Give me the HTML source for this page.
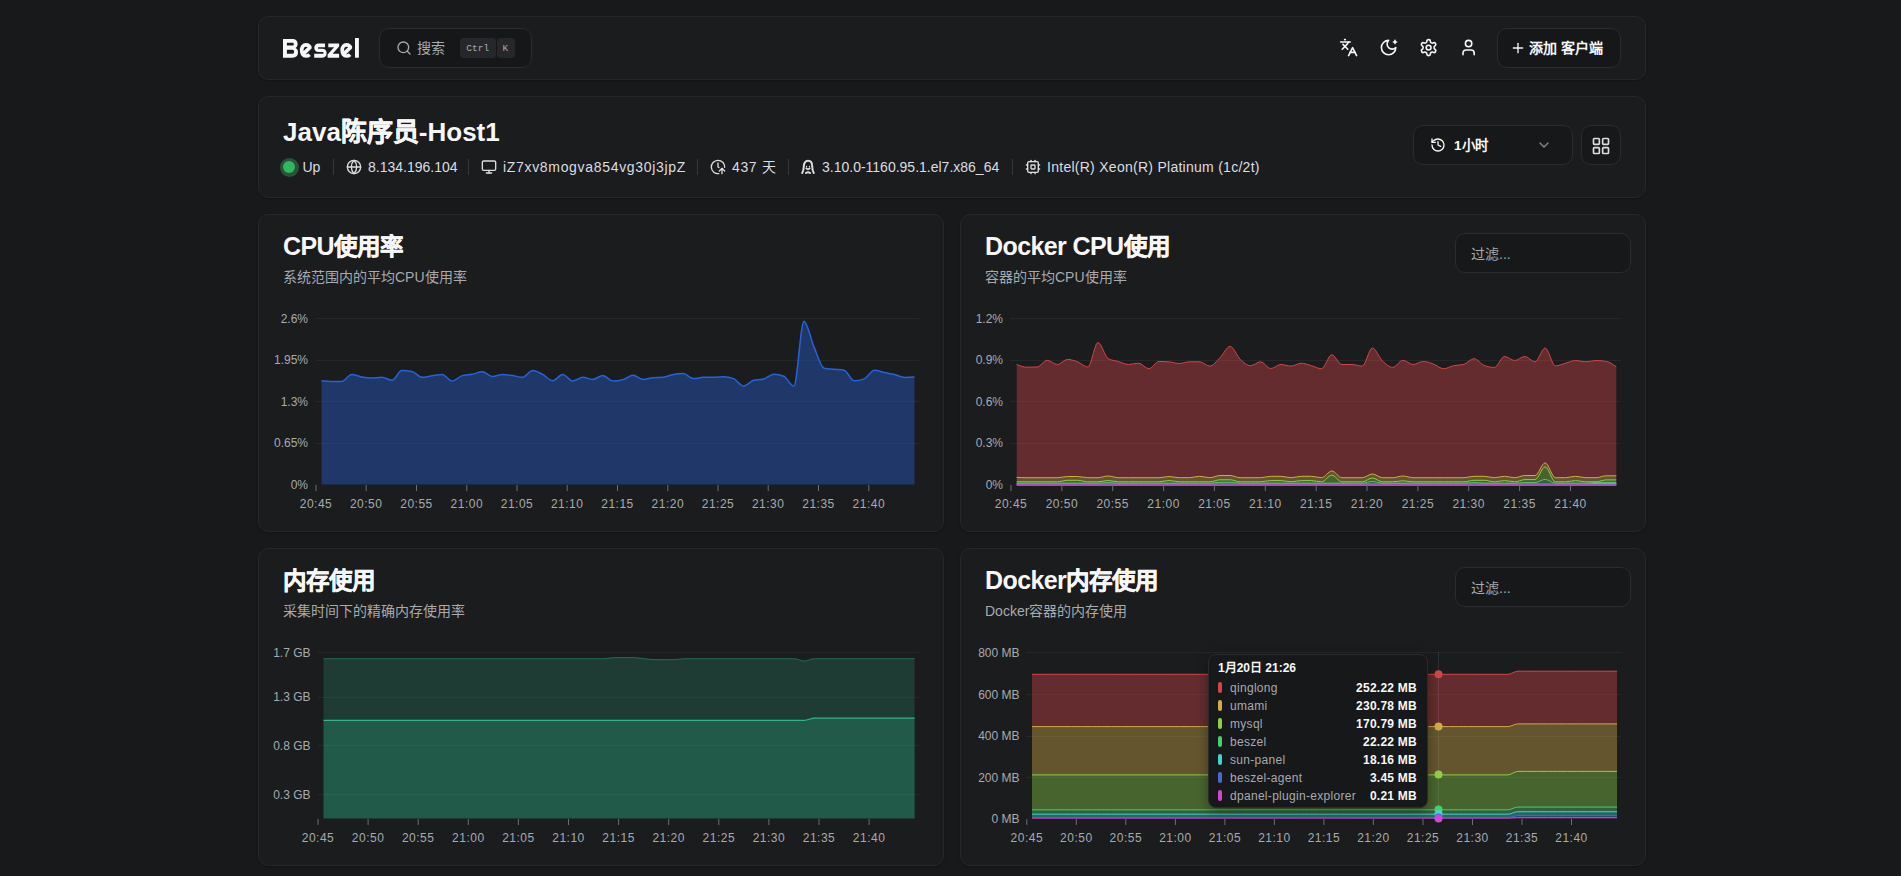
<!DOCTYPE html>
<html lang="zh-CN"><head><meta charset="utf-8">
<style>
*{box-sizing:border-box;margin:0;padding:0}
html,body{width:1901px;height:876px;overflow:hidden;background:#18191b;font-family:"Liberation Sans",sans-serif;color:#f7f7f8}
.abs{position:absolute}
.card{position:absolute;background:#1b1c1e;border:1px solid #262729;border-radius:10px;box-shadow:0 1px 2px rgba(0,0,0,.25)}
.btn{position:absolute;border:1px solid #2b2c2f;border-radius:10px;background:#171819}
.t{position:absolute;white-space:nowrap;line-height:1}
.ico{position:absolute;fill:none;stroke:currentColor;stroke-width:2;stroke-linecap:round;stroke-linejoin:round;overflow:visible}
.title{font-size:25px;font-weight:bold;letter-spacing:-0.6px}
.cj{font-size:23.5px;letter-spacing:0;-webkit-text-stroke:0.45px #f7f7f8}
.sub{font-size:14px;color:#a7aaae}
.sep{position:absolute;width:1px;height:16px;background:#36373a;top:159px}
.info{font-size:14px;color:#dcdde0;top:160px}
.xl text{font-family:"Liberation Sans",sans-serif;font-size:12px;fill:#a7aaae;text-anchor:middle;letter-spacing:0.5px}
.yl text{font-family:"Liberation Sans",sans-serif;font-size:12px;fill:#a7aaae;text-anchor:end}
.kbd{position:absolute;top:38px;height:20px;background:#26272a;border-radius:3.5px;font-family:"Liberation Mono",monospace;font-size:9.5px;color:#a7aaae;line-height:21px;text-align:center}
.tt{position:absolute;font-size:12px;line-height:1;white-space:nowrap}
.tt .n{position:absolute;left:22px;color:#a7aaae;letter-spacing:0.3px}
.tt .v{position:absolute;right:11px;font-weight:bold;color:#f7f7f8;letter-spacing:0.25px}
.tt .i{position:absolute;left:10px;width:4px;height:11px;border-radius:2px}
</style></head><body>

<!-- HEADER -->
<div class="card" style="left:258px;top:16px;width:1388px;height:64px"></div>
<svg class="abs" style="left:0;top:0" width="400" height="70" viewBox="0 0 400 70">
  <g fill="#f7f7f8" fill-rule="evenodd">
    <path d="M283,38.9 H292.6 C296,38.9 297.6,41 297.6,44 C297.6,46 296.8,47.3 295.6,47.9 C297.2,48.6 298,50.1 298,52.3 C298,55.6 296,57.7 292.6,57.7 H283 Z M286.9,42.7 V45.6 H292.3 C293.3,45.6 293.8,45 293.8,44.15 C293.8,43.3 293.3,42.7 292.3,42.7 Z M286.9,49.8 V53.8 H292.4 C293.5,53.8 294.1,53 294.1,51.8 C294.1,50.6 293.5,49.8 292.4,49.8 Z"/>
    <path d="M314.2,53.8 H322.5 C323.3,53.8 323.6,53.4 323.6,52.8 C323.6,52.2 323.3,51.9 322.5,51.9 H318.6 C315.8,51.9 314.3,50.4 314.3,47.7 C314.3,45 315.9,43.4 318.6,43.4 H325 V47.3 H318.7 C318.1,47.3 317.9,47.6 317.9,48.1 C317.9,48.6 318.1,48.8 318.7,48.8 H322.3 C325.1,48.8 326.6,50.4 326.6,53.1 C326.6,56.1 325,57.7 322.3,57.7 H314.2 Z"/>
    <path d="M328.3,43.4 H339.1 V46.6 L332.6,53.8 H339.1 V57.7 H327.6 V54.5 L334.1,47.3 H328.3 Z"/>
    <rect x="355" y="38" width="3.9" height="19.7"/>
  </g>
  <g fill="none" stroke="#f7f7f8" stroke-width="3.7" stroke-linecap="butt">
    <path d="M309.6,54.6 C308.6,55.6 307.3,56 305.9,56 C303.3,56 301.7,53.5 301.7,50.3 C301.7,47 303.4,44.9 305.9,44.9 C308.4,44.9 310.2,46.6 309.9,47.6 L303.6,53.6"/>
    <path d="M350.1,54.6 C349.1,55.6 347.8,56 346.4,56 C343.8,56 342.2,53.5 342.2,50.3 C342.2,47 343.9,44.9 346.4,44.9 C348.9,44.9 350.7,46.6 350.4,47.6 L344.1,53.6"/>
  </g>
</svg>
<div class="btn" style="left:379px;top:28px;width:153px;height:40px;background:#161719"></div>
<svg class="ico" style="left:396px;top:40px;color:#a7aaae" width="16" height="16" viewBox="0 0 24 24"><circle cx="11" cy="11" r="8"/><path d="m21 21-4.3-4.3"/></svg>
<div class="t" style="left:417px;top:41px;font-size:14px;color:#a7aaae">搜索</div>
<div class="kbd" style="left:460px;width:35.5px">Ctrl</div>
<div class="kbd" style="left:496.5px;width:18.5px;padding-right:1px">K</div>

<svg class="ico" style="left:1339px;top:38px" width="19.2" height="19.2" viewBox="0 0 24 24"><path d="m5 8 6 6"/><path d="m4 14 6-6 2-3"/><path d="M2 5h12"/><path d="M7 2h1"/><path d="m22 22-5-10-5 10"/><path d="M14 18h6"/></svg>
<svg class="ico" style="left:1379px;top:38px" width="19.2" height="19.2" viewBox="0 0 24 24"><path d="M12 3a6 6 0 0 0 9 9 9 9 0 1 1-9-9Z"/><path d="M20 3v4"/><path d="M22 5h-4"/></svg>
<svg class="ico" style="left:1419px;top:38px" width="19.2" height="19.2" viewBox="0 0 24 24"><path d="M12.22 2h-.44a2 2 0 0 0-2 2v.18a2 2 0 0 1-1 1.73l-.43.25a2 2 0 0 1-2 0l-.15-.08a2 2 0 0 0-2.73.73l-.22.38a2 2 0 0 0 .73 2.73l.15.1a2 2 0 0 1 1 1.72v.51a2 2 0 0 1-1 1.74l-.15.09a2 2 0 0 0-.73 2.73l.22.38a2 2 0 0 0 2.73.73l.15-.08a2 2 0 0 1 2 0l.43.25a2 2 0 0 1 1 1.73V20a2 2 0 0 0 2 2h.44a2 2 0 0 0 2-2v-.18a2 2 0 0 1 1-1.73l.43-.25a2 2 0 0 1 2 0l.15.08a2 2 0 0 0 2.73-.73l.22-.39a2 2 0 0 0-.73-2.73l-.15-.08a2 2 0 0 1-1-1.74v-.5a2 2 0 0 1 1-1.74l.15-.09a2 2 0 0 0 .73-2.73l-.22-.38a2 2 0 0 0-2.73-.73l-.15.08a2 2 0 0 1-2 0l-.43-.25a2 2 0 0 1-1-1.73V4a2 2 0 0 0-2-2z"/><circle cx="12" cy="12" r="3"/></svg>
<svg class="ico" style="left:1459px;top:38px" width="19.2" height="19.2" viewBox="0 0 24 24"><path d="M19 21v-2a4 4 0 0 0-4-4H9a4 4 0 0 0-4 4v2"/><circle cx="12" cy="7" r="4"/></svg>

<div class="btn" style="left:1497px;top:28px;width:124px;height:40px;background:#161719"></div>
<svg class="ico" style="left:1510px;top:40px" width="16" height="16" viewBox="0 0 24 24"><path d="M5 12h14"/><path d="M12 5v14"/></svg>
<div class="t" style="left:1529px;top:41px;font-size:14px;font-weight:600">添加 客户端</div>

<!-- INFO -->
<div class="card" style="left:258px;top:96px;width:1388px;height:102px"></div>
<div class="t title" style="left:283px;top:119px;font-size:26px;letter-spacing:0">Java<span style="-webkit-text-stroke:0.45px #f7f7f8">陈序员</span>-Host1</div>

<div class="abs" style="left:279.5px;top:157.5px;width:19px;height:19px;border-radius:50%;background:#29523a"></div>
<div class="abs" style="left:283px;top:161px;width:12px;height:12px;border-radius:50%;background:#34b560"></div>
<div class="t info" style="left:302.5px">Up</div>
<div class="sep" style="left:333px"></div>
<svg class="ico" style="left:346px;top:159px;color:#dcdde0" width="16" height="16" viewBox="0 0 24 24"><circle cx="12" cy="12" r="10"/><path d="M12 2a14.5 14.5 0 0 0 0 20 14.5 14.5 0 0 0 0-20"/><path d="M2 12h20"/></svg>
<div class="t info" style="left:368px">8.134.196.104</div>
<div class="sep" style="left:468px"></div>
<svg class="ico" style="left:480.7px;top:159px;color:#dcdde0" width="16" height="16" viewBox="0 0 24 24"><rect width="20" height="14" x="2" y="3" rx="2"/><path d="M8 21h8"/><path d="M12 17v4"/></svg>
<div class="t info" style="left:503px;letter-spacing:0.68px">iZ7xv8mogva854vg30j3jpZ</div>
<div class="sep" style="left:697px"></div>
<svg class="ico" style="left:710.3px;top:159px;color:#dcdde0" width="16" height="16" viewBox="0 0 24 24"><path d="M13.228 21.925A10 10 0 1 1 21.994 12.338"/><path d="M12 6v6l1.562.781"/><path d="m14 18 4-4 4 4"/><path d="M18 22v-8"/></svg>
<div class="t info" style="left:732px;letter-spacing:0.6px;word-spacing:0px">437 天</div>
<div class="sep" style="left:787.5px"></div>
<svg class="ico" style="left:799px;top:158.5px;color:#dcdde0" width="18" height="18" viewBox="0 0 18 18" stroke-width="1.2"><path d="M3.2,14 C4.6,11.5 4.8,9.5 4.8,7.2 C4.8,4 6.4,1.8 9,1.8 C11.6,1.8 13.2,4 13.2,7.2 C13.2,9.5 13.4,11.5 14.8,14"/><path d="M7.4,9.4 Q9,11 10.6,9.4"/><path d="M6.9,14 Q9,12.7 11.1,14"/><circle cx="7.5" cy="7.4" r=".7" fill="currentColor" stroke="none"/><circle cx="10.5" cy="7.4" r=".7" fill="currentColor" stroke="none"/></svg>
<div class="t info" style="left:822px">3.10.0-1160.95.1.el7.x86_64</div>
<div class="sep" style="left:1012px"></div>
<svg class="ico" style="left:1025px;top:159px;color:#dcdde0" width="16" height="16" viewBox="0 0 24 24"><rect width="16" height="16" x="4" y="4" rx="2"/><rect width="6" height="6" x="9" y="9" rx="1"/><path d="M15 2v2"/><path d="M15 20v2"/><path d="M2 15h2"/><path d="M2 9h2"/><path d="M20 15h2"/><path d="M20 9h2"/><path d="M9 2v2"/><path d="M9 20v2"/></svg>
<div class="t info" style="left:1047px;letter-spacing:0.27px">Intel(R) Xeon(R) Platinum (1c/2t)</div>

<div class="btn" style="left:1413px;top:125px;width:160px;height:40px"></div>
<svg class="ico" style="left:1429.8px;top:136.6px" width="16" height="16" viewBox="0 0 24 24"><path d="M3 12a9 9 0 1 0 9-9 9.75 9.75 0 0 0-6.74 2.74L3 8"/><path d="M3 3v5h5"/><path d="M12 7v5l4 2"/></svg>
<div class="t" style="left:1454px;top:138.5px;font-size:13.5px;font-weight:600">1小时</div>
<svg class="ico" style="left:1536px;top:137px;opacity:.5" width="16" height="16" viewBox="0 0 24 24"><path d="m6 9 6 6 6-6"/></svg>
<div class="btn" style="left:1581px;top:125px;width:40px;height:40px"></div>
<svg class="ico" style="left:1590.5px;top:135.6px;color:#dcdde0" width="20" height="20" viewBox="0 0 24 24"><rect width="7" height="7" x="3" y="3" rx="1"/><rect width="7" height="7" x="14" y="3" rx="1"/><rect width="7" height="7" x="14" y="14" rx="1"/><rect width="7" height="7" x="3" y="14" rx="1"/></svg>

<!-- CHART CARDS -->
<div class="card" style="left:258px;top:214px;width:686px;height:318px"></div>
<div class="card" style="left:960px;top:214px;width:686px;height:318px"></div>
<div class="card" style="left:258px;top:548px;width:686px;height:318px"></div>
<div class="card" style="left:960px;top:548px;width:686px;height:318px"></div>

<div class="t title" style="left:283px;top:234px">CPU<span class="cj">使用率</span></div>
<div class="t sub" style="left:283px;top:270px">系统范围内的平均CPU使用率</div>
<div class="t title" style="left:985px;top:234px">Docker CPU<span class="cj">使用</span></div>
<div class="t sub" style="left:985px;top:270px">容器的平均CPU使用率</div>
<div class="t title" style="left:283px;top:568px"><span class="cj">内存使用</span></div>
<div class="t sub" style="left:283px;top:604px">采集时间下的精确内存使用率</div>
<div class="t title" style="left:985px;top:568px">Docker<span class="cj">内存使用</span></div>
<div class="t sub" style="left:985px;top:604px">Docker容器的内存使用</div>

<div class="btn" style="left:1455px;top:233px;width:176px;height:40px"></div>
<div class="t sub" style="left:1471px;top:247px">过滤...</div>
<div class="btn" style="left:1455px;top:567px;width:176px;height:40px"></div>
<div class="t sub" style="left:1471px;top:581px">过滤...</div>

<svg class="abs" style="left:0;top:0" width="1901" height="876" viewBox="0 0 1901 876">
<g stroke="#262729" stroke-width="1"><line x1="316.0" y1="318.5" x2="919.0" y2="318.5"/><line x1="316.0" y1="360.5" x2="919.0" y2="360.5"/><line x1="316.0" y1="401.5" x2="919.0" y2="401.5"/><line x1="316.0" y1="443.5" x2="919.0" y2="443.5"/></g>
<path d="M321.50,380.70 C324.85,381.10 328.20,381.50 331.55,381.50 C334.90,381.50 338.25,381.50 341.60,381.50 C344.95,381.50 348.30,374.40 351.65,374.40 C355.00,374.40 358.35,376.38 361.70,377.00 C365.05,377.62 368.40,378.10 371.75,378.10 C375.10,378.10 378.45,377.30 381.81,377.30 C385.16,377.30 388.51,380.30 391.86,380.30 C395.21,380.30 398.56,370.60 401.91,370.60 C405.26,370.60 408.61,370.87 411.96,371.40 C415.31,371.93 418.66,377.30 422.01,377.30 C425.36,377.30 428.71,376.28 432.06,375.80 C435.41,375.32 438.76,374.40 442.11,374.40 C445.46,374.40 448.81,381.10 452.16,381.10 C455.51,381.10 458.86,376.53 462.21,375.60 C465.56,374.67 468.91,374.83 472.26,374.20 C475.61,373.57 478.96,371.80 482.31,371.80 C485.66,371.80 489.01,376.50 492.36,376.50 C495.71,376.50 499.06,374.50 502.42,374.50 C505.77,374.50 509.12,375.13 512.47,375.60 C515.82,376.07 519.17,377.30 522.52,377.30 C525.87,377.30 529.22,370.60 532.57,370.60 C535.92,370.60 539.27,372.72 542.62,374.40 C545.97,376.08 549.32,380.70 552.67,380.70 C556.02,380.70 559.37,374.50 562.72,374.50 C566.07,374.50 569.42,381.10 572.77,381.10 C576.12,381.10 579.47,377.30 582.82,377.30 C586.17,377.30 589.52,379.40 592.87,379.40 C596.22,379.40 599.57,375.60 602.92,375.60 C606.27,375.60 609.62,381.10 612.97,381.10 C616.32,381.10 619.68,380.58 623.03,379.60 C626.38,378.62 629.73,375.20 633.08,375.20 C636.43,375.20 639.78,379.40 643.13,379.40 C646.48,379.40 649.83,377.97 653.18,377.70 C656.53,377.43 659.88,377.57 663.23,377.30 C666.58,377.03 669.93,375.00 673.28,374.40 C676.63,373.80 679.98,373.50 683.33,373.50 C686.68,373.50 690.03,378.60 693.38,378.60 C696.73,378.60 700.08,377.30 703.43,377.30 C706.78,377.30 710.13,377.30 713.48,377.30 C716.83,377.30 720.18,376.70 723.53,376.70 C726.88,376.70 730.23,377.33 733.58,378.60 C736.94,379.87 740.29,386.10 743.64,386.10 C746.99,386.10 750.34,381.17 753.69,380.30 C757.04,379.43 760.39,379.87 763.74,379.00 C767.09,378.13 770.44,374.20 773.79,374.20 C777.14,374.20 780.49,374.90 783.84,376.30 C787.19,377.70 790.54,386.20 793.89,386.20 C797.24,386.20 800.59,321.20 803.94,321.20 C807.29,321.20 810.64,339.07 813.99,346.90 C817.34,354.73 820.69,367.53 824.04,368.20 C827.39,368.87 830.74,368.87 834.09,369.20 C837.44,369.53 840.79,369.53 844.14,370.20 C847.49,370.87 850.84,380.80 854.19,380.80 C857.55,380.80 860.90,380.17 864.25,378.90 C867.60,377.63 870.95,370.20 874.30,370.20 C877.65,370.20 881.00,371.88 884.35,372.60 C887.70,373.32 891.05,373.70 894.40,374.50 C897.75,375.30 901.10,377.40 904.45,377.40 C907.80,377.40 911.15,377.20 914.50,377.00 L914.50,484.5 L321.50,484.5 Z" fill="#2662d9" fill-opacity="0.4"/>
<path d="M321.50,380.70 C324.85,381.10 328.20,381.50 331.55,381.50 C334.90,381.50 338.25,381.50 341.60,381.50 C344.95,381.50 348.30,374.40 351.65,374.40 C355.00,374.40 358.35,376.38 361.70,377.00 C365.05,377.62 368.40,378.10 371.75,378.10 C375.10,378.10 378.45,377.30 381.81,377.30 C385.16,377.30 388.51,380.30 391.86,380.30 C395.21,380.30 398.56,370.60 401.91,370.60 C405.26,370.60 408.61,370.87 411.96,371.40 C415.31,371.93 418.66,377.30 422.01,377.30 C425.36,377.30 428.71,376.28 432.06,375.80 C435.41,375.32 438.76,374.40 442.11,374.40 C445.46,374.40 448.81,381.10 452.16,381.10 C455.51,381.10 458.86,376.53 462.21,375.60 C465.56,374.67 468.91,374.83 472.26,374.20 C475.61,373.57 478.96,371.80 482.31,371.80 C485.66,371.80 489.01,376.50 492.36,376.50 C495.71,376.50 499.06,374.50 502.42,374.50 C505.77,374.50 509.12,375.13 512.47,375.60 C515.82,376.07 519.17,377.30 522.52,377.30 C525.87,377.30 529.22,370.60 532.57,370.60 C535.92,370.60 539.27,372.72 542.62,374.40 C545.97,376.08 549.32,380.70 552.67,380.70 C556.02,380.70 559.37,374.50 562.72,374.50 C566.07,374.50 569.42,381.10 572.77,381.10 C576.12,381.10 579.47,377.30 582.82,377.30 C586.17,377.30 589.52,379.40 592.87,379.40 C596.22,379.40 599.57,375.60 602.92,375.60 C606.27,375.60 609.62,381.10 612.97,381.10 C616.32,381.10 619.68,380.58 623.03,379.60 C626.38,378.62 629.73,375.20 633.08,375.20 C636.43,375.20 639.78,379.40 643.13,379.40 C646.48,379.40 649.83,377.97 653.18,377.70 C656.53,377.43 659.88,377.57 663.23,377.30 C666.58,377.03 669.93,375.00 673.28,374.40 C676.63,373.80 679.98,373.50 683.33,373.50 C686.68,373.50 690.03,378.60 693.38,378.60 C696.73,378.60 700.08,377.30 703.43,377.30 C706.78,377.30 710.13,377.30 713.48,377.30 C716.83,377.30 720.18,376.70 723.53,376.70 C726.88,376.70 730.23,377.33 733.58,378.60 C736.94,379.87 740.29,386.10 743.64,386.10 C746.99,386.10 750.34,381.17 753.69,380.30 C757.04,379.43 760.39,379.87 763.74,379.00 C767.09,378.13 770.44,374.20 773.79,374.20 C777.14,374.20 780.49,374.90 783.84,376.30 C787.19,377.70 790.54,386.20 793.89,386.20 C797.24,386.20 800.59,321.20 803.94,321.20 C807.29,321.20 810.64,339.07 813.99,346.90 C817.34,354.73 820.69,367.53 824.04,368.20 C827.39,368.87 830.74,368.87 834.09,369.20 C837.44,369.53 840.79,369.53 844.14,370.20 C847.49,370.87 850.84,380.80 854.19,380.80 C857.55,380.80 860.90,380.17 864.25,378.90 C867.60,377.63 870.95,370.20 874.30,370.20 C877.65,370.20 881.00,371.88 884.35,372.60 C887.70,373.32 891.05,373.70 894.40,374.50 C897.75,375.30 901.10,377.40 904.45,377.40 C907.80,377.40 911.15,377.20 914.50,377.00" fill="none" stroke="#2662d9" stroke-width="1.5"/>
<g stroke="#6b6e73" stroke-width="1"><line x1="316.0" y1="485.0" x2="316.0" y2="491.0"/><line x1="366.2" y1="485.0" x2="366.2" y2="491.0"/><line x1="416.5" y1="485.0" x2="416.5" y2="491.0"/><line x1="466.8" y1="485.0" x2="466.8" y2="491.0"/><line x1="517.0" y1="485.0" x2="517.0" y2="491.0"/><line x1="567.2" y1="485.0" x2="567.2" y2="491.0"/><line x1="617.5" y1="485.0" x2="617.5" y2="491.0"/><line x1="667.8" y1="485.0" x2="667.8" y2="491.0"/><line x1="718.0" y1="485.0" x2="718.0" y2="491.0"/><line x1="768.2" y1="485.0" x2="768.2" y2="491.0"/><line x1="818.5" y1="485.0" x2="818.5" y2="491.0"/><line x1="868.8" y1="485.0" x2="868.8" y2="491.0"/></g>
<g class="xl"><text x="316.0" y="507.5">20:45</text><text x="366.2" y="507.5">20:50</text><text x="416.5" y="507.5">20:55</text><text x="466.8" y="507.5">21:00</text><text x="517.0" y="507.5">21:05</text><text x="567.2" y="507.5">21:10</text><text x="617.5" y="507.5">21:15</text><text x="667.8" y="507.5">21:20</text><text x="718.0" y="507.5">21:25</text><text x="768.2" y="507.5">21:30</text><text x="818.5" y="507.5">21:35</text><text x="868.8" y="507.5">21:40</text></g>
<g class="yl"><text x="308.0" y="322.5">2.6%</text><text x="308.0" y="364.0">1.95%</text><text x="308.0" y="405.5">1.3%</text><text x="308.0" y="447.0">0.65%</text><text x="308.0" y="488.5">0%</text></g>
<g stroke="#262729" stroke-width="1"><line x1="1010.0" y1="318.5" x2="1621.0" y2="318.5"/><line x1="1010.0" y1="360.5" x2="1621.0" y2="360.5"/><line x1="1010.0" y1="401.5" x2="1621.0" y2="401.5"/><line x1="1010.0" y1="443.5" x2="1621.0" y2="443.5"/></g>
<path d="M1016.70,364.50 C1020.09,365.85 1023.48,367.20 1026.86,367.20 C1030.25,367.20 1033.64,367.13 1037.03,367.00 C1040.41,366.87 1043.80,360.30 1047.19,360.30 C1050.58,360.30 1053.96,364.50 1057.35,364.50 C1060.74,364.50 1064.13,359.40 1067.51,359.40 C1070.90,359.40 1074.29,360.63 1077.68,361.90 C1081.06,363.17 1084.45,367.00 1087.84,367.00 C1091.23,367.00 1094.61,342.60 1098.00,342.60 C1101.39,342.60 1104.78,356.67 1108.16,358.60 C1111.55,360.53 1114.94,360.52 1118.33,361.50 C1121.71,362.48 1125.10,364.50 1128.49,364.50 C1131.88,364.50 1135.26,363.20 1138.65,363.20 C1142.04,363.20 1145.43,368.70 1148.82,368.70 C1152.20,368.70 1155.59,361.50 1158.98,361.50 C1162.37,361.50 1165.75,361.63 1169.14,361.90 C1172.53,362.17 1175.92,363.50 1179.30,363.50 C1182.69,363.50 1186.08,361.80 1189.47,361.80 C1192.85,361.80 1196.24,361.80 1199.63,361.80 C1203.02,361.80 1206.40,366.10 1209.79,366.10 C1213.18,366.10 1216.57,360.98 1219.95,357.70 C1223.34,354.42 1226.73,346.40 1230.12,346.40 C1233.50,346.40 1236.89,356.18 1240.28,359.40 C1243.67,362.62 1247.05,365.70 1250.44,365.70 C1253.83,365.70 1257.22,361.80 1260.61,361.80 C1263.99,361.80 1267.38,368.50 1270.77,368.50 C1274.16,368.50 1277.54,364.50 1280.93,364.50 C1284.32,364.50 1287.71,366.10 1291.09,366.10 C1294.48,366.10 1297.87,363.20 1301.26,363.20 C1304.64,363.20 1308.03,364.78 1311.42,365.70 C1314.81,366.62 1318.19,368.70 1321.58,368.70 C1324.97,368.70 1328.36,354.80 1331.74,354.80 C1335.13,354.80 1338.52,364.50 1341.91,364.50 C1345.29,364.50 1348.68,364.50 1352.07,364.50 C1355.46,364.50 1358.84,366.10 1362.23,366.10 C1365.62,366.10 1369.01,348.00 1372.39,348.00 C1375.78,348.00 1379.17,357.87 1382.56,361.10 C1385.95,364.33 1389.33,367.40 1392.72,367.40 C1396.11,367.40 1399.50,360.30 1402.88,360.30 C1406.27,360.30 1409.66,364.50 1413.05,364.50 C1416.43,364.50 1419.82,361.50 1423.21,361.50 C1426.60,361.50 1429.98,362.80 1433.37,364.00 C1436.76,365.20 1440.15,368.70 1443.53,368.70 C1446.92,368.70 1450.31,366.43 1453.70,365.70 C1457.08,364.97 1460.47,365.23 1463.86,364.30 C1467.25,363.37 1470.63,358.70 1474.02,358.70 C1477.41,358.70 1480.80,364.07 1484.18,365.40 C1487.57,366.73 1490.96,367.40 1494.35,367.40 C1497.74,367.40 1501.12,356.50 1504.51,356.50 C1507.90,356.50 1511.29,360.50 1514.67,360.50 C1518.06,360.50 1521.45,356.50 1524.84,356.50 C1528.22,356.50 1531.61,361.80 1535.00,361.80 C1538.39,361.80 1541.77,348.00 1545.16,348.00 C1548.55,348.00 1551.94,365.90 1555.32,365.90 C1558.71,365.90 1562.10,364.10 1565.49,363.20 C1568.87,362.30 1572.26,360.50 1575.65,360.50 C1579.04,360.50 1582.42,361.80 1585.81,361.80 C1589.20,361.80 1592.59,360.50 1595.97,360.50 C1599.36,360.50 1602.75,360.80 1606.14,361.40 C1609.52,362.00 1612.91,364.40 1616.30,366.80 L1616.30,475.80 C1612.91,475.80 1609.52,475.80 1606.14,475.80 C1602.75,475.80 1599.36,477.70 1595.97,477.70 C1592.59,477.70 1589.20,477.70 1585.81,477.70 C1582.42,477.70 1579.04,476.30 1575.65,476.30 C1572.26,476.30 1568.87,477.70 1565.49,477.70 C1562.10,477.70 1558.71,477.70 1555.32,477.70 C1551.94,477.70 1548.55,462.90 1545.16,462.90 C1541.77,462.90 1538.39,475.50 1535.00,475.50 C1531.61,475.50 1528.22,475.50 1524.84,475.50 C1521.45,475.50 1518.06,477.70 1514.67,477.70 C1511.29,477.70 1507.90,476.30 1504.51,476.30 C1501.12,476.30 1497.74,477.70 1494.35,477.70 C1490.96,477.70 1487.57,476.30 1484.18,476.30 C1480.80,476.30 1477.41,476.30 1474.02,476.30 C1470.63,476.30 1467.25,477.70 1463.86,477.70 C1460.47,477.70 1457.08,477.70 1453.70,477.70 C1450.31,477.70 1446.92,477.70 1443.53,477.70 C1440.15,477.70 1436.76,477.70 1433.37,477.70 C1429.98,477.70 1426.60,477.70 1423.21,477.70 C1419.82,477.70 1416.43,477.70 1413.05,477.70 C1409.66,477.70 1406.27,476.00 1402.88,476.00 C1399.50,476.00 1396.11,477.70 1392.72,477.70 C1389.33,477.70 1385.95,477.70 1382.56,477.70 C1379.17,477.70 1375.78,474.00 1372.39,474.00 C1369.01,474.00 1365.62,477.70 1362.23,477.70 C1358.84,477.70 1355.46,477.70 1352.07,477.70 C1348.68,477.70 1345.29,477.70 1341.91,477.70 C1338.52,477.70 1335.13,471.00 1331.74,471.00 C1328.36,471.00 1324.97,477.70 1321.58,477.70 C1318.19,477.70 1314.81,476.30 1311.42,476.30 C1308.03,476.30 1304.64,476.30 1301.26,476.30 C1297.87,476.30 1294.48,477.70 1291.09,477.70 C1287.71,477.70 1284.32,476.30 1280.93,476.30 C1277.54,476.30 1274.16,476.30 1270.77,476.30 C1267.38,476.30 1263.99,477.70 1260.61,477.70 C1257.22,477.70 1253.83,477.70 1250.44,477.70 C1247.05,477.70 1243.67,477.70 1240.28,477.70 C1236.89,477.70 1233.50,475.50 1230.12,475.50 C1226.73,475.50 1223.34,475.50 1219.95,475.50 C1216.57,475.50 1213.18,477.70 1209.79,477.70 C1206.40,477.70 1203.02,476.30 1199.63,476.30 C1196.24,476.30 1192.85,477.70 1189.47,477.70 C1186.08,477.70 1182.69,477.70 1179.30,477.70 C1175.92,477.70 1172.53,476.50 1169.14,476.50 C1165.75,476.50 1162.37,477.70 1158.98,477.70 C1155.59,477.70 1152.20,477.70 1148.82,477.70 C1145.43,477.70 1142.04,477.70 1138.65,477.70 C1135.26,477.70 1131.88,477.70 1128.49,477.70 C1125.10,477.70 1121.71,477.70 1118.33,477.70 C1114.94,477.70 1111.55,476.00 1108.16,476.00 C1104.78,476.00 1101.39,477.70 1098.00,477.70 C1094.61,477.70 1091.23,477.70 1087.84,477.70 C1084.45,477.70 1081.06,476.50 1077.68,476.50 C1074.29,476.50 1070.90,476.50 1067.51,476.50 C1064.13,476.50 1060.74,477.70 1057.35,477.70 C1053.96,477.70 1050.58,477.70 1047.19,477.70 C1043.80,477.70 1040.41,477.70 1037.03,477.70 C1033.64,477.70 1030.25,477.70 1026.86,477.70 C1023.48,477.70 1020.09,477.50 1016.70,477.30 Z" fill="#d14747" fill-opacity="0.4"/>
<path d="M1016.70,477.30 C1020.09,477.50 1023.48,477.70 1026.86,477.70 C1030.25,477.70 1033.64,477.70 1037.03,477.70 C1040.41,477.70 1043.80,477.70 1047.19,477.70 C1050.58,477.70 1053.96,477.70 1057.35,477.70 C1060.74,477.70 1064.13,476.50 1067.51,476.50 C1070.90,476.50 1074.29,476.50 1077.68,476.50 C1081.06,476.50 1084.45,477.70 1087.84,477.70 C1091.23,477.70 1094.61,477.70 1098.00,477.70 C1101.39,477.70 1104.78,476.00 1108.16,476.00 C1111.55,476.00 1114.94,477.70 1118.33,477.70 C1121.71,477.70 1125.10,477.70 1128.49,477.70 C1131.88,477.70 1135.26,477.70 1138.65,477.70 C1142.04,477.70 1145.43,477.70 1148.82,477.70 C1152.20,477.70 1155.59,477.70 1158.98,477.70 C1162.37,477.70 1165.75,476.50 1169.14,476.50 C1172.53,476.50 1175.92,477.70 1179.30,477.70 C1182.69,477.70 1186.08,477.70 1189.47,477.70 C1192.85,477.70 1196.24,476.30 1199.63,476.30 C1203.02,476.30 1206.40,477.70 1209.79,477.70 C1213.18,477.70 1216.57,475.50 1219.95,475.50 C1223.34,475.50 1226.73,475.50 1230.12,475.50 C1233.50,475.50 1236.89,477.70 1240.28,477.70 C1243.67,477.70 1247.05,477.70 1250.44,477.70 C1253.83,477.70 1257.22,477.70 1260.61,477.70 C1263.99,477.70 1267.38,476.30 1270.77,476.30 C1274.16,476.30 1277.54,476.30 1280.93,476.30 C1284.32,476.30 1287.71,477.70 1291.09,477.70 C1294.48,477.70 1297.87,476.30 1301.26,476.30 C1304.64,476.30 1308.03,476.30 1311.42,476.30 C1314.81,476.30 1318.19,477.70 1321.58,477.70 C1324.97,477.70 1328.36,471.00 1331.74,471.00 C1335.13,471.00 1338.52,477.70 1341.91,477.70 C1345.29,477.70 1348.68,477.70 1352.07,477.70 C1355.46,477.70 1358.84,477.70 1362.23,477.70 C1365.62,477.70 1369.01,474.00 1372.39,474.00 C1375.78,474.00 1379.17,477.70 1382.56,477.70 C1385.95,477.70 1389.33,477.70 1392.72,477.70 C1396.11,477.70 1399.50,476.00 1402.88,476.00 C1406.27,476.00 1409.66,477.70 1413.05,477.70 C1416.43,477.70 1419.82,477.70 1423.21,477.70 C1426.60,477.70 1429.98,477.70 1433.37,477.70 C1436.76,477.70 1440.15,477.70 1443.53,477.70 C1446.92,477.70 1450.31,477.70 1453.70,477.70 C1457.08,477.70 1460.47,477.70 1463.86,477.70 C1467.25,477.70 1470.63,476.30 1474.02,476.30 C1477.41,476.30 1480.80,476.30 1484.18,476.30 C1487.57,476.30 1490.96,477.70 1494.35,477.70 C1497.74,477.70 1501.12,476.30 1504.51,476.30 C1507.90,476.30 1511.29,477.70 1514.67,477.70 C1518.06,477.70 1521.45,475.50 1524.84,475.50 C1528.22,475.50 1531.61,475.50 1535.00,475.50 C1538.39,475.50 1541.77,462.90 1545.16,462.90 C1548.55,462.90 1551.94,477.70 1555.32,477.70 C1558.71,477.70 1562.10,477.70 1565.49,477.70 C1568.87,477.70 1572.26,476.30 1575.65,476.30 C1579.04,476.30 1582.42,477.70 1585.81,477.70 C1589.20,477.70 1592.59,477.70 1595.97,477.70 C1599.36,477.70 1602.75,475.80 1606.14,475.80 C1609.52,475.80 1612.91,475.80 1616.30,475.80 L1616.30,479.90 C1612.91,479.90 1609.52,479.90 1606.14,479.90 C1602.75,479.90 1599.36,481.80 1595.97,481.80 C1592.59,481.80 1589.20,481.80 1585.81,481.80 C1582.42,481.80 1579.04,480.60 1575.65,480.60 C1572.26,480.60 1568.87,481.80 1565.49,481.80 C1562.10,481.80 1558.71,481.80 1555.32,481.80 C1551.94,481.80 1548.55,466.90 1545.16,466.90 C1541.77,466.90 1538.39,479.60 1535.00,479.60 C1531.61,479.60 1528.22,479.60 1524.84,479.60 C1521.45,479.60 1518.06,481.80 1514.67,481.80 C1511.29,481.80 1507.90,480.60 1504.51,480.60 C1501.12,480.60 1497.74,481.80 1494.35,481.80 C1490.96,481.80 1487.57,480.30 1484.18,480.30 C1480.80,480.30 1477.41,480.30 1474.02,480.30 C1470.63,480.30 1467.25,481.80 1463.86,481.80 C1460.47,481.80 1457.08,481.80 1453.70,481.80 C1450.31,481.80 1446.92,481.80 1443.53,481.80 C1440.15,481.80 1436.76,481.80 1433.37,481.80 C1429.98,481.80 1426.60,481.80 1423.21,481.80 C1419.82,481.80 1416.43,481.80 1413.05,481.80 C1409.66,481.80 1406.27,480.80 1402.88,480.80 C1399.50,480.80 1396.11,481.80 1392.72,481.80 C1389.33,481.80 1385.95,481.80 1382.56,481.80 C1379.17,481.80 1375.78,478.00 1372.39,478.00 C1369.01,478.00 1365.62,481.80 1362.23,481.80 C1358.84,481.80 1355.46,481.80 1352.07,481.80 C1348.68,481.80 1345.29,481.80 1341.91,481.80 C1338.52,481.80 1335.13,475.20 1331.74,475.20 C1328.36,475.20 1324.97,481.80 1321.58,481.80 C1318.19,481.80 1314.81,480.60 1311.42,480.60 C1308.03,480.60 1304.64,480.60 1301.26,480.60 C1297.87,480.60 1294.48,481.80 1291.09,481.80 C1287.71,481.80 1284.32,480.60 1280.93,480.60 C1277.54,480.60 1274.16,480.60 1270.77,480.60 C1267.38,480.60 1263.99,481.80 1260.61,481.80 C1257.22,481.80 1253.83,481.80 1250.44,481.80 C1247.05,481.80 1243.67,481.80 1240.28,481.80 C1236.89,481.80 1233.50,479.80 1230.12,479.80 C1226.73,479.80 1223.34,479.80 1219.95,479.80 C1216.57,479.80 1213.18,481.80 1209.79,481.80 C1206.40,481.80 1203.02,481.80 1199.63,481.80 C1196.24,481.80 1192.85,481.80 1189.47,481.80 C1186.08,481.80 1182.69,481.80 1179.30,481.80 C1175.92,481.80 1172.53,480.50 1169.14,480.50 C1165.75,480.50 1162.37,481.80 1158.98,481.80 C1155.59,481.80 1152.20,481.80 1148.82,481.80 C1145.43,481.80 1142.04,481.80 1138.65,481.80 C1135.26,481.80 1131.88,481.80 1128.49,481.80 C1125.10,481.80 1121.71,481.80 1118.33,481.80 C1114.94,481.80 1111.55,480.50 1108.16,480.50 C1104.78,480.50 1101.39,481.80 1098.00,481.80 C1094.61,481.80 1091.23,481.80 1087.84,481.80 C1084.45,481.80 1081.06,480.30 1077.68,480.30 C1074.29,480.30 1070.90,480.30 1067.51,480.30 C1064.13,480.30 1060.74,481.80 1057.35,481.80 C1053.96,481.80 1050.58,481.80 1047.19,481.80 C1043.80,481.80 1040.41,481.80 1037.03,481.80 C1033.64,481.80 1030.25,481.80 1026.86,481.80 C1023.48,481.80 1020.09,481.80 1016.70,481.80 Z" fill="#d1ac47" fill-opacity="0.4"/>
<path d="M1016.70,481.80 C1020.09,481.80 1023.48,481.80 1026.86,481.80 C1030.25,481.80 1033.64,481.80 1037.03,481.80 C1040.41,481.80 1043.80,481.80 1047.19,481.80 C1050.58,481.80 1053.96,481.80 1057.35,481.80 C1060.74,481.80 1064.13,480.30 1067.51,480.30 C1070.90,480.30 1074.29,480.30 1077.68,480.30 C1081.06,480.30 1084.45,481.80 1087.84,481.80 C1091.23,481.80 1094.61,481.80 1098.00,481.80 C1101.39,481.80 1104.78,480.50 1108.16,480.50 C1111.55,480.50 1114.94,481.80 1118.33,481.80 C1121.71,481.80 1125.10,481.80 1128.49,481.80 C1131.88,481.80 1135.26,481.80 1138.65,481.80 C1142.04,481.80 1145.43,481.80 1148.82,481.80 C1152.20,481.80 1155.59,481.80 1158.98,481.80 C1162.37,481.80 1165.75,480.50 1169.14,480.50 C1172.53,480.50 1175.92,481.80 1179.30,481.80 C1182.69,481.80 1186.08,481.80 1189.47,481.80 C1192.85,481.80 1196.24,481.80 1199.63,481.80 C1203.02,481.80 1206.40,481.80 1209.79,481.80 C1213.18,481.80 1216.57,479.80 1219.95,479.80 C1223.34,479.80 1226.73,479.80 1230.12,479.80 C1233.50,479.80 1236.89,481.80 1240.28,481.80 C1243.67,481.80 1247.05,481.80 1250.44,481.80 C1253.83,481.80 1257.22,481.80 1260.61,481.80 C1263.99,481.80 1267.38,480.60 1270.77,480.60 C1274.16,480.60 1277.54,480.60 1280.93,480.60 C1284.32,480.60 1287.71,481.80 1291.09,481.80 C1294.48,481.80 1297.87,480.60 1301.26,480.60 C1304.64,480.60 1308.03,480.60 1311.42,480.60 C1314.81,480.60 1318.19,481.80 1321.58,481.80 C1324.97,481.80 1328.36,475.20 1331.74,475.20 C1335.13,475.20 1338.52,481.80 1341.91,481.80 C1345.29,481.80 1348.68,481.80 1352.07,481.80 C1355.46,481.80 1358.84,481.80 1362.23,481.80 C1365.62,481.80 1369.01,478.00 1372.39,478.00 C1375.78,478.00 1379.17,481.80 1382.56,481.80 C1385.95,481.80 1389.33,481.80 1392.72,481.80 C1396.11,481.80 1399.50,480.80 1402.88,480.80 C1406.27,480.80 1409.66,481.80 1413.05,481.80 C1416.43,481.80 1419.82,481.80 1423.21,481.80 C1426.60,481.80 1429.98,481.80 1433.37,481.80 C1436.76,481.80 1440.15,481.80 1443.53,481.80 C1446.92,481.80 1450.31,481.80 1453.70,481.80 C1457.08,481.80 1460.47,481.80 1463.86,481.80 C1467.25,481.80 1470.63,480.30 1474.02,480.30 C1477.41,480.30 1480.80,480.30 1484.18,480.30 C1487.57,480.30 1490.96,481.80 1494.35,481.80 C1497.74,481.80 1501.12,480.60 1504.51,480.60 C1507.90,480.60 1511.29,481.80 1514.67,481.80 C1518.06,481.80 1521.45,479.60 1524.84,479.60 C1528.22,479.60 1531.61,479.60 1535.00,479.60 C1538.39,479.60 1541.77,466.90 1545.16,466.90 C1548.55,466.90 1551.94,481.80 1555.32,481.80 C1558.71,481.80 1562.10,481.80 1565.49,481.80 C1568.87,481.80 1572.26,480.60 1575.65,480.60 C1579.04,480.60 1582.42,481.80 1585.81,481.80 C1589.20,481.80 1592.59,481.80 1595.97,481.80 C1599.36,481.80 1602.75,479.90 1606.14,479.90 C1609.52,479.90 1612.91,479.90 1616.30,479.90 L1616.30,482.40 C1612.91,482.40 1609.52,482.40 1606.14,482.40 C1602.75,482.40 1599.36,482.40 1595.97,482.40 C1592.59,482.40 1589.20,483.20 1585.81,483.20 C1582.42,483.20 1579.04,483.20 1575.65,483.20 C1572.26,483.20 1568.87,483.20 1565.49,483.20 C1562.10,483.20 1558.71,483.20 1555.32,483.20 C1551.94,483.20 1548.55,479.40 1545.16,479.40 C1541.77,479.40 1538.39,482.60 1535.00,482.60 C1531.61,482.60 1528.22,482.60 1524.84,482.60 C1521.45,482.60 1518.06,483.20 1514.67,483.20 C1511.29,483.20 1507.90,483.20 1504.51,483.20 C1501.12,483.20 1497.74,483.20 1494.35,483.20 C1490.96,483.20 1487.57,483.20 1484.18,483.20 C1480.80,483.20 1477.41,482.60 1474.02,482.60 C1470.63,482.60 1467.25,483.20 1463.86,483.20 C1460.47,483.20 1457.08,483.20 1453.70,483.20 C1450.31,483.20 1446.92,483.20 1443.53,483.20 C1440.15,483.20 1436.76,483.20 1433.37,483.20 C1429.98,483.20 1426.60,483.20 1423.21,483.20 C1419.82,483.20 1416.43,483.20 1413.05,483.20 C1409.66,483.20 1406.27,483.20 1402.88,483.20 C1399.50,483.20 1396.11,483.20 1392.72,483.20 C1389.33,483.20 1385.95,483.20 1382.56,483.20 C1379.17,483.20 1375.78,481.50 1372.39,481.50 C1369.01,481.50 1365.62,483.20 1362.23,483.20 C1358.84,483.20 1355.46,483.20 1352.07,483.20 C1348.68,483.20 1345.29,483.20 1341.91,483.20 C1338.52,483.20 1335.13,483.20 1331.74,483.20 C1328.36,483.20 1324.97,483.20 1321.58,483.20 C1318.19,483.20 1314.81,483.20 1311.42,483.20 C1308.03,483.20 1304.64,483.20 1301.26,483.20 C1297.87,483.20 1294.48,483.20 1291.09,483.20 C1287.71,483.20 1284.32,483.20 1280.93,483.20 C1277.54,483.20 1274.16,483.20 1270.77,483.20 C1267.38,483.20 1263.99,483.20 1260.61,483.20 C1257.22,483.20 1253.83,483.20 1250.44,483.20 C1247.05,483.20 1243.67,483.20 1240.28,483.20 C1236.89,483.20 1233.50,482.30 1230.12,482.30 C1226.73,482.30 1223.34,482.30 1219.95,482.30 C1216.57,482.30 1213.18,483.20 1209.79,483.20 C1206.40,483.20 1203.02,483.20 1199.63,483.20 C1196.24,483.20 1192.85,483.20 1189.47,483.20 C1186.08,483.20 1182.69,483.20 1179.30,483.20 C1175.92,483.20 1172.53,483.20 1169.14,483.20 C1165.75,483.20 1162.37,483.20 1158.98,483.20 C1155.59,483.20 1152.20,483.20 1148.82,483.20 C1145.43,483.20 1142.04,483.20 1138.65,483.20 C1135.26,483.20 1131.88,483.20 1128.49,483.20 C1125.10,483.20 1121.71,483.20 1118.33,483.20 C1114.94,483.20 1111.55,482.60 1108.16,482.60 C1104.78,482.60 1101.39,483.20 1098.00,483.20 C1094.61,483.20 1091.23,483.20 1087.84,483.20 C1084.45,483.20 1081.06,483.20 1077.68,483.20 C1074.29,483.20 1070.90,483.20 1067.51,483.20 C1064.13,483.20 1060.74,483.20 1057.35,483.20 C1053.96,483.20 1050.58,483.20 1047.19,483.20 C1043.80,483.20 1040.41,483.20 1037.03,483.20 C1033.64,483.20 1030.25,483.20 1026.86,483.20 C1023.48,483.20 1020.09,483.20 1016.70,483.20 Z" fill="#8cd147" fill-opacity="0.4"/>
<path d="M1016.70,483.20 C1020.09,483.20 1023.48,483.20 1026.86,483.20 C1030.25,483.20 1033.64,483.20 1037.03,483.20 C1040.41,483.20 1043.80,483.20 1047.19,483.20 C1050.58,483.20 1053.96,483.20 1057.35,483.20 C1060.74,483.20 1064.13,483.20 1067.51,483.20 C1070.90,483.20 1074.29,483.20 1077.68,483.20 C1081.06,483.20 1084.45,483.20 1087.84,483.20 C1091.23,483.20 1094.61,483.20 1098.00,483.20 C1101.39,483.20 1104.78,482.60 1108.16,482.60 C1111.55,482.60 1114.94,483.20 1118.33,483.20 C1121.71,483.20 1125.10,483.20 1128.49,483.20 C1131.88,483.20 1135.26,483.20 1138.65,483.20 C1142.04,483.20 1145.43,483.20 1148.82,483.20 C1152.20,483.20 1155.59,483.20 1158.98,483.20 C1162.37,483.20 1165.75,483.20 1169.14,483.20 C1172.53,483.20 1175.92,483.20 1179.30,483.20 C1182.69,483.20 1186.08,483.20 1189.47,483.20 C1192.85,483.20 1196.24,483.20 1199.63,483.20 C1203.02,483.20 1206.40,483.20 1209.79,483.20 C1213.18,483.20 1216.57,482.30 1219.95,482.30 C1223.34,482.30 1226.73,482.30 1230.12,482.30 C1233.50,482.30 1236.89,483.20 1240.28,483.20 C1243.67,483.20 1247.05,483.20 1250.44,483.20 C1253.83,483.20 1257.22,483.20 1260.61,483.20 C1263.99,483.20 1267.38,483.20 1270.77,483.20 C1274.16,483.20 1277.54,483.20 1280.93,483.20 C1284.32,483.20 1287.71,483.20 1291.09,483.20 C1294.48,483.20 1297.87,483.20 1301.26,483.20 C1304.64,483.20 1308.03,483.20 1311.42,483.20 C1314.81,483.20 1318.19,483.20 1321.58,483.20 C1324.97,483.20 1328.36,483.20 1331.74,483.20 C1335.13,483.20 1338.52,483.20 1341.91,483.20 C1345.29,483.20 1348.68,483.20 1352.07,483.20 C1355.46,483.20 1358.84,483.20 1362.23,483.20 C1365.62,483.20 1369.01,481.50 1372.39,481.50 C1375.78,481.50 1379.17,483.20 1382.56,483.20 C1385.95,483.20 1389.33,483.20 1392.72,483.20 C1396.11,483.20 1399.50,483.20 1402.88,483.20 C1406.27,483.20 1409.66,483.20 1413.05,483.20 C1416.43,483.20 1419.82,483.20 1423.21,483.20 C1426.60,483.20 1429.98,483.20 1433.37,483.20 C1436.76,483.20 1440.15,483.20 1443.53,483.20 C1446.92,483.20 1450.31,483.20 1453.70,483.20 C1457.08,483.20 1460.47,483.20 1463.86,483.20 C1467.25,483.20 1470.63,482.60 1474.02,482.60 C1477.41,482.60 1480.80,483.20 1484.18,483.20 C1487.57,483.20 1490.96,483.20 1494.35,483.20 C1497.74,483.20 1501.12,483.20 1504.51,483.20 C1507.90,483.20 1511.29,483.20 1514.67,483.20 C1518.06,483.20 1521.45,482.60 1524.84,482.60 C1528.22,482.60 1531.61,482.60 1535.00,482.60 C1538.39,482.60 1541.77,479.40 1545.16,479.40 C1548.55,479.40 1551.94,483.20 1555.32,483.20 C1558.71,483.20 1562.10,483.20 1565.49,483.20 C1568.87,483.20 1572.26,483.20 1575.65,483.20 C1579.04,483.20 1582.42,483.20 1585.81,483.20 C1589.20,483.20 1592.59,482.40 1595.97,482.40 C1599.36,482.40 1602.75,482.40 1606.14,482.40 C1609.52,482.40 1612.91,482.40 1616.30,482.40 L1616.30,483.40 C1612.91,483.40 1609.52,483.40 1606.14,483.40 C1602.75,483.40 1599.36,483.40 1595.97,483.40 C1592.59,483.40 1589.20,484.10 1585.81,484.10 C1582.42,484.10 1579.04,484.10 1575.65,484.10 C1572.26,484.10 1568.87,484.10 1565.49,484.10 C1562.10,484.10 1558.71,484.10 1555.32,484.10 C1551.94,484.10 1548.55,484.10 1545.16,484.10 C1541.77,484.10 1538.39,484.10 1535.00,484.10 C1531.61,484.10 1528.22,484.10 1524.84,484.10 C1521.45,484.10 1518.06,484.10 1514.67,484.10 C1511.29,484.10 1507.90,484.10 1504.51,484.10 C1501.12,484.10 1497.74,484.10 1494.35,484.10 C1490.96,484.10 1487.57,484.10 1484.18,484.10 C1480.80,484.10 1477.41,484.10 1474.02,484.10 C1470.63,484.10 1467.25,484.10 1463.86,484.10 C1460.47,484.10 1457.08,484.10 1453.70,484.10 C1450.31,484.10 1446.92,484.10 1443.53,484.10 C1440.15,484.10 1436.76,484.10 1433.37,484.10 C1429.98,484.10 1426.60,484.10 1423.21,484.10 C1419.82,484.10 1416.43,484.10 1413.05,484.10 C1409.66,484.10 1406.27,484.10 1402.88,484.10 C1399.50,484.10 1396.11,484.10 1392.72,484.10 C1389.33,484.10 1385.95,484.10 1382.56,484.10 C1379.17,484.10 1375.78,484.10 1372.39,484.10 C1369.01,484.10 1365.62,484.10 1362.23,484.10 C1358.84,484.10 1355.46,484.10 1352.07,484.10 C1348.68,484.10 1345.29,484.10 1341.91,484.10 C1338.52,484.10 1335.13,484.10 1331.74,484.10 C1328.36,484.10 1324.97,484.10 1321.58,484.10 C1318.19,484.10 1314.81,484.10 1311.42,484.10 C1308.03,484.10 1304.64,484.10 1301.26,484.10 C1297.87,484.10 1294.48,484.10 1291.09,484.10 C1287.71,484.10 1284.32,484.10 1280.93,484.10 C1277.54,484.10 1274.16,484.10 1270.77,484.10 C1267.38,484.10 1263.99,484.10 1260.61,484.10 C1257.22,484.10 1253.83,484.10 1250.44,484.10 C1247.05,484.10 1243.67,484.10 1240.28,484.10 C1236.89,484.10 1233.50,484.10 1230.12,484.10 C1226.73,484.10 1223.34,484.10 1219.95,484.10 C1216.57,484.10 1213.18,484.10 1209.79,484.10 C1206.40,484.10 1203.02,484.10 1199.63,484.10 C1196.24,484.10 1192.85,484.10 1189.47,484.10 C1186.08,484.10 1182.69,484.10 1179.30,484.10 C1175.92,484.10 1172.53,484.10 1169.14,484.10 C1165.75,484.10 1162.37,484.10 1158.98,484.10 C1155.59,484.10 1152.20,484.10 1148.82,484.10 C1145.43,484.10 1142.04,484.10 1138.65,484.10 C1135.26,484.10 1131.88,484.10 1128.49,484.10 C1125.10,484.10 1121.71,484.10 1118.33,484.10 C1114.94,484.10 1111.55,484.10 1108.16,484.10 C1104.78,484.10 1101.39,484.10 1098.00,484.10 C1094.61,484.10 1091.23,484.10 1087.84,484.10 C1084.45,484.10 1081.06,484.10 1077.68,484.10 C1074.29,484.10 1070.90,484.10 1067.51,484.10 C1064.13,484.10 1060.74,484.10 1057.35,484.10 C1053.96,484.10 1050.58,484.10 1047.19,484.10 C1043.80,484.10 1040.41,484.10 1037.03,484.10 C1033.64,484.10 1030.25,484.10 1026.86,484.10 C1023.48,484.10 1020.09,484.10 1016.70,484.10 Z" fill="#47d16a" fill-opacity="0.4"/>
<path d="M1016.70,484.10 C1020.09,484.10 1023.48,484.10 1026.86,484.10 C1030.25,484.10 1033.64,484.10 1037.03,484.10 C1040.41,484.10 1043.80,484.10 1047.19,484.10 C1050.58,484.10 1053.96,484.10 1057.35,484.10 C1060.74,484.10 1064.13,484.10 1067.51,484.10 C1070.90,484.10 1074.29,484.10 1077.68,484.10 C1081.06,484.10 1084.45,484.10 1087.84,484.10 C1091.23,484.10 1094.61,484.10 1098.00,484.10 C1101.39,484.10 1104.78,484.10 1108.16,484.10 C1111.55,484.10 1114.94,484.10 1118.33,484.10 C1121.71,484.10 1125.10,484.10 1128.49,484.10 C1131.88,484.10 1135.26,484.10 1138.65,484.10 C1142.04,484.10 1145.43,484.10 1148.82,484.10 C1152.20,484.10 1155.59,484.10 1158.98,484.10 C1162.37,484.10 1165.75,484.10 1169.14,484.10 C1172.53,484.10 1175.92,484.10 1179.30,484.10 C1182.69,484.10 1186.08,484.10 1189.47,484.10 C1192.85,484.10 1196.24,484.10 1199.63,484.10 C1203.02,484.10 1206.40,484.10 1209.79,484.10 C1213.18,484.10 1216.57,484.10 1219.95,484.10 C1223.34,484.10 1226.73,484.10 1230.12,484.10 C1233.50,484.10 1236.89,484.10 1240.28,484.10 C1243.67,484.10 1247.05,484.10 1250.44,484.10 C1253.83,484.10 1257.22,484.10 1260.61,484.10 C1263.99,484.10 1267.38,484.10 1270.77,484.10 C1274.16,484.10 1277.54,484.10 1280.93,484.10 C1284.32,484.10 1287.71,484.10 1291.09,484.10 C1294.48,484.10 1297.87,484.10 1301.26,484.10 C1304.64,484.10 1308.03,484.10 1311.42,484.10 C1314.81,484.10 1318.19,484.10 1321.58,484.10 C1324.97,484.10 1328.36,484.10 1331.74,484.10 C1335.13,484.10 1338.52,484.10 1341.91,484.10 C1345.29,484.10 1348.68,484.10 1352.07,484.10 C1355.46,484.10 1358.84,484.10 1362.23,484.10 C1365.62,484.10 1369.01,484.10 1372.39,484.10 C1375.78,484.10 1379.17,484.10 1382.56,484.10 C1385.95,484.10 1389.33,484.10 1392.72,484.10 C1396.11,484.10 1399.50,484.10 1402.88,484.10 C1406.27,484.10 1409.66,484.10 1413.05,484.10 C1416.43,484.10 1419.82,484.10 1423.21,484.10 C1426.60,484.10 1429.98,484.10 1433.37,484.10 C1436.76,484.10 1440.15,484.10 1443.53,484.10 C1446.92,484.10 1450.31,484.10 1453.70,484.10 C1457.08,484.10 1460.47,484.10 1463.86,484.10 C1467.25,484.10 1470.63,484.10 1474.02,484.10 C1477.41,484.10 1480.80,484.10 1484.18,484.10 C1487.57,484.10 1490.96,484.10 1494.35,484.10 C1497.74,484.10 1501.12,484.10 1504.51,484.10 C1507.90,484.10 1511.29,484.10 1514.67,484.10 C1518.06,484.10 1521.45,484.10 1524.84,484.10 C1528.22,484.10 1531.61,484.10 1535.00,484.10 C1538.39,484.10 1541.77,484.10 1545.16,484.10 C1548.55,484.10 1551.94,484.10 1555.32,484.10 C1558.71,484.10 1562.10,484.10 1565.49,484.10 C1568.87,484.10 1572.26,484.10 1575.65,484.10 C1579.04,484.10 1582.42,484.10 1585.81,484.10 C1589.20,484.10 1592.59,483.40 1595.97,483.40 C1599.36,483.40 1602.75,483.40 1606.14,483.40 C1609.52,483.40 1612.91,483.40 1616.30,483.40 L1616.30,484.40 C1612.91,484.40 1609.52,484.40 1606.14,484.40 C1602.75,484.40 1599.36,484.40 1595.97,484.40 C1592.59,484.40 1589.20,484.40 1585.81,484.40 C1582.42,484.40 1579.04,484.40 1575.65,484.40 C1572.26,484.40 1568.87,484.40 1565.49,484.40 C1562.10,484.40 1558.71,484.40 1555.32,484.40 C1551.94,484.40 1548.55,484.40 1545.16,484.40 C1541.77,484.40 1538.39,484.40 1535.00,484.40 C1531.61,484.40 1528.22,484.40 1524.84,484.40 C1521.45,484.40 1518.06,484.40 1514.67,484.40 C1511.29,484.40 1507.90,484.40 1504.51,484.40 C1501.12,484.40 1497.74,484.40 1494.35,484.40 C1490.96,484.40 1487.57,484.40 1484.18,484.40 C1480.80,484.40 1477.41,484.40 1474.02,484.40 C1470.63,484.40 1467.25,484.40 1463.86,484.40 C1460.47,484.40 1457.08,484.40 1453.70,484.40 C1450.31,484.40 1446.92,484.40 1443.53,484.40 C1440.15,484.40 1436.76,484.40 1433.37,484.40 C1429.98,484.40 1426.60,484.40 1423.21,484.40 C1419.82,484.40 1416.43,484.40 1413.05,484.40 C1409.66,484.40 1406.27,484.40 1402.88,484.40 C1399.50,484.40 1396.11,484.40 1392.72,484.40 C1389.33,484.40 1385.95,484.40 1382.56,484.40 C1379.17,484.40 1375.78,484.40 1372.39,484.40 C1369.01,484.40 1365.62,484.40 1362.23,484.40 C1358.84,484.40 1355.46,484.40 1352.07,484.40 C1348.68,484.40 1345.29,484.40 1341.91,484.40 C1338.52,484.40 1335.13,484.40 1331.74,484.40 C1328.36,484.40 1324.97,484.40 1321.58,484.40 C1318.19,484.40 1314.81,484.40 1311.42,484.40 C1308.03,484.40 1304.64,484.40 1301.26,484.40 C1297.87,484.40 1294.48,484.40 1291.09,484.40 C1287.71,484.40 1284.32,484.40 1280.93,484.40 C1277.54,484.40 1274.16,484.40 1270.77,484.40 C1267.38,484.40 1263.99,484.40 1260.61,484.40 C1257.22,484.40 1253.83,484.40 1250.44,484.40 C1247.05,484.40 1243.67,484.40 1240.28,484.40 C1236.89,484.40 1233.50,484.40 1230.12,484.40 C1226.73,484.40 1223.34,484.40 1219.95,484.40 C1216.57,484.40 1213.18,484.40 1209.79,484.40 C1206.40,484.40 1203.02,484.40 1199.63,484.40 C1196.24,484.40 1192.85,484.40 1189.47,484.40 C1186.08,484.40 1182.69,484.40 1179.30,484.40 C1175.92,484.40 1172.53,484.40 1169.14,484.40 C1165.75,484.40 1162.37,484.40 1158.98,484.40 C1155.59,484.40 1152.20,484.40 1148.82,484.40 C1145.43,484.40 1142.04,484.40 1138.65,484.40 C1135.26,484.40 1131.88,484.40 1128.49,484.40 C1125.10,484.40 1121.71,484.40 1118.33,484.40 C1114.94,484.40 1111.55,484.40 1108.16,484.40 C1104.78,484.40 1101.39,484.40 1098.00,484.40 C1094.61,484.40 1091.23,484.40 1087.84,484.40 C1084.45,484.40 1081.06,484.40 1077.68,484.40 C1074.29,484.40 1070.90,484.40 1067.51,484.40 C1064.13,484.40 1060.74,484.40 1057.35,484.40 C1053.96,484.40 1050.58,484.40 1047.19,484.40 C1043.80,484.40 1040.41,484.40 1037.03,484.40 C1033.64,484.40 1030.25,484.40 1026.86,484.40 C1023.48,484.40 1020.09,484.40 1016.70,484.40 Z" fill="#47d1d1" fill-opacity="0.4"/>
<path d="M1016.70,484.40 C1020.09,484.40 1023.48,484.40 1026.86,484.40 C1030.25,484.40 1033.64,484.40 1037.03,484.40 C1040.41,484.40 1043.80,484.40 1047.19,484.40 C1050.58,484.40 1053.96,484.40 1057.35,484.40 C1060.74,484.40 1064.13,484.40 1067.51,484.40 C1070.90,484.40 1074.29,484.40 1077.68,484.40 C1081.06,484.40 1084.45,484.40 1087.84,484.40 C1091.23,484.40 1094.61,484.40 1098.00,484.40 C1101.39,484.40 1104.78,484.40 1108.16,484.40 C1111.55,484.40 1114.94,484.40 1118.33,484.40 C1121.71,484.40 1125.10,484.40 1128.49,484.40 C1131.88,484.40 1135.26,484.40 1138.65,484.40 C1142.04,484.40 1145.43,484.40 1148.82,484.40 C1152.20,484.40 1155.59,484.40 1158.98,484.40 C1162.37,484.40 1165.75,484.40 1169.14,484.40 C1172.53,484.40 1175.92,484.40 1179.30,484.40 C1182.69,484.40 1186.08,484.40 1189.47,484.40 C1192.85,484.40 1196.24,484.40 1199.63,484.40 C1203.02,484.40 1206.40,484.40 1209.79,484.40 C1213.18,484.40 1216.57,484.40 1219.95,484.40 C1223.34,484.40 1226.73,484.40 1230.12,484.40 C1233.50,484.40 1236.89,484.40 1240.28,484.40 C1243.67,484.40 1247.05,484.40 1250.44,484.40 C1253.83,484.40 1257.22,484.40 1260.61,484.40 C1263.99,484.40 1267.38,484.40 1270.77,484.40 C1274.16,484.40 1277.54,484.40 1280.93,484.40 C1284.32,484.40 1287.71,484.40 1291.09,484.40 C1294.48,484.40 1297.87,484.40 1301.26,484.40 C1304.64,484.40 1308.03,484.40 1311.42,484.40 C1314.81,484.40 1318.19,484.40 1321.58,484.40 C1324.97,484.40 1328.36,484.40 1331.74,484.40 C1335.13,484.40 1338.52,484.40 1341.91,484.40 C1345.29,484.40 1348.68,484.40 1352.07,484.40 C1355.46,484.40 1358.84,484.40 1362.23,484.40 C1365.62,484.40 1369.01,484.40 1372.39,484.40 C1375.78,484.40 1379.17,484.40 1382.56,484.40 C1385.95,484.40 1389.33,484.40 1392.72,484.40 C1396.11,484.40 1399.50,484.40 1402.88,484.40 C1406.27,484.40 1409.66,484.40 1413.05,484.40 C1416.43,484.40 1419.82,484.40 1423.21,484.40 C1426.60,484.40 1429.98,484.40 1433.37,484.40 C1436.76,484.40 1440.15,484.40 1443.53,484.40 C1446.92,484.40 1450.31,484.40 1453.70,484.40 C1457.08,484.40 1460.47,484.40 1463.86,484.40 C1467.25,484.40 1470.63,484.40 1474.02,484.40 C1477.41,484.40 1480.80,484.40 1484.18,484.40 C1487.57,484.40 1490.96,484.40 1494.35,484.40 C1497.74,484.40 1501.12,484.40 1504.51,484.40 C1507.90,484.40 1511.29,484.40 1514.67,484.40 C1518.06,484.40 1521.45,484.40 1524.84,484.40 C1528.22,484.40 1531.61,484.40 1535.00,484.40 C1538.39,484.40 1541.77,484.40 1545.16,484.40 C1548.55,484.40 1551.94,484.40 1555.32,484.40 C1558.71,484.40 1562.10,484.40 1565.49,484.40 C1568.87,484.40 1572.26,484.40 1575.65,484.40 C1579.04,484.40 1582.42,484.40 1585.81,484.40 C1589.20,484.40 1592.59,484.40 1595.97,484.40 C1599.36,484.40 1602.75,484.40 1606.14,484.40 C1609.52,484.40 1612.91,484.40 1616.30,484.40 L1616.30,484.60 C1612.91,484.60 1609.52,484.60 1606.14,484.60 C1602.75,484.60 1599.36,484.60 1595.97,484.60 C1592.59,484.60 1589.20,484.60 1585.81,484.60 C1582.42,484.60 1579.04,484.60 1575.65,484.60 C1572.26,484.60 1568.87,484.60 1565.49,484.60 C1562.10,484.60 1558.71,484.60 1555.32,484.60 C1551.94,484.60 1548.55,484.60 1545.16,484.60 C1541.77,484.60 1538.39,484.60 1535.00,484.60 C1531.61,484.60 1528.22,484.60 1524.84,484.60 C1521.45,484.60 1518.06,484.60 1514.67,484.60 C1511.29,484.60 1507.90,484.60 1504.51,484.60 C1501.12,484.60 1497.74,484.60 1494.35,484.60 C1490.96,484.60 1487.57,484.60 1484.18,484.60 C1480.80,484.60 1477.41,484.60 1474.02,484.60 C1470.63,484.60 1467.25,484.60 1463.86,484.60 C1460.47,484.60 1457.08,484.60 1453.70,484.60 C1450.31,484.60 1446.92,484.60 1443.53,484.60 C1440.15,484.60 1436.76,484.60 1433.37,484.60 C1429.98,484.60 1426.60,484.60 1423.21,484.60 C1419.82,484.60 1416.43,484.60 1413.05,484.60 C1409.66,484.60 1406.27,484.60 1402.88,484.60 C1399.50,484.60 1396.11,484.60 1392.72,484.60 C1389.33,484.60 1385.95,484.60 1382.56,484.60 C1379.17,484.60 1375.78,484.60 1372.39,484.60 C1369.01,484.60 1365.62,484.60 1362.23,484.60 C1358.84,484.60 1355.46,484.60 1352.07,484.60 C1348.68,484.60 1345.29,484.60 1341.91,484.60 C1338.52,484.60 1335.13,484.60 1331.74,484.60 C1328.36,484.60 1324.97,484.60 1321.58,484.60 C1318.19,484.60 1314.81,484.60 1311.42,484.60 C1308.03,484.60 1304.64,484.60 1301.26,484.60 C1297.87,484.60 1294.48,484.60 1291.09,484.60 C1287.71,484.60 1284.32,484.60 1280.93,484.60 C1277.54,484.60 1274.16,484.60 1270.77,484.60 C1267.38,484.60 1263.99,484.60 1260.61,484.60 C1257.22,484.60 1253.83,484.60 1250.44,484.60 C1247.05,484.60 1243.67,484.60 1240.28,484.60 C1236.89,484.60 1233.50,484.60 1230.12,484.60 C1226.73,484.60 1223.34,484.60 1219.95,484.60 C1216.57,484.60 1213.18,484.60 1209.79,484.60 C1206.40,484.60 1203.02,484.60 1199.63,484.60 C1196.24,484.60 1192.85,484.60 1189.47,484.60 C1186.08,484.60 1182.69,484.60 1179.30,484.60 C1175.92,484.60 1172.53,484.60 1169.14,484.60 C1165.75,484.60 1162.37,484.60 1158.98,484.60 C1155.59,484.60 1152.20,484.60 1148.82,484.60 C1145.43,484.60 1142.04,484.60 1138.65,484.60 C1135.26,484.60 1131.88,484.60 1128.49,484.60 C1125.10,484.60 1121.71,484.60 1118.33,484.60 C1114.94,484.60 1111.55,484.60 1108.16,484.60 C1104.78,484.60 1101.39,484.60 1098.00,484.60 C1094.61,484.60 1091.23,484.60 1087.84,484.60 C1084.45,484.60 1081.06,484.60 1077.68,484.60 C1074.29,484.60 1070.90,484.60 1067.51,484.60 C1064.13,484.60 1060.74,484.60 1057.35,484.60 C1053.96,484.60 1050.58,484.60 1047.19,484.60 C1043.80,484.60 1040.41,484.60 1037.03,484.60 C1033.64,484.60 1030.25,484.60 1026.86,484.60 C1023.48,484.60 1020.09,484.60 1016.70,484.60 Z" fill="#476ad1" fill-opacity="0.4"/>
<path d="M1016.70,484.60 C1020.09,484.60 1023.48,484.60 1026.86,484.60 C1030.25,484.60 1033.64,484.60 1037.03,484.60 C1040.41,484.60 1043.80,484.60 1047.19,484.60 C1050.58,484.60 1053.96,484.60 1057.35,484.60 C1060.74,484.60 1064.13,484.60 1067.51,484.60 C1070.90,484.60 1074.29,484.60 1077.68,484.60 C1081.06,484.60 1084.45,484.60 1087.84,484.60 C1091.23,484.60 1094.61,484.60 1098.00,484.60 C1101.39,484.60 1104.78,484.60 1108.16,484.60 C1111.55,484.60 1114.94,484.60 1118.33,484.60 C1121.71,484.60 1125.10,484.60 1128.49,484.60 C1131.88,484.60 1135.26,484.60 1138.65,484.60 C1142.04,484.60 1145.43,484.60 1148.82,484.60 C1152.20,484.60 1155.59,484.60 1158.98,484.60 C1162.37,484.60 1165.75,484.60 1169.14,484.60 C1172.53,484.60 1175.92,484.60 1179.30,484.60 C1182.69,484.60 1186.08,484.60 1189.47,484.60 C1192.85,484.60 1196.24,484.60 1199.63,484.60 C1203.02,484.60 1206.40,484.60 1209.79,484.60 C1213.18,484.60 1216.57,484.60 1219.95,484.60 C1223.34,484.60 1226.73,484.60 1230.12,484.60 C1233.50,484.60 1236.89,484.60 1240.28,484.60 C1243.67,484.60 1247.05,484.60 1250.44,484.60 C1253.83,484.60 1257.22,484.60 1260.61,484.60 C1263.99,484.60 1267.38,484.60 1270.77,484.60 C1274.16,484.60 1277.54,484.60 1280.93,484.60 C1284.32,484.60 1287.71,484.60 1291.09,484.60 C1294.48,484.60 1297.87,484.60 1301.26,484.60 C1304.64,484.60 1308.03,484.60 1311.42,484.60 C1314.81,484.60 1318.19,484.60 1321.58,484.60 C1324.97,484.60 1328.36,484.60 1331.74,484.60 C1335.13,484.60 1338.52,484.60 1341.91,484.60 C1345.29,484.60 1348.68,484.60 1352.07,484.60 C1355.46,484.60 1358.84,484.60 1362.23,484.60 C1365.62,484.60 1369.01,484.60 1372.39,484.60 C1375.78,484.60 1379.17,484.60 1382.56,484.60 C1385.95,484.60 1389.33,484.60 1392.72,484.60 C1396.11,484.60 1399.50,484.60 1402.88,484.60 C1406.27,484.60 1409.66,484.60 1413.05,484.60 C1416.43,484.60 1419.82,484.60 1423.21,484.60 C1426.60,484.60 1429.98,484.60 1433.37,484.60 C1436.76,484.60 1440.15,484.60 1443.53,484.60 C1446.92,484.60 1450.31,484.60 1453.70,484.60 C1457.08,484.60 1460.47,484.60 1463.86,484.60 C1467.25,484.60 1470.63,484.60 1474.02,484.60 C1477.41,484.60 1480.80,484.60 1484.18,484.60 C1487.57,484.60 1490.96,484.60 1494.35,484.60 C1497.74,484.60 1501.12,484.60 1504.51,484.60 C1507.90,484.60 1511.29,484.60 1514.67,484.60 C1518.06,484.60 1521.45,484.60 1524.84,484.60 C1528.22,484.60 1531.61,484.60 1535.00,484.60 C1538.39,484.60 1541.77,484.60 1545.16,484.60 C1548.55,484.60 1551.94,484.60 1555.32,484.60 C1558.71,484.60 1562.10,484.60 1565.49,484.60 C1568.87,484.60 1572.26,484.60 1575.65,484.60 C1579.04,484.60 1582.42,484.60 1585.81,484.60 C1589.20,484.60 1592.59,484.60 1595.97,484.60 C1599.36,484.60 1602.75,484.60 1606.14,484.60 C1609.52,484.60 1612.91,484.60 1616.30,484.60 L1616.30,485.00 C1612.91,485.00 1609.52,485.00 1606.14,485.00 C1602.75,485.00 1599.36,485.00 1595.97,485.00 C1592.59,485.00 1589.20,485.00 1585.81,485.00 C1582.42,485.00 1579.04,485.00 1575.65,485.00 C1572.26,485.00 1568.87,485.00 1565.49,485.00 C1562.10,485.00 1558.71,485.00 1555.32,485.00 C1551.94,485.00 1548.55,485.00 1545.16,485.00 C1541.77,485.00 1538.39,485.00 1535.00,485.00 C1531.61,485.00 1528.22,485.00 1524.84,485.00 C1521.45,485.00 1518.06,485.00 1514.67,485.00 C1511.29,485.00 1507.90,485.00 1504.51,485.00 C1501.12,485.00 1497.74,485.00 1494.35,485.00 C1490.96,485.00 1487.57,485.00 1484.18,485.00 C1480.80,485.00 1477.41,485.00 1474.02,485.00 C1470.63,485.00 1467.25,485.00 1463.86,485.00 C1460.47,485.00 1457.08,485.00 1453.70,485.00 C1450.31,485.00 1446.92,485.00 1443.53,485.00 C1440.15,485.00 1436.76,485.00 1433.37,485.00 C1429.98,485.00 1426.60,485.00 1423.21,485.00 C1419.82,485.00 1416.43,485.00 1413.05,485.00 C1409.66,485.00 1406.27,485.00 1402.88,485.00 C1399.50,485.00 1396.11,485.00 1392.72,485.00 C1389.33,485.00 1385.95,485.00 1382.56,485.00 C1379.17,485.00 1375.78,485.00 1372.39,485.00 C1369.01,485.00 1365.62,485.00 1362.23,485.00 C1358.84,485.00 1355.46,485.00 1352.07,485.00 C1348.68,485.00 1345.29,485.00 1341.91,485.00 C1338.52,485.00 1335.13,485.00 1331.74,485.00 C1328.36,485.00 1324.97,485.00 1321.58,485.00 C1318.19,485.00 1314.81,485.00 1311.42,485.00 C1308.03,485.00 1304.64,485.00 1301.26,485.00 C1297.87,485.00 1294.48,485.00 1291.09,485.00 C1287.71,485.00 1284.32,485.00 1280.93,485.00 C1277.54,485.00 1274.16,485.00 1270.77,485.00 C1267.38,485.00 1263.99,485.00 1260.61,485.00 C1257.22,485.00 1253.83,485.00 1250.44,485.00 C1247.05,485.00 1243.67,485.00 1240.28,485.00 C1236.89,485.00 1233.50,485.00 1230.12,485.00 C1226.73,485.00 1223.34,485.00 1219.95,485.00 C1216.57,485.00 1213.18,485.00 1209.79,485.00 C1206.40,485.00 1203.02,485.00 1199.63,485.00 C1196.24,485.00 1192.85,485.00 1189.47,485.00 C1186.08,485.00 1182.69,485.00 1179.30,485.00 C1175.92,485.00 1172.53,485.00 1169.14,485.00 C1165.75,485.00 1162.37,485.00 1158.98,485.00 C1155.59,485.00 1152.20,485.00 1148.82,485.00 C1145.43,485.00 1142.04,485.00 1138.65,485.00 C1135.26,485.00 1131.88,485.00 1128.49,485.00 C1125.10,485.00 1121.71,485.00 1118.33,485.00 C1114.94,485.00 1111.55,485.00 1108.16,485.00 C1104.78,485.00 1101.39,485.00 1098.00,485.00 C1094.61,485.00 1091.23,485.00 1087.84,485.00 C1084.45,485.00 1081.06,485.00 1077.68,485.00 C1074.29,485.00 1070.90,485.00 1067.51,485.00 C1064.13,485.00 1060.74,485.00 1057.35,485.00 C1053.96,485.00 1050.58,485.00 1047.19,485.00 C1043.80,485.00 1040.41,485.00 1037.03,485.00 C1033.64,485.00 1030.25,485.00 1026.86,485.00 C1023.48,485.00 1020.09,485.00 1016.70,485.00 Z" fill="#d147d1" fill-opacity="0.4"/>
<path d="M1016.70,364.50 C1020.09,365.85 1023.48,367.20 1026.86,367.20 C1030.25,367.20 1033.64,367.13 1037.03,367.00 C1040.41,366.87 1043.80,360.30 1047.19,360.30 C1050.58,360.30 1053.96,364.50 1057.35,364.50 C1060.74,364.50 1064.13,359.40 1067.51,359.40 C1070.90,359.40 1074.29,360.63 1077.68,361.90 C1081.06,363.17 1084.45,367.00 1087.84,367.00 C1091.23,367.00 1094.61,342.60 1098.00,342.60 C1101.39,342.60 1104.78,356.67 1108.16,358.60 C1111.55,360.53 1114.94,360.52 1118.33,361.50 C1121.71,362.48 1125.10,364.50 1128.49,364.50 C1131.88,364.50 1135.26,363.20 1138.65,363.20 C1142.04,363.20 1145.43,368.70 1148.82,368.70 C1152.20,368.70 1155.59,361.50 1158.98,361.50 C1162.37,361.50 1165.75,361.63 1169.14,361.90 C1172.53,362.17 1175.92,363.50 1179.30,363.50 C1182.69,363.50 1186.08,361.80 1189.47,361.80 C1192.85,361.80 1196.24,361.80 1199.63,361.80 C1203.02,361.80 1206.40,366.10 1209.79,366.10 C1213.18,366.10 1216.57,360.98 1219.95,357.70 C1223.34,354.42 1226.73,346.40 1230.12,346.40 C1233.50,346.40 1236.89,356.18 1240.28,359.40 C1243.67,362.62 1247.05,365.70 1250.44,365.70 C1253.83,365.70 1257.22,361.80 1260.61,361.80 C1263.99,361.80 1267.38,368.50 1270.77,368.50 C1274.16,368.50 1277.54,364.50 1280.93,364.50 C1284.32,364.50 1287.71,366.10 1291.09,366.10 C1294.48,366.10 1297.87,363.20 1301.26,363.20 C1304.64,363.20 1308.03,364.78 1311.42,365.70 C1314.81,366.62 1318.19,368.70 1321.58,368.70 C1324.97,368.70 1328.36,354.80 1331.74,354.80 C1335.13,354.80 1338.52,364.50 1341.91,364.50 C1345.29,364.50 1348.68,364.50 1352.07,364.50 C1355.46,364.50 1358.84,366.10 1362.23,366.10 C1365.62,366.10 1369.01,348.00 1372.39,348.00 C1375.78,348.00 1379.17,357.87 1382.56,361.10 C1385.95,364.33 1389.33,367.40 1392.72,367.40 C1396.11,367.40 1399.50,360.30 1402.88,360.30 C1406.27,360.30 1409.66,364.50 1413.05,364.50 C1416.43,364.50 1419.82,361.50 1423.21,361.50 C1426.60,361.50 1429.98,362.80 1433.37,364.00 C1436.76,365.20 1440.15,368.70 1443.53,368.70 C1446.92,368.70 1450.31,366.43 1453.70,365.70 C1457.08,364.97 1460.47,365.23 1463.86,364.30 C1467.25,363.37 1470.63,358.70 1474.02,358.70 C1477.41,358.70 1480.80,364.07 1484.18,365.40 C1487.57,366.73 1490.96,367.40 1494.35,367.40 C1497.74,367.40 1501.12,356.50 1504.51,356.50 C1507.90,356.50 1511.29,360.50 1514.67,360.50 C1518.06,360.50 1521.45,356.50 1524.84,356.50 C1528.22,356.50 1531.61,361.80 1535.00,361.80 C1538.39,361.80 1541.77,348.00 1545.16,348.00 C1548.55,348.00 1551.94,365.90 1555.32,365.90 C1558.71,365.90 1562.10,364.10 1565.49,363.20 C1568.87,362.30 1572.26,360.50 1575.65,360.50 C1579.04,360.50 1582.42,361.80 1585.81,361.80 C1589.20,361.80 1592.59,360.50 1595.97,360.50 C1599.36,360.50 1602.75,360.80 1606.14,361.40 C1609.52,362.00 1612.91,364.40 1616.30,366.80" fill="none" stroke="#d14747" stroke-width="1"/>
<path d="M1016.70,477.30 C1020.09,477.50 1023.48,477.70 1026.86,477.70 C1030.25,477.70 1033.64,477.70 1037.03,477.70 C1040.41,477.70 1043.80,477.70 1047.19,477.70 C1050.58,477.70 1053.96,477.70 1057.35,477.70 C1060.74,477.70 1064.13,476.50 1067.51,476.50 C1070.90,476.50 1074.29,476.50 1077.68,476.50 C1081.06,476.50 1084.45,477.70 1087.84,477.70 C1091.23,477.70 1094.61,477.70 1098.00,477.70 C1101.39,477.70 1104.78,476.00 1108.16,476.00 C1111.55,476.00 1114.94,477.70 1118.33,477.70 C1121.71,477.70 1125.10,477.70 1128.49,477.70 C1131.88,477.70 1135.26,477.70 1138.65,477.70 C1142.04,477.70 1145.43,477.70 1148.82,477.70 C1152.20,477.70 1155.59,477.70 1158.98,477.70 C1162.37,477.70 1165.75,476.50 1169.14,476.50 C1172.53,476.50 1175.92,477.70 1179.30,477.70 C1182.69,477.70 1186.08,477.70 1189.47,477.70 C1192.85,477.70 1196.24,476.30 1199.63,476.30 C1203.02,476.30 1206.40,477.70 1209.79,477.70 C1213.18,477.70 1216.57,475.50 1219.95,475.50 C1223.34,475.50 1226.73,475.50 1230.12,475.50 C1233.50,475.50 1236.89,477.70 1240.28,477.70 C1243.67,477.70 1247.05,477.70 1250.44,477.70 C1253.83,477.70 1257.22,477.70 1260.61,477.70 C1263.99,477.70 1267.38,476.30 1270.77,476.30 C1274.16,476.30 1277.54,476.30 1280.93,476.30 C1284.32,476.30 1287.71,477.70 1291.09,477.70 C1294.48,477.70 1297.87,476.30 1301.26,476.30 C1304.64,476.30 1308.03,476.30 1311.42,476.30 C1314.81,476.30 1318.19,477.70 1321.58,477.70 C1324.97,477.70 1328.36,471.00 1331.74,471.00 C1335.13,471.00 1338.52,477.70 1341.91,477.70 C1345.29,477.70 1348.68,477.70 1352.07,477.70 C1355.46,477.70 1358.84,477.70 1362.23,477.70 C1365.62,477.70 1369.01,474.00 1372.39,474.00 C1375.78,474.00 1379.17,477.70 1382.56,477.70 C1385.95,477.70 1389.33,477.70 1392.72,477.70 C1396.11,477.70 1399.50,476.00 1402.88,476.00 C1406.27,476.00 1409.66,477.70 1413.05,477.70 C1416.43,477.70 1419.82,477.70 1423.21,477.70 C1426.60,477.70 1429.98,477.70 1433.37,477.70 C1436.76,477.70 1440.15,477.70 1443.53,477.70 C1446.92,477.70 1450.31,477.70 1453.70,477.70 C1457.08,477.70 1460.47,477.70 1463.86,477.70 C1467.25,477.70 1470.63,476.30 1474.02,476.30 C1477.41,476.30 1480.80,476.30 1484.18,476.30 C1487.57,476.30 1490.96,477.70 1494.35,477.70 C1497.74,477.70 1501.12,476.30 1504.51,476.30 C1507.90,476.30 1511.29,477.70 1514.67,477.70 C1518.06,477.70 1521.45,475.50 1524.84,475.50 C1528.22,475.50 1531.61,475.50 1535.00,475.50 C1538.39,475.50 1541.77,462.90 1545.16,462.90 C1548.55,462.90 1551.94,477.70 1555.32,477.70 C1558.71,477.70 1562.10,477.70 1565.49,477.70 C1568.87,477.70 1572.26,476.30 1575.65,476.30 C1579.04,476.30 1582.42,477.70 1585.81,477.70 C1589.20,477.70 1592.59,477.70 1595.97,477.70 C1599.36,477.70 1602.75,475.80 1606.14,475.80 C1609.52,475.80 1612.91,475.80 1616.30,475.80" fill="none" stroke="#d1ac47" stroke-width="1"/>
<path d="M1016.70,481.80 C1020.09,481.80 1023.48,481.80 1026.86,481.80 C1030.25,481.80 1033.64,481.80 1037.03,481.80 C1040.41,481.80 1043.80,481.80 1047.19,481.80 C1050.58,481.80 1053.96,481.80 1057.35,481.80 C1060.74,481.80 1064.13,480.30 1067.51,480.30 C1070.90,480.30 1074.29,480.30 1077.68,480.30 C1081.06,480.30 1084.45,481.80 1087.84,481.80 C1091.23,481.80 1094.61,481.80 1098.00,481.80 C1101.39,481.80 1104.78,480.50 1108.16,480.50 C1111.55,480.50 1114.94,481.80 1118.33,481.80 C1121.71,481.80 1125.10,481.80 1128.49,481.80 C1131.88,481.80 1135.26,481.80 1138.65,481.80 C1142.04,481.80 1145.43,481.80 1148.82,481.80 C1152.20,481.80 1155.59,481.80 1158.98,481.80 C1162.37,481.80 1165.75,480.50 1169.14,480.50 C1172.53,480.50 1175.92,481.80 1179.30,481.80 C1182.69,481.80 1186.08,481.80 1189.47,481.80 C1192.85,481.80 1196.24,481.80 1199.63,481.80 C1203.02,481.80 1206.40,481.80 1209.79,481.80 C1213.18,481.80 1216.57,479.80 1219.95,479.80 C1223.34,479.80 1226.73,479.80 1230.12,479.80 C1233.50,479.80 1236.89,481.80 1240.28,481.80 C1243.67,481.80 1247.05,481.80 1250.44,481.80 C1253.83,481.80 1257.22,481.80 1260.61,481.80 C1263.99,481.80 1267.38,480.60 1270.77,480.60 C1274.16,480.60 1277.54,480.60 1280.93,480.60 C1284.32,480.60 1287.71,481.80 1291.09,481.80 C1294.48,481.80 1297.87,480.60 1301.26,480.60 C1304.64,480.60 1308.03,480.60 1311.42,480.60 C1314.81,480.60 1318.19,481.80 1321.58,481.80 C1324.97,481.80 1328.36,475.20 1331.74,475.20 C1335.13,475.20 1338.52,481.80 1341.91,481.80 C1345.29,481.80 1348.68,481.80 1352.07,481.80 C1355.46,481.80 1358.84,481.80 1362.23,481.80 C1365.62,481.80 1369.01,478.00 1372.39,478.00 C1375.78,478.00 1379.17,481.80 1382.56,481.80 C1385.95,481.80 1389.33,481.80 1392.72,481.80 C1396.11,481.80 1399.50,480.80 1402.88,480.80 C1406.27,480.80 1409.66,481.80 1413.05,481.80 C1416.43,481.80 1419.82,481.80 1423.21,481.80 C1426.60,481.80 1429.98,481.80 1433.37,481.80 C1436.76,481.80 1440.15,481.80 1443.53,481.80 C1446.92,481.80 1450.31,481.80 1453.70,481.80 C1457.08,481.80 1460.47,481.80 1463.86,481.80 C1467.25,481.80 1470.63,480.30 1474.02,480.30 C1477.41,480.30 1480.80,480.30 1484.18,480.30 C1487.57,480.30 1490.96,481.80 1494.35,481.80 C1497.74,481.80 1501.12,480.60 1504.51,480.60 C1507.90,480.60 1511.29,481.80 1514.67,481.80 C1518.06,481.80 1521.45,479.60 1524.84,479.60 C1528.22,479.60 1531.61,479.60 1535.00,479.60 C1538.39,479.60 1541.77,466.90 1545.16,466.90 C1548.55,466.90 1551.94,481.80 1555.32,481.80 C1558.71,481.80 1562.10,481.80 1565.49,481.80 C1568.87,481.80 1572.26,480.60 1575.65,480.60 C1579.04,480.60 1582.42,481.80 1585.81,481.80 C1589.20,481.80 1592.59,481.80 1595.97,481.80 C1599.36,481.80 1602.75,479.90 1606.14,479.90 C1609.52,479.90 1612.91,479.90 1616.30,479.90" fill="none" stroke="#8cd147" stroke-width="1"/>
<path d="M1016.70,483.20 C1020.09,483.20 1023.48,483.20 1026.86,483.20 C1030.25,483.20 1033.64,483.20 1037.03,483.20 C1040.41,483.20 1043.80,483.20 1047.19,483.20 C1050.58,483.20 1053.96,483.20 1057.35,483.20 C1060.74,483.20 1064.13,483.20 1067.51,483.20 C1070.90,483.20 1074.29,483.20 1077.68,483.20 C1081.06,483.20 1084.45,483.20 1087.84,483.20 C1091.23,483.20 1094.61,483.20 1098.00,483.20 C1101.39,483.20 1104.78,482.60 1108.16,482.60 C1111.55,482.60 1114.94,483.20 1118.33,483.20 C1121.71,483.20 1125.10,483.20 1128.49,483.20 C1131.88,483.20 1135.26,483.20 1138.65,483.20 C1142.04,483.20 1145.43,483.20 1148.82,483.20 C1152.20,483.20 1155.59,483.20 1158.98,483.20 C1162.37,483.20 1165.75,483.20 1169.14,483.20 C1172.53,483.20 1175.92,483.20 1179.30,483.20 C1182.69,483.20 1186.08,483.20 1189.47,483.20 C1192.85,483.20 1196.24,483.20 1199.63,483.20 C1203.02,483.20 1206.40,483.20 1209.79,483.20 C1213.18,483.20 1216.57,482.30 1219.95,482.30 C1223.34,482.30 1226.73,482.30 1230.12,482.30 C1233.50,482.30 1236.89,483.20 1240.28,483.20 C1243.67,483.20 1247.05,483.20 1250.44,483.20 C1253.83,483.20 1257.22,483.20 1260.61,483.20 C1263.99,483.20 1267.38,483.20 1270.77,483.20 C1274.16,483.20 1277.54,483.20 1280.93,483.20 C1284.32,483.20 1287.71,483.20 1291.09,483.20 C1294.48,483.20 1297.87,483.20 1301.26,483.20 C1304.64,483.20 1308.03,483.20 1311.42,483.20 C1314.81,483.20 1318.19,483.20 1321.58,483.20 C1324.97,483.20 1328.36,483.20 1331.74,483.20 C1335.13,483.20 1338.52,483.20 1341.91,483.20 C1345.29,483.20 1348.68,483.20 1352.07,483.20 C1355.46,483.20 1358.84,483.20 1362.23,483.20 C1365.62,483.20 1369.01,481.50 1372.39,481.50 C1375.78,481.50 1379.17,483.20 1382.56,483.20 C1385.95,483.20 1389.33,483.20 1392.72,483.20 C1396.11,483.20 1399.50,483.20 1402.88,483.20 C1406.27,483.20 1409.66,483.20 1413.05,483.20 C1416.43,483.20 1419.82,483.20 1423.21,483.20 C1426.60,483.20 1429.98,483.20 1433.37,483.20 C1436.76,483.20 1440.15,483.20 1443.53,483.20 C1446.92,483.20 1450.31,483.20 1453.70,483.20 C1457.08,483.20 1460.47,483.20 1463.86,483.20 C1467.25,483.20 1470.63,482.60 1474.02,482.60 C1477.41,482.60 1480.80,483.20 1484.18,483.20 C1487.57,483.20 1490.96,483.20 1494.35,483.20 C1497.74,483.20 1501.12,483.20 1504.51,483.20 C1507.90,483.20 1511.29,483.20 1514.67,483.20 C1518.06,483.20 1521.45,482.60 1524.84,482.60 C1528.22,482.60 1531.61,482.60 1535.00,482.60 C1538.39,482.60 1541.77,479.40 1545.16,479.40 C1548.55,479.40 1551.94,483.20 1555.32,483.20 C1558.71,483.20 1562.10,483.20 1565.49,483.20 C1568.87,483.20 1572.26,483.20 1575.65,483.20 C1579.04,483.20 1582.42,483.20 1585.81,483.20 C1589.20,483.20 1592.59,482.40 1595.97,482.40 C1599.36,482.40 1602.75,482.40 1606.14,482.40 C1609.52,482.40 1612.91,482.40 1616.30,482.40" fill="none" stroke="#47d16a" stroke-width="1"/>
<path d="M1016.70,484.10 C1020.09,484.10 1023.48,484.10 1026.86,484.10 C1030.25,484.10 1033.64,484.10 1037.03,484.10 C1040.41,484.10 1043.80,484.10 1047.19,484.10 C1050.58,484.10 1053.96,484.10 1057.35,484.10 C1060.74,484.10 1064.13,484.10 1067.51,484.10 C1070.90,484.10 1074.29,484.10 1077.68,484.10 C1081.06,484.10 1084.45,484.10 1087.84,484.10 C1091.23,484.10 1094.61,484.10 1098.00,484.10 C1101.39,484.10 1104.78,484.10 1108.16,484.10 C1111.55,484.10 1114.94,484.10 1118.33,484.10 C1121.71,484.10 1125.10,484.10 1128.49,484.10 C1131.88,484.10 1135.26,484.10 1138.65,484.10 C1142.04,484.10 1145.43,484.10 1148.82,484.10 C1152.20,484.10 1155.59,484.10 1158.98,484.10 C1162.37,484.10 1165.75,484.10 1169.14,484.10 C1172.53,484.10 1175.92,484.10 1179.30,484.10 C1182.69,484.10 1186.08,484.10 1189.47,484.10 C1192.85,484.10 1196.24,484.10 1199.63,484.10 C1203.02,484.10 1206.40,484.10 1209.79,484.10 C1213.18,484.10 1216.57,484.10 1219.95,484.10 C1223.34,484.10 1226.73,484.10 1230.12,484.10 C1233.50,484.10 1236.89,484.10 1240.28,484.10 C1243.67,484.10 1247.05,484.10 1250.44,484.10 C1253.83,484.10 1257.22,484.10 1260.61,484.10 C1263.99,484.10 1267.38,484.10 1270.77,484.10 C1274.16,484.10 1277.54,484.10 1280.93,484.10 C1284.32,484.10 1287.71,484.10 1291.09,484.10 C1294.48,484.10 1297.87,484.10 1301.26,484.10 C1304.64,484.10 1308.03,484.10 1311.42,484.10 C1314.81,484.10 1318.19,484.10 1321.58,484.10 C1324.97,484.10 1328.36,484.10 1331.74,484.10 C1335.13,484.10 1338.52,484.10 1341.91,484.10 C1345.29,484.10 1348.68,484.10 1352.07,484.10 C1355.46,484.10 1358.84,484.10 1362.23,484.10 C1365.62,484.10 1369.01,484.10 1372.39,484.10 C1375.78,484.10 1379.17,484.10 1382.56,484.10 C1385.95,484.10 1389.33,484.10 1392.72,484.10 C1396.11,484.10 1399.50,484.10 1402.88,484.10 C1406.27,484.10 1409.66,484.10 1413.05,484.10 C1416.43,484.10 1419.82,484.10 1423.21,484.10 C1426.60,484.10 1429.98,484.10 1433.37,484.10 C1436.76,484.10 1440.15,484.10 1443.53,484.10 C1446.92,484.10 1450.31,484.10 1453.70,484.10 C1457.08,484.10 1460.47,484.10 1463.86,484.10 C1467.25,484.10 1470.63,484.10 1474.02,484.10 C1477.41,484.10 1480.80,484.10 1484.18,484.10 C1487.57,484.10 1490.96,484.10 1494.35,484.10 C1497.74,484.10 1501.12,484.10 1504.51,484.10 C1507.90,484.10 1511.29,484.10 1514.67,484.10 C1518.06,484.10 1521.45,484.10 1524.84,484.10 C1528.22,484.10 1531.61,484.10 1535.00,484.10 C1538.39,484.10 1541.77,484.10 1545.16,484.10 C1548.55,484.10 1551.94,484.10 1555.32,484.10 C1558.71,484.10 1562.10,484.10 1565.49,484.10 C1568.87,484.10 1572.26,484.10 1575.65,484.10 C1579.04,484.10 1582.42,484.10 1585.81,484.10 C1589.20,484.10 1592.59,483.40 1595.97,483.40 C1599.36,483.40 1602.75,483.40 1606.14,483.40 C1609.52,483.40 1612.91,483.40 1616.30,483.40" fill="none" stroke="#47d1d1" stroke-width="1"/>
<path d="M1016.70,484.40 C1020.09,484.40 1023.48,484.40 1026.86,484.40 C1030.25,484.40 1033.64,484.40 1037.03,484.40 C1040.41,484.40 1043.80,484.40 1047.19,484.40 C1050.58,484.40 1053.96,484.40 1057.35,484.40 C1060.74,484.40 1064.13,484.40 1067.51,484.40 C1070.90,484.40 1074.29,484.40 1077.68,484.40 C1081.06,484.40 1084.45,484.40 1087.84,484.40 C1091.23,484.40 1094.61,484.40 1098.00,484.40 C1101.39,484.40 1104.78,484.40 1108.16,484.40 C1111.55,484.40 1114.94,484.40 1118.33,484.40 C1121.71,484.40 1125.10,484.40 1128.49,484.40 C1131.88,484.40 1135.26,484.40 1138.65,484.40 C1142.04,484.40 1145.43,484.40 1148.82,484.40 C1152.20,484.40 1155.59,484.40 1158.98,484.40 C1162.37,484.40 1165.75,484.40 1169.14,484.40 C1172.53,484.40 1175.92,484.40 1179.30,484.40 C1182.69,484.40 1186.08,484.40 1189.47,484.40 C1192.85,484.40 1196.24,484.40 1199.63,484.40 C1203.02,484.40 1206.40,484.40 1209.79,484.40 C1213.18,484.40 1216.57,484.40 1219.95,484.40 C1223.34,484.40 1226.73,484.40 1230.12,484.40 C1233.50,484.40 1236.89,484.40 1240.28,484.40 C1243.67,484.40 1247.05,484.40 1250.44,484.40 C1253.83,484.40 1257.22,484.40 1260.61,484.40 C1263.99,484.40 1267.38,484.40 1270.77,484.40 C1274.16,484.40 1277.54,484.40 1280.93,484.40 C1284.32,484.40 1287.71,484.40 1291.09,484.40 C1294.48,484.40 1297.87,484.40 1301.26,484.40 C1304.64,484.40 1308.03,484.40 1311.42,484.40 C1314.81,484.40 1318.19,484.40 1321.58,484.40 C1324.97,484.40 1328.36,484.40 1331.74,484.40 C1335.13,484.40 1338.52,484.40 1341.91,484.40 C1345.29,484.40 1348.68,484.40 1352.07,484.40 C1355.46,484.40 1358.84,484.40 1362.23,484.40 C1365.62,484.40 1369.01,484.40 1372.39,484.40 C1375.78,484.40 1379.17,484.40 1382.56,484.40 C1385.95,484.40 1389.33,484.40 1392.72,484.40 C1396.11,484.40 1399.50,484.40 1402.88,484.40 C1406.27,484.40 1409.66,484.40 1413.05,484.40 C1416.43,484.40 1419.82,484.40 1423.21,484.40 C1426.60,484.40 1429.98,484.40 1433.37,484.40 C1436.76,484.40 1440.15,484.40 1443.53,484.40 C1446.92,484.40 1450.31,484.40 1453.70,484.40 C1457.08,484.40 1460.47,484.40 1463.86,484.40 C1467.25,484.40 1470.63,484.40 1474.02,484.40 C1477.41,484.40 1480.80,484.40 1484.18,484.40 C1487.57,484.40 1490.96,484.40 1494.35,484.40 C1497.74,484.40 1501.12,484.40 1504.51,484.40 C1507.90,484.40 1511.29,484.40 1514.67,484.40 C1518.06,484.40 1521.45,484.40 1524.84,484.40 C1528.22,484.40 1531.61,484.40 1535.00,484.40 C1538.39,484.40 1541.77,484.40 1545.16,484.40 C1548.55,484.40 1551.94,484.40 1555.32,484.40 C1558.71,484.40 1562.10,484.40 1565.49,484.40 C1568.87,484.40 1572.26,484.40 1575.65,484.40 C1579.04,484.40 1582.42,484.40 1585.81,484.40 C1589.20,484.40 1592.59,484.40 1595.97,484.40 C1599.36,484.40 1602.75,484.40 1606.14,484.40 C1609.52,484.40 1612.91,484.40 1616.30,484.40" fill="none" stroke="#476ad1" stroke-width="1"/>
<path d="M1016.70,484.60 C1020.09,484.60 1023.48,484.60 1026.86,484.60 C1030.25,484.60 1033.64,484.60 1037.03,484.60 C1040.41,484.60 1043.80,484.60 1047.19,484.60 C1050.58,484.60 1053.96,484.60 1057.35,484.60 C1060.74,484.60 1064.13,484.60 1067.51,484.60 C1070.90,484.60 1074.29,484.60 1077.68,484.60 C1081.06,484.60 1084.45,484.60 1087.84,484.60 C1091.23,484.60 1094.61,484.60 1098.00,484.60 C1101.39,484.60 1104.78,484.60 1108.16,484.60 C1111.55,484.60 1114.94,484.60 1118.33,484.60 C1121.71,484.60 1125.10,484.60 1128.49,484.60 C1131.88,484.60 1135.26,484.60 1138.65,484.60 C1142.04,484.60 1145.43,484.60 1148.82,484.60 C1152.20,484.60 1155.59,484.60 1158.98,484.60 C1162.37,484.60 1165.75,484.60 1169.14,484.60 C1172.53,484.60 1175.92,484.60 1179.30,484.60 C1182.69,484.60 1186.08,484.60 1189.47,484.60 C1192.85,484.60 1196.24,484.60 1199.63,484.60 C1203.02,484.60 1206.40,484.60 1209.79,484.60 C1213.18,484.60 1216.57,484.60 1219.95,484.60 C1223.34,484.60 1226.73,484.60 1230.12,484.60 C1233.50,484.60 1236.89,484.60 1240.28,484.60 C1243.67,484.60 1247.05,484.60 1250.44,484.60 C1253.83,484.60 1257.22,484.60 1260.61,484.60 C1263.99,484.60 1267.38,484.60 1270.77,484.60 C1274.16,484.60 1277.54,484.60 1280.93,484.60 C1284.32,484.60 1287.71,484.60 1291.09,484.60 C1294.48,484.60 1297.87,484.60 1301.26,484.60 C1304.64,484.60 1308.03,484.60 1311.42,484.60 C1314.81,484.60 1318.19,484.60 1321.58,484.60 C1324.97,484.60 1328.36,484.60 1331.74,484.60 C1335.13,484.60 1338.52,484.60 1341.91,484.60 C1345.29,484.60 1348.68,484.60 1352.07,484.60 C1355.46,484.60 1358.84,484.60 1362.23,484.60 C1365.62,484.60 1369.01,484.60 1372.39,484.60 C1375.78,484.60 1379.17,484.60 1382.56,484.60 C1385.95,484.60 1389.33,484.60 1392.72,484.60 C1396.11,484.60 1399.50,484.60 1402.88,484.60 C1406.27,484.60 1409.66,484.60 1413.05,484.60 C1416.43,484.60 1419.82,484.60 1423.21,484.60 C1426.60,484.60 1429.98,484.60 1433.37,484.60 C1436.76,484.60 1440.15,484.60 1443.53,484.60 C1446.92,484.60 1450.31,484.60 1453.70,484.60 C1457.08,484.60 1460.47,484.60 1463.86,484.60 C1467.25,484.60 1470.63,484.60 1474.02,484.60 C1477.41,484.60 1480.80,484.60 1484.18,484.60 C1487.57,484.60 1490.96,484.60 1494.35,484.60 C1497.74,484.60 1501.12,484.60 1504.51,484.60 C1507.90,484.60 1511.29,484.60 1514.67,484.60 C1518.06,484.60 1521.45,484.60 1524.84,484.60 C1528.22,484.60 1531.61,484.60 1535.00,484.60 C1538.39,484.60 1541.77,484.60 1545.16,484.60 C1548.55,484.60 1551.94,484.60 1555.32,484.60 C1558.71,484.60 1562.10,484.60 1565.49,484.60 C1568.87,484.60 1572.26,484.60 1575.65,484.60 C1579.04,484.60 1582.42,484.60 1585.81,484.60 C1589.20,484.60 1592.59,484.60 1595.97,484.60 C1599.36,484.60 1602.75,484.60 1606.14,484.60 C1609.52,484.60 1612.91,484.60 1616.30,484.60" fill="none" stroke="#d147d1" stroke-width="1"/>
<path d="M1016.7,485 H1616.3" stroke="#a64bc2" stroke-width="2"/>
<g stroke="#6b6e73" stroke-width="1"><line x1="1011.0" y1="485.0" x2="1011.0" y2="491.0"/><line x1="1061.9" y1="485.0" x2="1061.9" y2="491.0"/><line x1="1112.7" y1="485.0" x2="1112.7" y2="491.0"/><line x1="1163.6" y1="485.0" x2="1163.6" y2="491.0"/><line x1="1214.4" y1="485.0" x2="1214.4" y2="491.0"/><line x1="1265.3" y1="485.0" x2="1265.3" y2="491.0"/><line x1="1316.2" y1="485.0" x2="1316.2" y2="491.0"/><line x1="1367.0" y1="485.0" x2="1367.0" y2="491.0"/><line x1="1417.9" y1="485.0" x2="1417.9" y2="491.0"/><line x1="1468.7" y1="485.0" x2="1468.7" y2="491.0"/><line x1="1519.6" y1="485.0" x2="1519.6" y2="491.0"/><line x1="1570.5" y1="485.0" x2="1570.5" y2="491.0"/></g>
<g class="xl"><text x="1011.0" y="507.5">20:45</text><text x="1061.9" y="507.5">20:50</text><text x="1112.7" y="507.5">20:55</text><text x="1163.6" y="507.5">21:00</text><text x="1214.4" y="507.5">21:05</text><text x="1265.3" y="507.5">21:10</text><text x="1316.2" y="507.5">21:15</text><text x="1367.0" y="507.5">21:20</text><text x="1417.9" y="507.5">21:25</text><text x="1468.7" y="507.5">21:30</text><text x="1519.6" y="507.5">21:35</text><text x="1570.5" y="507.5">21:40</text></g>
<g class="yl"><text x="1003.0" y="322.5">1.2%</text><text x="1003.0" y="364.0">0.9%</text><text x="1003.0" y="405.5">0.6%</text><text x="1003.0" y="447.0">0.3%</text><text x="1003.0" y="488.5">0%</text></g>
<g stroke="#262729" stroke-width="1"><line x1="318.0" y1="652.5" x2="919.0" y2="652.5"/><line x1="318.0" y1="697.5" x2="919.0" y2="697.5"/><line x1="318.0" y1="745.5" x2="919.0" y2="745.5"/><line x1="318.0" y1="794.5" x2="919.0" y2="794.5"/></g>
<path d="M323.50,658.70 C326.84,658.70 330.18,658.70 333.52,658.70 C336.86,658.70 340.20,658.70 343.54,658.70 C346.88,658.70 350.22,658.70 353.56,658.70 C356.90,658.70 360.24,658.70 363.57,658.70 C366.91,658.70 370.25,658.70 373.59,658.70 C376.93,658.70 380.27,658.70 383.61,658.70 C386.95,658.70 390.29,658.70 393.63,658.70 C396.97,658.70 400.31,658.70 403.65,658.70 C406.99,658.70 410.33,658.70 413.67,658.70 C417.01,658.70 420.35,658.70 423.69,658.70 C427.03,658.70 430.37,658.70 433.71,658.70 C437.04,658.70 440.38,658.70 443.72,658.70 C447.06,658.70 450.40,658.70 453.74,658.70 C457.08,658.70 460.42,658.70 463.76,658.70 C467.10,658.70 470.44,658.70 473.78,658.70 C477.12,658.70 480.46,658.70 483.80,658.70 C487.14,658.70 490.48,658.70 493.82,658.70 C497.16,658.70 500.50,658.70 503.84,658.70 C507.18,658.70 510.51,658.70 513.85,658.70 C517.19,658.70 520.53,658.70 523.87,658.70 C527.21,658.70 530.55,658.70 533.89,658.70 C537.23,658.70 540.57,658.70 543.91,658.70 C547.25,658.70 550.59,658.70 553.93,658.70 C557.27,658.70 560.61,658.70 563.95,658.70 C567.29,658.70 570.63,658.70 573.97,658.70 C577.31,658.70 580.65,658.70 583.98,658.70 C587.32,658.70 590.66,658.70 594.00,658.70 C597.34,658.70 600.68,658.70 604.02,658.70 C607.36,658.70 610.70,657.60 614.04,657.60 C617.38,657.60 620.72,657.60 624.06,657.60 C627.40,657.60 630.74,657.60 634.08,657.60 C637.42,657.60 640.76,658.37 644.10,658.70 C647.44,659.03 650.78,659.60 654.12,659.60 C657.45,659.60 660.79,659.60 664.13,659.60 C667.47,659.60 670.81,659.60 674.15,659.60 C677.49,659.60 680.83,658.70 684.17,658.70 C687.51,658.70 690.85,658.70 694.19,658.70 C697.53,658.70 700.87,658.70 704.21,658.70 C707.55,658.70 710.89,658.70 714.23,658.70 C717.57,658.70 720.91,658.70 724.25,658.70 C727.59,658.70 730.92,658.70 734.26,658.70 C737.60,658.70 740.94,658.70 744.28,658.70 C747.62,658.70 750.96,658.70 754.30,658.70 C757.64,658.70 760.98,658.70 764.32,658.70 C767.66,658.70 771.00,658.70 774.34,658.70 C777.68,658.70 781.02,658.70 784.36,658.70 C787.70,658.70 791.04,658.70 794.38,658.70 C797.72,658.70 801.06,661.00 804.39,661.00 C807.73,661.00 811.07,658.70 814.41,658.70 C817.75,658.70 821.09,658.70 824.43,658.70 C827.77,658.70 831.11,658.70 834.45,658.70 C837.79,658.70 841.13,658.70 844.47,658.70 C847.81,658.70 851.15,658.70 854.49,658.70 C857.83,658.70 861.17,658.70 864.51,658.70 C867.85,658.70 871.19,658.70 874.53,658.70 C877.86,658.70 881.20,658.70 884.54,658.70 C887.88,658.70 891.22,658.70 894.56,658.70 C897.90,658.70 901.24,658.70 904.58,658.70 C907.92,658.70 911.26,658.70 914.60,658.70 L914.60,718.20 C911.26,718.20 907.92,718.20 904.58,718.20 C901.24,718.20 897.90,718.20 894.56,718.20 C891.22,718.20 887.88,718.20 884.54,718.20 C881.20,718.20 877.86,718.20 874.53,718.20 C871.19,718.20 867.85,718.20 864.51,718.20 C861.17,718.20 857.83,718.20 854.49,718.20 C851.15,718.20 847.81,718.20 844.47,718.20 C841.13,718.20 837.79,718.20 834.45,718.20 C831.11,718.20 827.77,718.20 824.43,718.20 C821.09,718.20 817.75,718.20 814.41,718.20 C811.07,718.20 807.73,720.30 804.39,720.30 C801.06,720.30 797.72,720.30 794.38,720.30 C791.04,720.30 787.70,720.30 784.36,720.30 C781.02,720.30 777.68,720.30 774.34,720.30 C771.00,720.30 767.66,720.30 764.32,720.30 C760.98,720.30 757.64,720.30 754.30,720.30 C750.96,720.30 747.62,720.30 744.28,720.30 C740.94,720.30 737.60,720.30 734.26,720.30 C730.92,720.30 727.59,720.30 724.25,720.30 C720.91,720.30 717.57,720.30 714.23,720.30 C710.89,720.30 707.55,720.30 704.21,720.30 C700.87,720.30 697.53,720.30 694.19,720.30 C690.85,720.30 687.51,720.30 684.17,720.30 C680.83,720.30 677.49,720.30 674.15,720.30 C670.81,720.30 667.47,720.30 664.13,720.30 C660.79,720.30 657.45,720.30 654.12,720.30 C650.78,720.30 647.44,720.30 644.10,720.30 C640.76,720.30 637.42,720.30 634.08,720.30 C630.74,720.30 627.40,720.30 624.06,720.30 C620.72,720.30 617.38,720.30 614.04,720.30 C610.70,720.30 607.36,720.30 604.02,720.30 C600.68,720.30 597.34,720.30 594.00,720.30 C590.66,720.30 587.32,720.30 583.98,720.30 C580.65,720.30 577.31,720.30 573.97,720.30 C570.63,720.30 567.29,720.30 563.95,720.30 C560.61,720.30 557.27,720.30 553.93,720.30 C550.59,720.30 547.25,720.30 543.91,720.30 C540.57,720.30 537.23,720.30 533.89,720.30 C530.55,720.30 527.21,720.30 523.87,720.30 C520.53,720.30 517.19,720.30 513.85,720.30 C510.51,720.30 507.18,720.30 503.84,720.30 C500.50,720.30 497.16,720.30 493.82,720.30 C490.48,720.30 487.14,720.30 483.80,720.30 C480.46,720.30 477.12,720.30 473.78,720.30 C470.44,720.30 467.10,720.30 463.76,720.30 C460.42,720.30 457.08,720.30 453.74,720.30 C450.40,720.30 447.06,720.30 443.72,720.30 C440.38,720.30 437.04,720.30 433.71,720.30 C430.37,720.30 427.03,720.30 423.69,720.30 C420.35,720.30 417.01,720.30 413.67,720.30 C410.33,720.30 406.99,720.30 403.65,720.30 C400.31,720.30 396.97,720.30 393.63,720.30 C390.29,720.30 386.95,720.30 383.61,720.30 C380.27,720.30 376.93,720.30 373.59,720.30 C370.25,720.30 366.91,720.30 363.57,720.30 C360.24,720.30 356.90,720.30 353.56,720.30 C350.22,720.30 346.88,720.30 343.54,720.30 C340.20,720.30 336.86,720.30 333.52,720.30 C330.18,720.30 326.84,720.30 323.50,720.30 Z" fill="#2eb88a" fill-opacity="0.2"/>
<path d="M323.50,720.30 C326.84,720.30 330.18,720.30 333.52,720.30 C336.86,720.30 340.20,720.30 343.54,720.30 C346.88,720.30 350.22,720.30 353.56,720.30 C356.90,720.30 360.24,720.30 363.57,720.30 C366.91,720.30 370.25,720.30 373.59,720.30 C376.93,720.30 380.27,720.30 383.61,720.30 C386.95,720.30 390.29,720.30 393.63,720.30 C396.97,720.30 400.31,720.30 403.65,720.30 C406.99,720.30 410.33,720.30 413.67,720.30 C417.01,720.30 420.35,720.30 423.69,720.30 C427.03,720.30 430.37,720.30 433.71,720.30 C437.04,720.30 440.38,720.30 443.72,720.30 C447.06,720.30 450.40,720.30 453.74,720.30 C457.08,720.30 460.42,720.30 463.76,720.30 C467.10,720.30 470.44,720.30 473.78,720.30 C477.12,720.30 480.46,720.30 483.80,720.30 C487.14,720.30 490.48,720.30 493.82,720.30 C497.16,720.30 500.50,720.30 503.84,720.30 C507.18,720.30 510.51,720.30 513.85,720.30 C517.19,720.30 520.53,720.30 523.87,720.30 C527.21,720.30 530.55,720.30 533.89,720.30 C537.23,720.30 540.57,720.30 543.91,720.30 C547.25,720.30 550.59,720.30 553.93,720.30 C557.27,720.30 560.61,720.30 563.95,720.30 C567.29,720.30 570.63,720.30 573.97,720.30 C577.31,720.30 580.65,720.30 583.98,720.30 C587.32,720.30 590.66,720.30 594.00,720.30 C597.34,720.30 600.68,720.30 604.02,720.30 C607.36,720.30 610.70,720.30 614.04,720.30 C617.38,720.30 620.72,720.30 624.06,720.30 C627.40,720.30 630.74,720.30 634.08,720.30 C637.42,720.30 640.76,720.30 644.10,720.30 C647.44,720.30 650.78,720.30 654.12,720.30 C657.45,720.30 660.79,720.30 664.13,720.30 C667.47,720.30 670.81,720.30 674.15,720.30 C677.49,720.30 680.83,720.30 684.17,720.30 C687.51,720.30 690.85,720.30 694.19,720.30 C697.53,720.30 700.87,720.30 704.21,720.30 C707.55,720.30 710.89,720.30 714.23,720.30 C717.57,720.30 720.91,720.30 724.25,720.30 C727.59,720.30 730.92,720.30 734.26,720.30 C737.60,720.30 740.94,720.30 744.28,720.30 C747.62,720.30 750.96,720.30 754.30,720.30 C757.64,720.30 760.98,720.30 764.32,720.30 C767.66,720.30 771.00,720.30 774.34,720.30 C777.68,720.30 781.02,720.30 784.36,720.30 C787.70,720.30 791.04,720.30 794.38,720.30 C797.72,720.30 801.06,720.30 804.39,720.30 C807.73,720.30 811.07,718.20 814.41,718.20 C817.75,718.20 821.09,718.20 824.43,718.20 C827.77,718.20 831.11,718.20 834.45,718.20 C837.79,718.20 841.13,718.20 844.47,718.20 C847.81,718.20 851.15,718.20 854.49,718.20 C857.83,718.20 861.17,718.20 864.51,718.20 C867.85,718.20 871.19,718.20 874.53,718.20 C877.86,718.20 881.20,718.20 884.54,718.20 C887.88,718.20 891.22,718.20 894.56,718.20 C897.90,718.20 901.24,718.20 904.58,718.20 C907.92,718.20 911.26,718.20 914.60,718.20 L914.6,818.6 L323.5,818.6 Z" fill="#2eb88a" fill-opacity="0.4"/>
<path d="M323.50,658.70 C326.84,658.70 330.18,658.70 333.52,658.70 C336.86,658.70 340.20,658.70 343.54,658.70 C346.88,658.70 350.22,658.70 353.56,658.70 C356.90,658.70 360.24,658.70 363.57,658.70 C366.91,658.70 370.25,658.70 373.59,658.70 C376.93,658.70 380.27,658.70 383.61,658.70 C386.95,658.70 390.29,658.70 393.63,658.70 C396.97,658.70 400.31,658.70 403.65,658.70 C406.99,658.70 410.33,658.70 413.67,658.70 C417.01,658.70 420.35,658.70 423.69,658.70 C427.03,658.70 430.37,658.70 433.71,658.70 C437.04,658.70 440.38,658.70 443.72,658.70 C447.06,658.70 450.40,658.70 453.74,658.70 C457.08,658.70 460.42,658.70 463.76,658.70 C467.10,658.70 470.44,658.70 473.78,658.70 C477.12,658.70 480.46,658.70 483.80,658.70 C487.14,658.70 490.48,658.70 493.82,658.70 C497.16,658.70 500.50,658.70 503.84,658.70 C507.18,658.70 510.51,658.70 513.85,658.70 C517.19,658.70 520.53,658.70 523.87,658.70 C527.21,658.70 530.55,658.70 533.89,658.70 C537.23,658.70 540.57,658.70 543.91,658.70 C547.25,658.70 550.59,658.70 553.93,658.70 C557.27,658.70 560.61,658.70 563.95,658.70 C567.29,658.70 570.63,658.70 573.97,658.70 C577.31,658.70 580.65,658.70 583.98,658.70 C587.32,658.70 590.66,658.70 594.00,658.70 C597.34,658.70 600.68,658.70 604.02,658.70 C607.36,658.70 610.70,657.60 614.04,657.60 C617.38,657.60 620.72,657.60 624.06,657.60 C627.40,657.60 630.74,657.60 634.08,657.60 C637.42,657.60 640.76,658.37 644.10,658.70 C647.44,659.03 650.78,659.60 654.12,659.60 C657.45,659.60 660.79,659.60 664.13,659.60 C667.47,659.60 670.81,659.60 674.15,659.60 C677.49,659.60 680.83,658.70 684.17,658.70 C687.51,658.70 690.85,658.70 694.19,658.70 C697.53,658.70 700.87,658.70 704.21,658.70 C707.55,658.70 710.89,658.70 714.23,658.70 C717.57,658.70 720.91,658.70 724.25,658.70 C727.59,658.70 730.92,658.70 734.26,658.70 C737.60,658.70 740.94,658.70 744.28,658.70 C747.62,658.70 750.96,658.70 754.30,658.70 C757.64,658.70 760.98,658.70 764.32,658.70 C767.66,658.70 771.00,658.70 774.34,658.70 C777.68,658.70 781.02,658.70 784.36,658.70 C787.70,658.70 791.04,658.70 794.38,658.70 C797.72,658.70 801.06,661.00 804.39,661.00 C807.73,661.00 811.07,658.70 814.41,658.70 C817.75,658.70 821.09,658.70 824.43,658.70 C827.77,658.70 831.11,658.70 834.45,658.70 C837.79,658.70 841.13,658.70 844.47,658.70 C847.81,658.70 851.15,658.70 854.49,658.70 C857.83,658.70 861.17,658.70 864.51,658.70 C867.85,658.70 871.19,658.70 874.53,658.70 C877.86,658.70 881.20,658.70 884.54,658.70 C887.88,658.70 891.22,658.70 894.56,658.70 C897.90,658.70 901.24,658.70 904.58,658.70 C907.92,658.70 911.26,658.70 914.60,658.70" fill="none" stroke="#2eb88a" stroke-opacity="0.45" stroke-width="1"/>
<path d="M323.50,720.30 C326.84,720.30 330.18,720.30 333.52,720.30 C336.86,720.30 340.20,720.30 343.54,720.30 C346.88,720.30 350.22,720.30 353.56,720.30 C356.90,720.30 360.24,720.30 363.57,720.30 C366.91,720.30 370.25,720.30 373.59,720.30 C376.93,720.30 380.27,720.30 383.61,720.30 C386.95,720.30 390.29,720.30 393.63,720.30 C396.97,720.30 400.31,720.30 403.65,720.30 C406.99,720.30 410.33,720.30 413.67,720.30 C417.01,720.30 420.35,720.30 423.69,720.30 C427.03,720.30 430.37,720.30 433.71,720.30 C437.04,720.30 440.38,720.30 443.72,720.30 C447.06,720.30 450.40,720.30 453.74,720.30 C457.08,720.30 460.42,720.30 463.76,720.30 C467.10,720.30 470.44,720.30 473.78,720.30 C477.12,720.30 480.46,720.30 483.80,720.30 C487.14,720.30 490.48,720.30 493.82,720.30 C497.16,720.30 500.50,720.30 503.84,720.30 C507.18,720.30 510.51,720.30 513.85,720.30 C517.19,720.30 520.53,720.30 523.87,720.30 C527.21,720.30 530.55,720.30 533.89,720.30 C537.23,720.30 540.57,720.30 543.91,720.30 C547.25,720.30 550.59,720.30 553.93,720.30 C557.27,720.30 560.61,720.30 563.95,720.30 C567.29,720.30 570.63,720.30 573.97,720.30 C577.31,720.30 580.65,720.30 583.98,720.30 C587.32,720.30 590.66,720.30 594.00,720.30 C597.34,720.30 600.68,720.30 604.02,720.30 C607.36,720.30 610.70,720.30 614.04,720.30 C617.38,720.30 620.72,720.30 624.06,720.30 C627.40,720.30 630.74,720.30 634.08,720.30 C637.42,720.30 640.76,720.30 644.10,720.30 C647.44,720.30 650.78,720.30 654.12,720.30 C657.45,720.30 660.79,720.30 664.13,720.30 C667.47,720.30 670.81,720.30 674.15,720.30 C677.49,720.30 680.83,720.30 684.17,720.30 C687.51,720.30 690.85,720.30 694.19,720.30 C697.53,720.30 700.87,720.30 704.21,720.30 C707.55,720.30 710.89,720.30 714.23,720.30 C717.57,720.30 720.91,720.30 724.25,720.30 C727.59,720.30 730.92,720.30 734.26,720.30 C737.60,720.30 740.94,720.30 744.28,720.30 C747.62,720.30 750.96,720.30 754.30,720.30 C757.64,720.30 760.98,720.30 764.32,720.30 C767.66,720.30 771.00,720.30 774.34,720.30 C777.68,720.30 781.02,720.30 784.36,720.30 C787.70,720.30 791.04,720.30 794.38,720.30 C797.72,720.30 801.06,720.30 804.39,720.30 C807.73,720.30 811.07,718.20 814.41,718.20 C817.75,718.20 821.09,718.20 824.43,718.20 C827.77,718.20 831.11,718.20 834.45,718.20 C837.79,718.20 841.13,718.20 844.47,718.20 C847.81,718.20 851.15,718.20 854.49,718.20 C857.83,718.20 861.17,718.20 864.51,718.20 C867.85,718.20 871.19,718.20 874.53,718.20 C877.86,718.20 881.20,718.20 884.54,718.20 C887.88,718.20 891.22,718.20 894.56,718.20 C897.90,718.20 901.24,718.20 904.58,718.20 C907.92,718.20 911.26,718.20 914.60,718.20" fill="none" stroke="#2eb88a" stroke-width="1.2"/>
<g stroke="#6b6e73" stroke-width="1"><line x1="318.0" y1="819.0" x2="318.0" y2="825.0"/><line x1="368.1" y1="819.0" x2="368.1" y2="825.0"/><line x1="418.2" y1="819.0" x2="418.2" y2="825.0"/><line x1="468.3" y1="819.0" x2="468.3" y2="825.0"/><line x1="518.4" y1="819.0" x2="518.4" y2="825.0"/><line x1="568.5" y1="819.0" x2="568.5" y2="825.0"/><line x1="618.6" y1="819.0" x2="618.6" y2="825.0"/><line x1="668.7" y1="819.0" x2="668.7" y2="825.0"/><line x1="718.8" y1="819.0" x2="718.8" y2="825.0"/><line x1="768.9" y1="819.0" x2="768.9" y2="825.0"/><line x1="819.0" y1="819.0" x2="819.0" y2="825.0"/><line x1="869.1" y1="819.0" x2="869.1" y2="825.0"/></g>
<g class="xl"><text x="318.0" y="841.5">20:45</text><text x="368.1" y="841.5">20:50</text><text x="418.2" y="841.5">20:55</text><text x="468.3" y="841.5">21:00</text><text x="518.4" y="841.5">21:05</text><text x="568.5" y="841.5">21:10</text><text x="618.6" y="841.5">21:15</text><text x="668.7" y="841.5">21:20</text><text x="718.8" y="841.5">21:25</text><text x="768.9" y="841.5">21:30</text><text x="819.0" y="841.5">21:35</text><text x="869.1" y="841.5">21:40</text></g>
<g class="yl"><text x="310.5" y="656.5">1.7 GB</text><text x="310.5" y="701.0">1.3 GB</text><text x="310.5" y="749.5">0.8 GB</text><text x="310.5" y="798.5">0.3 GB</text></g>
<g stroke="#262729" stroke-width="1"><line x1="1026.0" y1="652.5" x2="1621.0" y2="652.5"/><line x1="1026.0" y1="694.5" x2="1621.0" y2="694.5"/><line x1="1026.0" y1="736.5" x2="1621.0" y2="736.5"/><line x1="1026.0" y1="777.5" x2="1621.0" y2="777.5"/></g>
<path d="M1032.00,818.10 C1035.31,818.10 1038.61,818.10 1041.92,818.10 C1045.22,818.10 1048.53,818.10 1051.83,818.10 C1055.14,818.10 1058.44,818.10 1061.75,818.10 C1065.05,818.10 1068.36,818.10 1071.66,818.10 C1074.97,818.10 1078.27,818.10 1081.58,818.10 C1084.88,818.10 1088.19,818.10 1091.49,818.10 C1094.80,818.10 1098.10,818.10 1101.41,818.10 C1104.71,818.10 1108.02,818.10 1111.32,818.10 C1114.63,818.10 1117.93,818.10 1121.24,818.10 C1124.54,818.10 1127.85,818.10 1131.15,818.10 C1134.46,818.10 1137.76,818.10 1141.07,818.10 C1144.37,818.10 1147.68,818.10 1150.98,818.10 C1154.29,818.10 1157.59,818.10 1160.90,818.10 C1164.20,818.10 1167.51,818.10 1170.81,818.10 C1174.12,818.10 1177.42,818.10 1180.73,818.10 C1184.03,818.10 1187.34,818.10 1190.64,818.10 C1193.95,818.10 1197.25,818.10 1200.56,818.10 C1203.86,818.10 1207.17,818.10 1210.47,818.10 C1213.78,818.10 1217.08,818.10 1220.39,818.10 C1223.69,818.10 1227.00,818.10 1230.31,818.10 C1233.61,818.10 1236.92,818.10 1240.22,818.10 C1243.53,818.10 1246.83,818.10 1250.14,818.10 C1253.44,818.10 1256.75,818.10 1260.05,818.10 C1263.36,818.10 1266.66,818.10 1269.97,818.10 C1273.27,818.10 1276.58,818.10 1279.88,818.10 C1283.19,818.10 1286.49,818.10 1289.80,818.10 C1293.10,818.10 1296.41,818.10 1299.71,818.10 C1303.02,818.10 1306.32,818.10 1309.63,818.10 C1312.93,818.10 1316.24,818.10 1319.54,818.10 C1322.85,818.10 1326.15,818.10 1329.46,818.10 C1332.76,818.10 1336.07,818.10 1339.37,818.10 C1342.68,818.10 1345.98,818.10 1349.29,818.10 C1352.59,818.10 1355.90,818.10 1359.20,818.10 C1362.51,818.10 1365.81,818.10 1369.12,818.10 C1372.42,818.10 1375.73,818.10 1379.03,818.10 C1382.34,818.10 1385.64,818.10 1388.95,818.10 C1392.25,818.10 1395.56,818.10 1398.86,818.10 C1402.17,818.10 1405.47,818.10 1408.78,818.10 C1412.08,818.10 1415.39,818.10 1418.69,818.10 C1422.00,818.10 1425.31,818.10 1428.61,818.10 C1431.92,818.10 1435.22,818.10 1438.53,818.10 C1441.83,818.10 1445.14,818.10 1448.44,818.10 C1451.75,818.10 1455.05,818.10 1458.36,818.10 C1461.66,818.10 1464.97,818.10 1468.27,818.10 C1471.58,818.10 1474.88,818.10 1478.19,818.10 C1481.49,818.10 1484.80,818.10 1488.10,818.10 C1491.41,818.10 1494.71,818.10 1498.02,818.10 C1501.32,818.10 1504.63,818.10 1507.93,818.10 C1511.24,818.10 1514.54,817.60 1517.85,817.60 C1521.15,817.60 1524.46,817.60 1527.76,817.60 C1531.07,817.60 1534.37,817.60 1537.68,817.60 C1540.98,817.60 1544.29,817.60 1547.59,817.60 C1550.90,817.60 1554.20,817.60 1557.51,817.60 C1560.81,817.60 1564.12,817.60 1567.42,817.60 C1570.73,817.60 1574.03,817.60 1577.34,817.60 C1580.64,817.60 1583.95,817.60 1587.25,817.60 C1590.56,817.60 1593.86,817.60 1597.17,817.60 C1600.47,817.60 1603.78,817.60 1607.08,817.60 C1610.39,817.60 1613.69,817.60 1617.00,817.60 L1617.00,818.60 C1613.69,818.60 1610.39,818.60 1607.08,818.60 C1603.78,818.60 1600.47,818.60 1597.17,818.60 C1593.86,818.60 1590.56,818.60 1587.25,818.60 C1583.95,818.60 1580.64,818.60 1577.34,818.60 C1574.03,818.60 1570.73,818.60 1567.42,818.60 C1564.12,818.60 1560.81,818.60 1557.51,818.60 C1554.20,818.60 1550.90,818.60 1547.59,818.60 C1544.29,818.60 1540.98,818.60 1537.68,818.60 C1534.37,818.60 1531.07,818.60 1527.76,818.60 C1524.46,818.60 1521.15,818.60 1517.85,818.60 C1514.54,818.60 1511.24,818.60 1507.93,818.60 C1504.63,818.60 1501.32,818.60 1498.02,818.60 C1494.71,818.60 1491.41,818.60 1488.10,818.60 C1484.80,818.60 1481.49,818.60 1478.19,818.60 C1474.88,818.60 1471.58,818.60 1468.27,818.60 C1464.97,818.60 1461.66,818.60 1458.36,818.60 C1455.05,818.60 1451.75,818.60 1448.44,818.60 C1445.14,818.60 1441.83,818.60 1438.53,818.60 C1435.22,818.60 1431.92,818.60 1428.61,818.60 C1425.31,818.60 1422.00,818.60 1418.69,818.60 C1415.39,818.60 1412.08,818.60 1408.78,818.60 C1405.47,818.60 1402.17,818.60 1398.86,818.60 C1395.56,818.60 1392.25,818.60 1388.95,818.60 C1385.64,818.60 1382.34,818.60 1379.03,818.60 C1375.73,818.60 1372.42,818.60 1369.12,818.60 C1365.81,818.60 1362.51,818.60 1359.20,818.60 C1355.90,818.60 1352.59,818.60 1349.29,818.60 C1345.98,818.60 1342.68,818.60 1339.37,818.60 C1336.07,818.60 1332.76,818.60 1329.46,818.60 C1326.15,818.60 1322.85,818.60 1319.54,818.60 C1316.24,818.60 1312.93,818.60 1309.63,818.60 C1306.32,818.60 1303.02,818.60 1299.71,818.60 C1296.41,818.60 1293.10,818.60 1289.80,818.60 C1286.49,818.60 1283.19,818.60 1279.88,818.60 C1276.58,818.60 1273.27,818.60 1269.97,818.60 C1266.66,818.60 1263.36,818.60 1260.05,818.60 C1256.75,818.60 1253.44,818.60 1250.14,818.60 C1246.83,818.60 1243.53,818.60 1240.22,818.60 C1236.92,818.60 1233.61,818.60 1230.31,818.60 C1227.00,818.60 1223.69,818.60 1220.39,818.60 C1217.08,818.60 1213.78,818.60 1210.47,818.60 C1207.17,818.60 1203.86,818.60 1200.56,818.60 C1197.25,818.60 1193.95,818.60 1190.64,818.60 C1187.34,818.60 1184.03,818.60 1180.73,818.60 C1177.42,818.60 1174.12,818.60 1170.81,818.60 C1167.51,818.60 1164.20,818.60 1160.90,818.60 C1157.59,818.60 1154.29,818.60 1150.98,818.60 C1147.68,818.60 1144.37,818.60 1141.07,818.60 C1137.76,818.60 1134.46,818.60 1131.15,818.60 C1127.85,818.60 1124.54,818.60 1121.24,818.60 C1117.93,818.60 1114.63,818.60 1111.32,818.60 C1108.02,818.60 1104.71,818.60 1101.41,818.60 C1098.10,818.60 1094.80,818.60 1091.49,818.60 C1088.19,818.60 1084.88,818.60 1081.58,818.60 C1078.27,818.60 1074.97,818.60 1071.66,818.60 C1068.36,818.60 1065.05,818.60 1061.75,818.60 C1058.44,818.60 1055.14,818.60 1051.83,818.60 C1048.53,818.60 1045.22,818.60 1041.92,818.60 C1038.61,818.60 1035.31,818.60 1032.00,818.60 Z" fill="#d147d1" fill-opacity="0.4"/>
<path d="M1032.00,817.60 C1035.31,817.60 1038.61,817.60 1041.92,817.60 C1045.22,817.60 1048.53,817.60 1051.83,817.60 C1055.14,817.60 1058.44,817.60 1061.75,817.60 C1065.05,817.60 1068.36,817.60 1071.66,817.60 C1074.97,817.60 1078.27,817.60 1081.58,817.60 C1084.88,817.60 1088.19,817.60 1091.49,817.60 C1094.80,817.60 1098.10,817.60 1101.41,817.60 C1104.71,817.60 1108.02,817.60 1111.32,817.60 C1114.63,817.60 1117.93,817.60 1121.24,817.60 C1124.54,817.60 1127.85,817.60 1131.15,817.60 C1134.46,817.60 1137.76,817.60 1141.07,817.60 C1144.37,817.60 1147.68,817.60 1150.98,817.60 C1154.29,817.60 1157.59,817.60 1160.90,817.60 C1164.20,817.60 1167.51,817.60 1170.81,817.60 C1174.12,817.60 1177.42,817.60 1180.73,817.60 C1184.03,817.60 1187.34,817.60 1190.64,817.60 C1193.95,817.60 1197.25,817.60 1200.56,817.60 C1203.86,817.60 1207.17,817.60 1210.47,817.60 C1213.78,817.60 1217.08,817.60 1220.39,817.60 C1223.69,817.60 1227.00,817.60 1230.31,817.60 C1233.61,817.60 1236.92,817.60 1240.22,817.60 C1243.53,817.60 1246.83,817.60 1250.14,817.60 C1253.44,817.60 1256.75,817.60 1260.05,817.60 C1263.36,817.60 1266.66,817.60 1269.97,817.60 C1273.27,817.60 1276.58,817.60 1279.88,817.60 C1283.19,817.60 1286.49,817.60 1289.80,817.60 C1293.10,817.60 1296.41,817.60 1299.71,817.60 C1303.02,817.60 1306.32,817.60 1309.63,817.60 C1312.93,817.60 1316.24,817.60 1319.54,817.60 C1322.85,817.60 1326.15,817.60 1329.46,817.60 C1332.76,817.60 1336.07,817.60 1339.37,817.60 C1342.68,817.60 1345.98,817.60 1349.29,817.60 C1352.59,817.60 1355.90,817.60 1359.20,817.60 C1362.51,817.60 1365.81,817.60 1369.12,817.60 C1372.42,817.60 1375.73,817.60 1379.03,817.60 C1382.34,817.60 1385.64,817.60 1388.95,817.60 C1392.25,817.60 1395.56,817.60 1398.86,817.60 C1402.17,817.60 1405.47,817.60 1408.78,817.60 C1412.08,817.60 1415.39,817.60 1418.69,817.60 C1422.00,817.60 1425.31,817.60 1428.61,817.60 C1431.92,817.60 1435.22,817.60 1438.53,817.60 C1441.83,817.60 1445.14,817.60 1448.44,817.60 C1451.75,817.60 1455.05,817.60 1458.36,817.60 C1461.66,817.60 1464.97,817.60 1468.27,817.60 C1471.58,817.60 1474.88,817.60 1478.19,817.60 C1481.49,817.60 1484.80,817.60 1488.10,817.60 C1491.41,817.60 1494.71,817.60 1498.02,817.60 C1501.32,817.60 1504.63,817.60 1507.93,817.60 C1511.24,817.60 1514.54,815.70 1517.85,815.70 C1521.15,815.70 1524.46,815.70 1527.76,815.70 C1531.07,815.70 1534.37,815.70 1537.68,815.70 C1540.98,815.70 1544.29,815.70 1547.59,815.70 C1550.90,815.70 1554.20,815.70 1557.51,815.70 C1560.81,815.70 1564.12,815.70 1567.42,815.70 C1570.73,815.70 1574.03,815.70 1577.34,815.70 C1580.64,815.70 1583.95,815.70 1587.25,815.70 C1590.56,815.70 1593.86,815.70 1597.17,815.70 C1600.47,815.70 1603.78,815.70 1607.08,815.70 C1610.39,815.70 1613.69,815.70 1617.00,815.70 L1617.00,817.60 C1613.69,817.60 1610.39,817.60 1607.08,817.60 C1603.78,817.60 1600.47,817.60 1597.17,817.60 C1593.86,817.60 1590.56,817.60 1587.25,817.60 C1583.95,817.60 1580.64,817.60 1577.34,817.60 C1574.03,817.60 1570.73,817.60 1567.42,817.60 C1564.12,817.60 1560.81,817.60 1557.51,817.60 C1554.20,817.60 1550.90,817.60 1547.59,817.60 C1544.29,817.60 1540.98,817.60 1537.68,817.60 C1534.37,817.60 1531.07,817.60 1527.76,817.60 C1524.46,817.60 1521.15,817.60 1517.85,817.60 C1514.54,817.60 1511.24,818.10 1507.93,818.10 C1504.63,818.10 1501.32,818.10 1498.02,818.10 C1494.71,818.10 1491.41,818.10 1488.10,818.10 C1484.80,818.10 1481.49,818.10 1478.19,818.10 C1474.88,818.10 1471.58,818.10 1468.27,818.10 C1464.97,818.10 1461.66,818.10 1458.36,818.10 C1455.05,818.10 1451.75,818.10 1448.44,818.10 C1445.14,818.10 1441.83,818.10 1438.53,818.10 C1435.22,818.10 1431.92,818.10 1428.61,818.10 C1425.31,818.10 1422.00,818.10 1418.69,818.10 C1415.39,818.10 1412.08,818.10 1408.78,818.10 C1405.47,818.10 1402.17,818.10 1398.86,818.10 C1395.56,818.10 1392.25,818.10 1388.95,818.10 C1385.64,818.10 1382.34,818.10 1379.03,818.10 C1375.73,818.10 1372.42,818.10 1369.12,818.10 C1365.81,818.10 1362.51,818.10 1359.20,818.10 C1355.90,818.10 1352.59,818.10 1349.29,818.10 C1345.98,818.10 1342.68,818.10 1339.37,818.10 C1336.07,818.10 1332.76,818.10 1329.46,818.10 C1326.15,818.10 1322.85,818.10 1319.54,818.10 C1316.24,818.10 1312.93,818.10 1309.63,818.10 C1306.32,818.10 1303.02,818.10 1299.71,818.10 C1296.41,818.10 1293.10,818.10 1289.80,818.10 C1286.49,818.10 1283.19,818.10 1279.88,818.10 C1276.58,818.10 1273.27,818.10 1269.97,818.10 C1266.66,818.10 1263.36,818.10 1260.05,818.10 C1256.75,818.10 1253.44,818.10 1250.14,818.10 C1246.83,818.10 1243.53,818.10 1240.22,818.10 C1236.92,818.10 1233.61,818.10 1230.31,818.10 C1227.00,818.10 1223.69,818.10 1220.39,818.10 C1217.08,818.10 1213.78,818.10 1210.47,818.10 C1207.17,818.10 1203.86,818.10 1200.56,818.10 C1197.25,818.10 1193.95,818.10 1190.64,818.10 C1187.34,818.10 1184.03,818.10 1180.73,818.10 C1177.42,818.10 1174.12,818.10 1170.81,818.10 C1167.51,818.10 1164.20,818.10 1160.90,818.10 C1157.59,818.10 1154.29,818.10 1150.98,818.10 C1147.68,818.10 1144.37,818.10 1141.07,818.10 C1137.76,818.10 1134.46,818.10 1131.15,818.10 C1127.85,818.10 1124.54,818.10 1121.24,818.10 C1117.93,818.10 1114.63,818.10 1111.32,818.10 C1108.02,818.10 1104.71,818.10 1101.41,818.10 C1098.10,818.10 1094.80,818.10 1091.49,818.10 C1088.19,818.10 1084.88,818.10 1081.58,818.10 C1078.27,818.10 1074.97,818.10 1071.66,818.10 C1068.36,818.10 1065.05,818.10 1061.75,818.10 C1058.44,818.10 1055.14,818.10 1051.83,818.10 C1048.53,818.10 1045.22,818.10 1041.92,818.10 C1038.61,818.10 1035.31,818.10 1032.00,818.10 Z" fill="#476ad1" fill-opacity="0.4"/>
<path d="M1032.00,814.20 C1035.31,814.20 1038.61,814.20 1041.92,814.20 C1045.22,814.20 1048.53,814.20 1051.83,814.20 C1055.14,814.20 1058.44,814.20 1061.75,814.20 C1065.05,814.20 1068.36,814.20 1071.66,814.20 C1074.97,814.20 1078.27,814.20 1081.58,814.20 C1084.88,814.20 1088.19,814.20 1091.49,814.20 C1094.80,814.20 1098.10,814.20 1101.41,814.20 C1104.71,814.20 1108.02,814.20 1111.32,814.20 C1114.63,814.20 1117.93,814.20 1121.24,814.20 C1124.54,814.20 1127.85,814.20 1131.15,814.20 C1134.46,814.20 1137.76,814.20 1141.07,814.20 C1144.37,814.20 1147.68,814.20 1150.98,814.20 C1154.29,814.20 1157.59,814.20 1160.90,814.20 C1164.20,814.20 1167.51,814.20 1170.81,814.20 C1174.12,814.20 1177.42,814.20 1180.73,814.20 C1184.03,814.20 1187.34,814.20 1190.64,814.20 C1193.95,814.20 1197.25,814.20 1200.56,814.20 C1203.86,814.20 1207.17,814.20 1210.47,814.20 C1213.78,814.20 1217.08,814.20 1220.39,814.20 C1223.69,814.20 1227.00,814.20 1230.31,814.20 C1233.61,814.20 1236.92,814.20 1240.22,814.20 C1243.53,814.20 1246.83,814.20 1250.14,814.20 C1253.44,814.20 1256.75,814.20 1260.05,814.20 C1263.36,814.20 1266.66,814.20 1269.97,814.20 C1273.27,814.20 1276.58,814.20 1279.88,814.20 C1283.19,814.20 1286.49,814.20 1289.80,814.20 C1293.10,814.20 1296.41,814.20 1299.71,814.20 C1303.02,814.20 1306.32,814.20 1309.63,814.20 C1312.93,814.20 1316.24,814.20 1319.54,814.20 C1322.85,814.20 1326.15,814.20 1329.46,814.20 C1332.76,814.20 1336.07,814.20 1339.37,814.20 C1342.68,814.20 1345.98,814.20 1349.29,814.20 C1352.59,814.20 1355.90,814.20 1359.20,814.20 C1362.51,814.20 1365.81,814.20 1369.12,814.20 C1372.42,814.20 1375.73,814.20 1379.03,814.20 C1382.34,814.20 1385.64,814.20 1388.95,814.20 C1392.25,814.20 1395.56,814.20 1398.86,814.20 C1402.17,814.20 1405.47,814.20 1408.78,814.20 C1412.08,814.20 1415.39,814.20 1418.69,814.20 C1422.00,814.20 1425.31,814.20 1428.61,814.20 C1431.92,814.20 1435.22,814.20 1438.53,814.20 C1441.83,814.20 1445.14,814.20 1448.44,814.20 C1451.75,814.20 1455.05,814.20 1458.36,814.20 C1461.66,814.20 1464.97,814.20 1468.27,814.20 C1471.58,814.20 1474.88,814.20 1478.19,814.20 C1481.49,814.20 1484.80,814.20 1488.10,814.20 C1491.41,814.20 1494.71,814.20 1498.02,814.20 C1501.32,814.20 1504.63,814.20 1507.93,814.20 C1511.24,814.20 1514.54,811.70 1517.85,811.70 C1521.15,811.70 1524.46,811.70 1527.76,811.70 C1531.07,811.70 1534.37,811.70 1537.68,811.70 C1540.98,811.70 1544.29,811.70 1547.59,811.70 C1550.90,811.70 1554.20,811.70 1557.51,811.70 C1560.81,811.70 1564.12,811.70 1567.42,811.70 C1570.73,811.70 1574.03,811.70 1577.34,811.70 C1580.64,811.70 1583.95,811.70 1587.25,811.70 C1590.56,811.70 1593.86,811.70 1597.17,811.70 C1600.47,811.70 1603.78,811.70 1607.08,811.70 C1610.39,811.70 1613.69,811.70 1617.00,811.70 L1617.00,815.70 C1613.69,815.70 1610.39,815.70 1607.08,815.70 C1603.78,815.70 1600.47,815.70 1597.17,815.70 C1593.86,815.70 1590.56,815.70 1587.25,815.70 C1583.95,815.70 1580.64,815.70 1577.34,815.70 C1574.03,815.70 1570.73,815.70 1567.42,815.70 C1564.12,815.70 1560.81,815.70 1557.51,815.70 C1554.20,815.70 1550.90,815.70 1547.59,815.70 C1544.29,815.70 1540.98,815.70 1537.68,815.70 C1534.37,815.70 1531.07,815.70 1527.76,815.70 C1524.46,815.70 1521.15,815.70 1517.85,815.70 C1514.54,815.70 1511.24,817.60 1507.93,817.60 C1504.63,817.60 1501.32,817.60 1498.02,817.60 C1494.71,817.60 1491.41,817.60 1488.10,817.60 C1484.80,817.60 1481.49,817.60 1478.19,817.60 C1474.88,817.60 1471.58,817.60 1468.27,817.60 C1464.97,817.60 1461.66,817.60 1458.36,817.60 C1455.05,817.60 1451.75,817.60 1448.44,817.60 C1445.14,817.60 1441.83,817.60 1438.53,817.60 C1435.22,817.60 1431.92,817.60 1428.61,817.60 C1425.31,817.60 1422.00,817.60 1418.69,817.60 C1415.39,817.60 1412.08,817.60 1408.78,817.60 C1405.47,817.60 1402.17,817.60 1398.86,817.60 C1395.56,817.60 1392.25,817.60 1388.95,817.60 C1385.64,817.60 1382.34,817.60 1379.03,817.60 C1375.73,817.60 1372.42,817.60 1369.12,817.60 C1365.81,817.60 1362.51,817.60 1359.20,817.60 C1355.90,817.60 1352.59,817.60 1349.29,817.60 C1345.98,817.60 1342.68,817.60 1339.37,817.60 C1336.07,817.60 1332.76,817.60 1329.46,817.60 C1326.15,817.60 1322.85,817.60 1319.54,817.60 C1316.24,817.60 1312.93,817.60 1309.63,817.60 C1306.32,817.60 1303.02,817.60 1299.71,817.60 C1296.41,817.60 1293.10,817.60 1289.80,817.60 C1286.49,817.60 1283.19,817.60 1279.88,817.60 C1276.58,817.60 1273.27,817.60 1269.97,817.60 C1266.66,817.60 1263.36,817.60 1260.05,817.60 C1256.75,817.60 1253.44,817.60 1250.14,817.60 C1246.83,817.60 1243.53,817.60 1240.22,817.60 C1236.92,817.60 1233.61,817.60 1230.31,817.60 C1227.00,817.60 1223.69,817.60 1220.39,817.60 C1217.08,817.60 1213.78,817.60 1210.47,817.60 C1207.17,817.60 1203.86,817.60 1200.56,817.60 C1197.25,817.60 1193.95,817.60 1190.64,817.60 C1187.34,817.60 1184.03,817.60 1180.73,817.60 C1177.42,817.60 1174.12,817.60 1170.81,817.60 C1167.51,817.60 1164.20,817.60 1160.90,817.60 C1157.59,817.60 1154.29,817.60 1150.98,817.60 C1147.68,817.60 1144.37,817.60 1141.07,817.60 C1137.76,817.60 1134.46,817.60 1131.15,817.60 C1127.85,817.60 1124.54,817.60 1121.24,817.60 C1117.93,817.60 1114.63,817.60 1111.32,817.60 C1108.02,817.60 1104.71,817.60 1101.41,817.60 C1098.10,817.60 1094.80,817.60 1091.49,817.60 C1088.19,817.60 1084.88,817.60 1081.58,817.60 C1078.27,817.60 1074.97,817.60 1071.66,817.60 C1068.36,817.60 1065.05,817.60 1061.75,817.60 C1058.44,817.60 1055.14,817.60 1051.83,817.60 C1048.53,817.60 1045.22,817.60 1041.92,817.60 C1038.61,817.60 1035.31,817.60 1032.00,817.60 Z" fill="#47d1d1" fill-opacity="0.4"/>
<path d="M1032.00,809.80 C1035.31,809.80 1038.61,809.80 1041.92,809.80 C1045.22,809.80 1048.53,809.80 1051.83,809.80 C1055.14,809.80 1058.44,809.80 1061.75,809.80 C1065.05,809.80 1068.36,809.80 1071.66,809.80 C1074.97,809.80 1078.27,809.80 1081.58,809.80 C1084.88,809.80 1088.19,809.80 1091.49,809.80 C1094.80,809.80 1098.10,809.80 1101.41,809.80 C1104.71,809.80 1108.02,809.80 1111.32,809.80 C1114.63,809.80 1117.93,809.80 1121.24,809.80 C1124.54,809.80 1127.85,809.80 1131.15,809.80 C1134.46,809.80 1137.76,809.80 1141.07,809.80 C1144.37,809.80 1147.68,809.80 1150.98,809.80 C1154.29,809.80 1157.59,809.80 1160.90,809.80 C1164.20,809.80 1167.51,809.80 1170.81,809.80 C1174.12,809.80 1177.42,809.80 1180.73,809.80 C1184.03,809.80 1187.34,809.80 1190.64,809.80 C1193.95,809.80 1197.25,809.80 1200.56,809.80 C1203.86,809.80 1207.17,809.80 1210.47,809.80 C1213.78,809.80 1217.08,809.80 1220.39,809.80 C1223.69,809.80 1227.00,809.80 1230.31,809.80 C1233.61,809.80 1236.92,809.80 1240.22,809.80 C1243.53,809.80 1246.83,809.80 1250.14,809.80 C1253.44,809.80 1256.75,809.80 1260.05,809.80 C1263.36,809.80 1266.66,809.80 1269.97,809.80 C1273.27,809.80 1276.58,809.80 1279.88,809.80 C1283.19,809.80 1286.49,809.80 1289.80,809.80 C1293.10,809.80 1296.41,809.80 1299.71,809.80 C1303.02,809.80 1306.32,809.80 1309.63,809.80 C1312.93,809.80 1316.24,809.80 1319.54,809.80 C1322.85,809.80 1326.15,809.80 1329.46,809.80 C1332.76,809.80 1336.07,809.80 1339.37,809.80 C1342.68,809.80 1345.98,809.80 1349.29,809.80 C1352.59,809.80 1355.90,809.80 1359.20,809.80 C1362.51,809.80 1365.81,809.80 1369.12,809.80 C1372.42,809.80 1375.73,809.80 1379.03,809.80 C1382.34,809.80 1385.64,809.80 1388.95,809.80 C1392.25,809.80 1395.56,809.80 1398.86,809.80 C1402.17,809.80 1405.47,809.80 1408.78,809.80 C1412.08,809.80 1415.39,809.80 1418.69,809.80 C1422.00,809.80 1425.31,809.80 1428.61,809.80 C1431.92,809.80 1435.22,809.80 1438.53,809.80 C1441.83,809.80 1445.14,809.80 1448.44,809.80 C1451.75,809.80 1455.05,809.80 1458.36,809.80 C1461.66,809.80 1464.97,809.80 1468.27,809.80 C1471.58,809.80 1474.88,809.80 1478.19,809.80 C1481.49,809.80 1484.80,809.80 1488.10,809.80 C1491.41,809.80 1494.71,809.80 1498.02,809.80 C1501.32,809.80 1504.63,809.80 1507.93,809.80 C1511.24,809.80 1514.54,807.10 1517.85,807.10 C1521.15,807.10 1524.46,807.10 1527.76,807.10 C1531.07,807.10 1534.37,807.10 1537.68,807.10 C1540.98,807.10 1544.29,807.10 1547.59,807.10 C1550.90,807.10 1554.20,807.10 1557.51,807.10 C1560.81,807.10 1564.12,807.10 1567.42,807.10 C1570.73,807.10 1574.03,807.10 1577.34,807.10 C1580.64,807.10 1583.95,807.10 1587.25,807.10 C1590.56,807.10 1593.86,807.10 1597.17,807.10 C1600.47,807.10 1603.78,807.10 1607.08,807.10 C1610.39,807.10 1613.69,807.10 1617.00,807.10 L1617.00,811.70 C1613.69,811.70 1610.39,811.70 1607.08,811.70 C1603.78,811.70 1600.47,811.70 1597.17,811.70 C1593.86,811.70 1590.56,811.70 1587.25,811.70 C1583.95,811.70 1580.64,811.70 1577.34,811.70 C1574.03,811.70 1570.73,811.70 1567.42,811.70 C1564.12,811.70 1560.81,811.70 1557.51,811.70 C1554.20,811.70 1550.90,811.70 1547.59,811.70 C1544.29,811.70 1540.98,811.70 1537.68,811.70 C1534.37,811.70 1531.07,811.70 1527.76,811.70 C1524.46,811.70 1521.15,811.70 1517.85,811.70 C1514.54,811.70 1511.24,814.20 1507.93,814.20 C1504.63,814.20 1501.32,814.20 1498.02,814.20 C1494.71,814.20 1491.41,814.20 1488.10,814.20 C1484.80,814.20 1481.49,814.20 1478.19,814.20 C1474.88,814.20 1471.58,814.20 1468.27,814.20 C1464.97,814.20 1461.66,814.20 1458.36,814.20 C1455.05,814.20 1451.75,814.20 1448.44,814.20 C1445.14,814.20 1441.83,814.20 1438.53,814.20 C1435.22,814.20 1431.92,814.20 1428.61,814.20 C1425.31,814.20 1422.00,814.20 1418.69,814.20 C1415.39,814.20 1412.08,814.20 1408.78,814.20 C1405.47,814.20 1402.17,814.20 1398.86,814.20 C1395.56,814.20 1392.25,814.20 1388.95,814.20 C1385.64,814.20 1382.34,814.20 1379.03,814.20 C1375.73,814.20 1372.42,814.20 1369.12,814.20 C1365.81,814.20 1362.51,814.20 1359.20,814.20 C1355.90,814.20 1352.59,814.20 1349.29,814.20 C1345.98,814.20 1342.68,814.20 1339.37,814.20 C1336.07,814.20 1332.76,814.20 1329.46,814.20 C1326.15,814.20 1322.85,814.20 1319.54,814.20 C1316.24,814.20 1312.93,814.20 1309.63,814.20 C1306.32,814.20 1303.02,814.20 1299.71,814.20 C1296.41,814.20 1293.10,814.20 1289.80,814.20 C1286.49,814.20 1283.19,814.20 1279.88,814.20 C1276.58,814.20 1273.27,814.20 1269.97,814.20 C1266.66,814.20 1263.36,814.20 1260.05,814.20 C1256.75,814.20 1253.44,814.20 1250.14,814.20 C1246.83,814.20 1243.53,814.20 1240.22,814.20 C1236.92,814.20 1233.61,814.20 1230.31,814.20 C1227.00,814.20 1223.69,814.20 1220.39,814.20 C1217.08,814.20 1213.78,814.20 1210.47,814.20 C1207.17,814.20 1203.86,814.20 1200.56,814.20 C1197.25,814.20 1193.95,814.20 1190.64,814.20 C1187.34,814.20 1184.03,814.20 1180.73,814.20 C1177.42,814.20 1174.12,814.20 1170.81,814.20 C1167.51,814.20 1164.20,814.20 1160.90,814.20 C1157.59,814.20 1154.29,814.20 1150.98,814.20 C1147.68,814.20 1144.37,814.20 1141.07,814.20 C1137.76,814.20 1134.46,814.20 1131.15,814.20 C1127.85,814.20 1124.54,814.20 1121.24,814.20 C1117.93,814.20 1114.63,814.20 1111.32,814.20 C1108.02,814.20 1104.71,814.20 1101.41,814.20 C1098.10,814.20 1094.80,814.20 1091.49,814.20 C1088.19,814.20 1084.88,814.20 1081.58,814.20 C1078.27,814.20 1074.97,814.20 1071.66,814.20 C1068.36,814.20 1065.05,814.20 1061.75,814.20 C1058.44,814.20 1055.14,814.20 1051.83,814.20 C1048.53,814.20 1045.22,814.20 1041.92,814.20 C1038.61,814.20 1035.31,814.20 1032.00,814.20 Z" fill="#47d16a" fill-opacity="0.4"/>
<path d="M1032.00,774.90 C1035.31,774.90 1038.61,774.90 1041.92,774.90 C1045.22,774.90 1048.53,774.90 1051.83,774.90 C1055.14,774.90 1058.44,774.90 1061.75,774.90 C1065.05,774.90 1068.36,774.90 1071.66,774.90 C1074.97,774.90 1078.27,774.90 1081.58,774.90 C1084.88,774.90 1088.19,774.90 1091.49,774.90 C1094.80,774.90 1098.10,774.90 1101.41,774.90 C1104.71,774.90 1108.02,774.90 1111.32,774.90 C1114.63,774.90 1117.93,774.90 1121.24,774.90 C1124.54,774.90 1127.85,774.90 1131.15,774.90 C1134.46,774.90 1137.76,774.90 1141.07,774.90 C1144.37,774.90 1147.68,774.90 1150.98,774.90 C1154.29,774.90 1157.59,774.90 1160.90,774.90 C1164.20,774.90 1167.51,774.90 1170.81,774.90 C1174.12,774.90 1177.42,774.90 1180.73,774.90 C1184.03,774.90 1187.34,774.90 1190.64,774.90 C1193.95,774.90 1197.25,774.90 1200.56,774.90 C1203.86,774.90 1207.17,774.90 1210.47,774.90 C1213.78,774.90 1217.08,774.90 1220.39,774.90 C1223.69,774.90 1227.00,774.90 1230.31,774.90 C1233.61,774.90 1236.92,774.90 1240.22,774.90 C1243.53,774.90 1246.83,774.90 1250.14,774.90 C1253.44,774.90 1256.75,774.90 1260.05,774.90 C1263.36,774.90 1266.66,774.90 1269.97,774.90 C1273.27,774.90 1276.58,774.90 1279.88,774.90 C1283.19,774.90 1286.49,774.90 1289.80,774.90 C1293.10,774.90 1296.41,774.90 1299.71,774.90 C1303.02,774.90 1306.32,774.90 1309.63,774.90 C1312.93,774.90 1316.24,774.90 1319.54,774.90 C1322.85,774.90 1326.15,774.90 1329.46,774.90 C1332.76,774.90 1336.07,774.90 1339.37,774.90 C1342.68,774.90 1345.98,774.90 1349.29,774.90 C1352.59,774.90 1355.90,774.90 1359.20,774.90 C1362.51,774.90 1365.81,774.90 1369.12,774.90 C1372.42,774.90 1375.73,774.90 1379.03,774.90 C1382.34,774.90 1385.64,774.90 1388.95,774.90 C1392.25,774.90 1395.56,774.90 1398.86,774.90 C1402.17,774.90 1405.47,774.90 1408.78,774.90 C1412.08,774.90 1415.39,774.90 1418.69,774.90 C1422.00,774.90 1425.31,774.90 1428.61,774.90 C1431.92,774.90 1435.22,774.90 1438.53,774.90 C1441.83,774.90 1445.14,774.90 1448.44,774.90 C1451.75,774.90 1455.05,774.90 1458.36,774.90 C1461.66,774.90 1464.97,774.90 1468.27,774.90 C1471.58,774.90 1474.88,774.90 1478.19,774.90 C1481.49,774.90 1484.80,774.90 1488.10,774.90 C1491.41,774.90 1494.71,774.90 1498.02,774.90 C1501.32,774.90 1504.63,774.90 1507.93,774.90 C1511.24,774.90 1514.54,771.40 1517.85,771.40 C1521.15,771.40 1524.46,771.40 1527.76,771.40 C1531.07,771.40 1534.37,771.40 1537.68,771.40 C1540.98,771.40 1544.29,771.40 1547.59,771.40 C1550.90,771.40 1554.20,771.40 1557.51,771.40 C1560.81,771.40 1564.12,771.40 1567.42,771.40 C1570.73,771.40 1574.03,771.40 1577.34,771.40 C1580.64,771.40 1583.95,771.40 1587.25,771.40 C1590.56,771.40 1593.86,771.40 1597.17,771.40 C1600.47,771.40 1603.78,771.40 1607.08,771.40 C1610.39,771.40 1613.69,771.40 1617.00,771.40 L1617.00,807.10 C1613.69,807.10 1610.39,807.10 1607.08,807.10 C1603.78,807.10 1600.47,807.10 1597.17,807.10 C1593.86,807.10 1590.56,807.10 1587.25,807.10 C1583.95,807.10 1580.64,807.10 1577.34,807.10 C1574.03,807.10 1570.73,807.10 1567.42,807.10 C1564.12,807.10 1560.81,807.10 1557.51,807.10 C1554.20,807.10 1550.90,807.10 1547.59,807.10 C1544.29,807.10 1540.98,807.10 1537.68,807.10 C1534.37,807.10 1531.07,807.10 1527.76,807.10 C1524.46,807.10 1521.15,807.10 1517.85,807.10 C1514.54,807.10 1511.24,809.80 1507.93,809.80 C1504.63,809.80 1501.32,809.80 1498.02,809.80 C1494.71,809.80 1491.41,809.80 1488.10,809.80 C1484.80,809.80 1481.49,809.80 1478.19,809.80 C1474.88,809.80 1471.58,809.80 1468.27,809.80 C1464.97,809.80 1461.66,809.80 1458.36,809.80 C1455.05,809.80 1451.75,809.80 1448.44,809.80 C1445.14,809.80 1441.83,809.80 1438.53,809.80 C1435.22,809.80 1431.92,809.80 1428.61,809.80 C1425.31,809.80 1422.00,809.80 1418.69,809.80 C1415.39,809.80 1412.08,809.80 1408.78,809.80 C1405.47,809.80 1402.17,809.80 1398.86,809.80 C1395.56,809.80 1392.25,809.80 1388.95,809.80 C1385.64,809.80 1382.34,809.80 1379.03,809.80 C1375.73,809.80 1372.42,809.80 1369.12,809.80 C1365.81,809.80 1362.51,809.80 1359.20,809.80 C1355.90,809.80 1352.59,809.80 1349.29,809.80 C1345.98,809.80 1342.68,809.80 1339.37,809.80 C1336.07,809.80 1332.76,809.80 1329.46,809.80 C1326.15,809.80 1322.85,809.80 1319.54,809.80 C1316.24,809.80 1312.93,809.80 1309.63,809.80 C1306.32,809.80 1303.02,809.80 1299.71,809.80 C1296.41,809.80 1293.10,809.80 1289.80,809.80 C1286.49,809.80 1283.19,809.80 1279.88,809.80 C1276.58,809.80 1273.27,809.80 1269.97,809.80 C1266.66,809.80 1263.36,809.80 1260.05,809.80 C1256.75,809.80 1253.44,809.80 1250.14,809.80 C1246.83,809.80 1243.53,809.80 1240.22,809.80 C1236.92,809.80 1233.61,809.80 1230.31,809.80 C1227.00,809.80 1223.69,809.80 1220.39,809.80 C1217.08,809.80 1213.78,809.80 1210.47,809.80 C1207.17,809.80 1203.86,809.80 1200.56,809.80 C1197.25,809.80 1193.95,809.80 1190.64,809.80 C1187.34,809.80 1184.03,809.80 1180.73,809.80 C1177.42,809.80 1174.12,809.80 1170.81,809.80 C1167.51,809.80 1164.20,809.80 1160.90,809.80 C1157.59,809.80 1154.29,809.80 1150.98,809.80 C1147.68,809.80 1144.37,809.80 1141.07,809.80 C1137.76,809.80 1134.46,809.80 1131.15,809.80 C1127.85,809.80 1124.54,809.80 1121.24,809.80 C1117.93,809.80 1114.63,809.80 1111.32,809.80 C1108.02,809.80 1104.71,809.80 1101.41,809.80 C1098.10,809.80 1094.80,809.80 1091.49,809.80 C1088.19,809.80 1084.88,809.80 1081.58,809.80 C1078.27,809.80 1074.97,809.80 1071.66,809.80 C1068.36,809.80 1065.05,809.80 1061.75,809.80 C1058.44,809.80 1055.14,809.80 1051.83,809.80 C1048.53,809.80 1045.22,809.80 1041.92,809.80 C1038.61,809.80 1035.31,809.80 1032.00,809.80 Z" fill="#8cd147" fill-opacity="0.4"/>
<path d="M1032.00,726.60 C1035.31,726.60 1038.61,726.60 1041.92,726.60 C1045.22,726.60 1048.53,726.60 1051.83,726.60 C1055.14,726.60 1058.44,726.60 1061.75,726.60 C1065.05,726.60 1068.36,726.60 1071.66,726.60 C1074.97,726.60 1078.27,726.60 1081.58,726.60 C1084.88,726.60 1088.19,726.60 1091.49,726.60 C1094.80,726.60 1098.10,726.60 1101.41,726.60 C1104.71,726.60 1108.02,726.60 1111.32,726.60 C1114.63,726.60 1117.93,726.60 1121.24,726.60 C1124.54,726.60 1127.85,726.60 1131.15,726.60 C1134.46,726.60 1137.76,726.60 1141.07,726.60 C1144.37,726.60 1147.68,726.60 1150.98,726.60 C1154.29,726.60 1157.59,726.60 1160.90,726.60 C1164.20,726.60 1167.51,726.60 1170.81,726.60 C1174.12,726.60 1177.42,726.60 1180.73,726.60 C1184.03,726.60 1187.34,726.60 1190.64,726.60 C1193.95,726.60 1197.25,726.60 1200.56,726.60 C1203.86,726.60 1207.17,726.60 1210.47,726.60 C1213.78,726.60 1217.08,726.60 1220.39,726.60 C1223.69,726.60 1227.00,726.60 1230.31,726.60 C1233.61,726.60 1236.92,726.60 1240.22,726.60 C1243.53,726.60 1246.83,726.60 1250.14,726.60 C1253.44,726.60 1256.75,726.60 1260.05,726.60 C1263.36,726.60 1266.66,726.60 1269.97,726.60 C1273.27,726.60 1276.58,726.60 1279.88,726.60 C1283.19,726.60 1286.49,726.60 1289.80,726.60 C1293.10,726.60 1296.41,726.60 1299.71,726.60 C1303.02,726.60 1306.32,726.60 1309.63,726.60 C1312.93,726.60 1316.24,726.60 1319.54,726.60 C1322.85,726.60 1326.15,726.60 1329.46,726.60 C1332.76,726.60 1336.07,726.60 1339.37,726.60 C1342.68,726.60 1345.98,726.60 1349.29,726.60 C1352.59,726.60 1355.90,726.60 1359.20,726.60 C1362.51,726.60 1365.81,726.60 1369.12,726.60 C1372.42,726.60 1375.73,726.60 1379.03,726.60 C1382.34,726.60 1385.64,726.60 1388.95,726.60 C1392.25,726.60 1395.56,726.60 1398.86,726.60 C1402.17,726.60 1405.47,726.60 1408.78,726.60 C1412.08,726.60 1415.39,726.60 1418.69,726.60 C1422.00,726.60 1425.31,726.60 1428.61,726.60 C1431.92,726.60 1435.22,726.60 1438.53,726.60 C1441.83,726.60 1445.14,726.60 1448.44,726.60 C1451.75,726.60 1455.05,726.60 1458.36,726.60 C1461.66,726.60 1464.97,726.60 1468.27,726.60 C1471.58,726.60 1474.88,726.60 1478.19,726.60 C1481.49,726.60 1484.80,726.60 1488.10,726.60 C1491.41,726.60 1494.71,726.60 1498.02,726.60 C1501.32,726.60 1504.63,726.60 1507.93,726.60 C1511.24,726.60 1514.54,723.90 1517.85,723.90 C1521.15,723.90 1524.46,723.90 1527.76,723.90 C1531.07,723.90 1534.37,723.90 1537.68,723.90 C1540.98,723.90 1544.29,723.90 1547.59,723.90 C1550.90,723.90 1554.20,723.90 1557.51,723.90 C1560.81,723.90 1564.12,723.90 1567.42,723.90 C1570.73,723.90 1574.03,723.90 1577.34,723.90 C1580.64,723.90 1583.95,723.90 1587.25,723.90 C1590.56,723.90 1593.86,723.90 1597.17,723.90 C1600.47,723.90 1603.78,723.90 1607.08,723.90 C1610.39,723.90 1613.69,723.90 1617.00,723.90 L1617.00,771.40 C1613.69,771.40 1610.39,771.40 1607.08,771.40 C1603.78,771.40 1600.47,771.40 1597.17,771.40 C1593.86,771.40 1590.56,771.40 1587.25,771.40 C1583.95,771.40 1580.64,771.40 1577.34,771.40 C1574.03,771.40 1570.73,771.40 1567.42,771.40 C1564.12,771.40 1560.81,771.40 1557.51,771.40 C1554.20,771.40 1550.90,771.40 1547.59,771.40 C1544.29,771.40 1540.98,771.40 1537.68,771.40 C1534.37,771.40 1531.07,771.40 1527.76,771.40 C1524.46,771.40 1521.15,771.40 1517.85,771.40 C1514.54,771.40 1511.24,774.90 1507.93,774.90 C1504.63,774.90 1501.32,774.90 1498.02,774.90 C1494.71,774.90 1491.41,774.90 1488.10,774.90 C1484.80,774.90 1481.49,774.90 1478.19,774.90 C1474.88,774.90 1471.58,774.90 1468.27,774.90 C1464.97,774.90 1461.66,774.90 1458.36,774.90 C1455.05,774.90 1451.75,774.90 1448.44,774.90 C1445.14,774.90 1441.83,774.90 1438.53,774.90 C1435.22,774.90 1431.92,774.90 1428.61,774.90 C1425.31,774.90 1422.00,774.90 1418.69,774.90 C1415.39,774.90 1412.08,774.90 1408.78,774.90 C1405.47,774.90 1402.17,774.90 1398.86,774.90 C1395.56,774.90 1392.25,774.90 1388.95,774.90 C1385.64,774.90 1382.34,774.90 1379.03,774.90 C1375.73,774.90 1372.42,774.90 1369.12,774.90 C1365.81,774.90 1362.51,774.90 1359.20,774.90 C1355.90,774.90 1352.59,774.90 1349.29,774.90 C1345.98,774.90 1342.68,774.90 1339.37,774.90 C1336.07,774.90 1332.76,774.90 1329.46,774.90 C1326.15,774.90 1322.85,774.90 1319.54,774.90 C1316.24,774.90 1312.93,774.90 1309.63,774.90 C1306.32,774.90 1303.02,774.90 1299.71,774.90 C1296.41,774.90 1293.10,774.90 1289.80,774.90 C1286.49,774.90 1283.19,774.90 1279.88,774.90 C1276.58,774.90 1273.27,774.90 1269.97,774.90 C1266.66,774.90 1263.36,774.90 1260.05,774.90 C1256.75,774.90 1253.44,774.90 1250.14,774.90 C1246.83,774.90 1243.53,774.90 1240.22,774.90 C1236.92,774.90 1233.61,774.90 1230.31,774.90 C1227.00,774.90 1223.69,774.90 1220.39,774.90 C1217.08,774.90 1213.78,774.90 1210.47,774.90 C1207.17,774.90 1203.86,774.90 1200.56,774.90 C1197.25,774.90 1193.95,774.90 1190.64,774.90 C1187.34,774.90 1184.03,774.90 1180.73,774.90 C1177.42,774.90 1174.12,774.90 1170.81,774.90 C1167.51,774.90 1164.20,774.90 1160.90,774.90 C1157.59,774.90 1154.29,774.90 1150.98,774.90 C1147.68,774.90 1144.37,774.90 1141.07,774.90 C1137.76,774.90 1134.46,774.90 1131.15,774.90 C1127.85,774.90 1124.54,774.90 1121.24,774.90 C1117.93,774.90 1114.63,774.90 1111.32,774.90 C1108.02,774.90 1104.71,774.90 1101.41,774.90 C1098.10,774.90 1094.80,774.90 1091.49,774.90 C1088.19,774.90 1084.88,774.90 1081.58,774.90 C1078.27,774.90 1074.97,774.90 1071.66,774.90 C1068.36,774.90 1065.05,774.90 1061.75,774.90 C1058.44,774.90 1055.14,774.90 1051.83,774.90 C1048.53,774.90 1045.22,774.90 1041.92,774.90 C1038.61,774.90 1035.31,774.90 1032.00,774.90 Z" fill="#d1ac47" fill-opacity="0.4"/>
<path d="M1032.00,674.30 C1035.31,674.30 1038.61,674.30 1041.92,674.30 C1045.22,674.30 1048.53,674.30 1051.83,674.30 C1055.14,674.30 1058.44,674.30 1061.75,674.30 C1065.05,674.30 1068.36,674.30 1071.66,674.30 C1074.97,674.30 1078.27,674.30 1081.58,674.30 C1084.88,674.30 1088.19,674.30 1091.49,674.30 C1094.80,674.30 1098.10,674.30 1101.41,674.30 C1104.71,674.30 1108.02,674.30 1111.32,674.30 C1114.63,674.30 1117.93,674.30 1121.24,674.30 C1124.54,674.30 1127.85,674.30 1131.15,674.30 C1134.46,674.30 1137.76,674.30 1141.07,674.30 C1144.37,674.30 1147.68,674.30 1150.98,674.30 C1154.29,674.30 1157.59,674.30 1160.90,674.30 C1164.20,674.30 1167.51,674.30 1170.81,674.30 C1174.12,674.30 1177.42,674.30 1180.73,674.30 C1184.03,674.30 1187.34,674.30 1190.64,674.30 C1193.95,674.30 1197.25,674.30 1200.56,674.30 C1203.86,674.30 1207.17,674.30 1210.47,674.30 C1213.78,674.30 1217.08,674.30 1220.39,674.30 C1223.69,674.30 1227.00,674.30 1230.31,674.30 C1233.61,674.30 1236.92,674.30 1240.22,674.30 C1243.53,674.30 1246.83,674.30 1250.14,674.30 C1253.44,674.30 1256.75,674.30 1260.05,674.30 C1263.36,674.30 1266.66,674.30 1269.97,674.30 C1273.27,674.30 1276.58,674.30 1279.88,674.30 C1283.19,674.30 1286.49,674.30 1289.80,674.30 C1293.10,674.30 1296.41,674.30 1299.71,674.30 C1303.02,674.30 1306.32,674.30 1309.63,674.30 C1312.93,674.30 1316.24,674.30 1319.54,674.30 C1322.85,674.30 1326.15,674.30 1329.46,674.30 C1332.76,674.30 1336.07,674.30 1339.37,674.30 C1342.68,674.30 1345.98,674.30 1349.29,674.30 C1352.59,674.30 1355.90,674.30 1359.20,674.30 C1362.51,674.30 1365.81,674.30 1369.12,674.30 C1372.42,674.30 1375.73,674.30 1379.03,674.30 C1382.34,674.30 1385.64,674.30 1388.95,674.30 C1392.25,674.30 1395.56,674.30 1398.86,674.30 C1402.17,674.30 1405.47,674.30 1408.78,674.30 C1412.08,674.30 1415.39,674.30 1418.69,674.30 C1422.00,674.30 1425.31,674.30 1428.61,674.30 C1431.92,674.30 1435.22,674.30 1438.53,674.30 C1441.83,674.30 1445.14,674.30 1448.44,674.30 C1451.75,674.30 1455.05,674.30 1458.36,674.30 C1461.66,674.30 1464.97,674.30 1468.27,674.30 C1471.58,674.30 1474.88,674.30 1478.19,674.30 C1481.49,674.30 1484.80,674.30 1488.10,674.30 C1491.41,674.30 1494.71,674.30 1498.02,674.30 C1501.32,674.30 1504.63,674.30 1507.93,674.30 C1511.24,674.30 1514.54,671.20 1517.85,671.20 C1521.15,671.20 1524.46,671.20 1527.76,671.20 C1531.07,671.20 1534.37,671.20 1537.68,671.20 C1540.98,671.20 1544.29,671.20 1547.59,671.20 C1550.90,671.20 1554.20,671.20 1557.51,671.20 C1560.81,671.20 1564.12,671.20 1567.42,671.20 C1570.73,671.20 1574.03,671.20 1577.34,671.20 C1580.64,671.20 1583.95,671.20 1587.25,671.20 C1590.56,671.20 1593.86,671.20 1597.17,671.20 C1600.47,671.20 1603.78,671.20 1607.08,671.20 C1610.39,671.20 1613.69,671.20 1617.00,671.20 L1617.00,723.90 C1613.69,723.90 1610.39,723.90 1607.08,723.90 C1603.78,723.90 1600.47,723.90 1597.17,723.90 C1593.86,723.90 1590.56,723.90 1587.25,723.90 C1583.95,723.90 1580.64,723.90 1577.34,723.90 C1574.03,723.90 1570.73,723.90 1567.42,723.90 C1564.12,723.90 1560.81,723.90 1557.51,723.90 C1554.20,723.90 1550.90,723.90 1547.59,723.90 C1544.29,723.90 1540.98,723.90 1537.68,723.90 C1534.37,723.90 1531.07,723.90 1527.76,723.90 C1524.46,723.90 1521.15,723.90 1517.85,723.90 C1514.54,723.90 1511.24,726.60 1507.93,726.60 C1504.63,726.60 1501.32,726.60 1498.02,726.60 C1494.71,726.60 1491.41,726.60 1488.10,726.60 C1484.80,726.60 1481.49,726.60 1478.19,726.60 C1474.88,726.60 1471.58,726.60 1468.27,726.60 C1464.97,726.60 1461.66,726.60 1458.36,726.60 C1455.05,726.60 1451.75,726.60 1448.44,726.60 C1445.14,726.60 1441.83,726.60 1438.53,726.60 C1435.22,726.60 1431.92,726.60 1428.61,726.60 C1425.31,726.60 1422.00,726.60 1418.69,726.60 C1415.39,726.60 1412.08,726.60 1408.78,726.60 C1405.47,726.60 1402.17,726.60 1398.86,726.60 C1395.56,726.60 1392.25,726.60 1388.95,726.60 C1385.64,726.60 1382.34,726.60 1379.03,726.60 C1375.73,726.60 1372.42,726.60 1369.12,726.60 C1365.81,726.60 1362.51,726.60 1359.20,726.60 C1355.90,726.60 1352.59,726.60 1349.29,726.60 C1345.98,726.60 1342.68,726.60 1339.37,726.60 C1336.07,726.60 1332.76,726.60 1329.46,726.60 C1326.15,726.60 1322.85,726.60 1319.54,726.60 C1316.24,726.60 1312.93,726.60 1309.63,726.60 C1306.32,726.60 1303.02,726.60 1299.71,726.60 C1296.41,726.60 1293.10,726.60 1289.80,726.60 C1286.49,726.60 1283.19,726.60 1279.88,726.60 C1276.58,726.60 1273.27,726.60 1269.97,726.60 C1266.66,726.60 1263.36,726.60 1260.05,726.60 C1256.75,726.60 1253.44,726.60 1250.14,726.60 C1246.83,726.60 1243.53,726.60 1240.22,726.60 C1236.92,726.60 1233.61,726.60 1230.31,726.60 C1227.00,726.60 1223.69,726.60 1220.39,726.60 C1217.08,726.60 1213.78,726.60 1210.47,726.60 C1207.17,726.60 1203.86,726.60 1200.56,726.60 C1197.25,726.60 1193.95,726.60 1190.64,726.60 C1187.34,726.60 1184.03,726.60 1180.73,726.60 C1177.42,726.60 1174.12,726.60 1170.81,726.60 C1167.51,726.60 1164.20,726.60 1160.90,726.60 C1157.59,726.60 1154.29,726.60 1150.98,726.60 C1147.68,726.60 1144.37,726.60 1141.07,726.60 C1137.76,726.60 1134.46,726.60 1131.15,726.60 C1127.85,726.60 1124.54,726.60 1121.24,726.60 C1117.93,726.60 1114.63,726.60 1111.32,726.60 C1108.02,726.60 1104.71,726.60 1101.41,726.60 C1098.10,726.60 1094.80,726.60 1091.49,726.60 C1088.19,726.60 1084.88,726.60 1081.58,726.60 C1078.27,726.60 1074.97,726.60 1071.66,726.60 C1068.36,726.60 1065.05,726.60 1061.75,726.60 C1058.44,726.60 1055.14,726.60 1051.83,726.60 C1048.53,726.60 1045.22,726.60 1041.92,726.60 C1038.61,726.60 1035.31,726.60 1032.00,726.60 Z" fill="#d14747" fill-opacity="0.4"/>
<path d="M1032.00,818.10 C1035.31,818.10 1038.61,818.10 1041.92,818.10 C1045.22,818.10 1048.53,818.10 1051.83,818.10 C1055.14,818.10 1058.44,818.10 1061.75,818.10 C1065.05,818.10 1068.36,818.10 1071.66,818.10 C1074.97,818.10 1078.27,818.10 1081.58,818.10 C1084.88,818.10 1088.19,818.10 1091.49,818.10 C1094.80,818.10 1098.10,818.10 1101.41,818.10 C1104.71,818.10 1108.02,818.10 1111.32,818.10 C1114.63,818.10 1117.93,818.10 1121.24,818.10 C1124.54,818.10 1127.85,818.10 1131.15,818.10 C1134.46,818.10 1137.76,818.10 1141.07,818.10 C1144.37,818.10 1147.68,818.10 1150.98,818.10 C1154.29,818.10 1157.59,818.10 1160.90,818.10 C1164.20,818.10 1167.51,818.10 1170.81,818.10 C1174.12,818.10 1177.42,818.10 1180.73,818.10 C1184.03,818.10 1187.34,818.10 1190.64,818.10 C1193.95,818.10 1197.25,818.10 1200.56,818.10 C1203.86,818.10 1207.17,818.10 1210.47,818.10 C1213.78,818.10 1217.08,818.10 1220.39,818.10 C1223.69,818.10 1227.00,818.10 1230.31,818.10 C1233.61,818.10 1236.92,818.10 1240.22,818.10 C1243.53,818.10 1246.83,818.10 1250.14,818.10 C1253.44,818.10 1256.75,818.10 1260.05,818.10 C1263.36,818.10 1266.66,818.10 1269.97,818.10 C1273.27,818.10 1276.58,818.10 1279.88,818.10 C1283.19,818.10 1286.49,818.10 1289.80,818.10 C1293.10,818.10 1296.41,818.10 1299.71,818.10 C1303.02,818.10 1306.32,818.10 1309.63,818.10 C1312.93,818.10 1316.24,818.10 1319.54,818.10 C1322.85,818.10 1326.15,818.10 1329.46,818.10 C1332.76,818.10 1336.07,818.10 1339.37,818.10 C1342.68,818.10 1345.98,818.10 1349.29,818.10 C1352.59,818.10 1355.90,818.10 1359.20,818.10 C1362.51,818.10 1365.81,818.10 1369.12,818.10 C1372.42,818.10 1375.73,818.10 1379.03,818.10 C1382.34,818.10 1385.64,818.10 1388.95,818.10 C1392.25,818.10 1395.56,818.10 1398.86,818.10 C1402.17,818.10 1405.47,818.10 1408.78,818.10 C1412.08,818.10 1415.39,818.10 1418.69,818.10 C1422.00,818.10 1425.31,818.10 1428.61,818.10 C1431.92,818.10 1435.22,818.10 1438.53,818.10 C1441.83,818.10 1445.14,818.10 1448.44,818.10 C1451.75,818.10 1455.05,818.10 1458.36,818.10 C1461.66,818.10 1464.97,818.10 1468.27,818.10 C1471.58,818.10 1474.88,818.10 1478.19,818.10 C1481.49,818.10 1484.80,818.10 1488.10,818.10 C1491.41,818.10 1494.71,818.10 1498.02,818.10 C1501.32,818.10 1504.63,818.10 1507.93,818.10 C1511.24,818.10 1514.54,817.60 1517.85,817.60 C1521.15,817.60 1524.46,817.60 1527.76,817.60 C1531.07,817.60 1534.37,817.60 1537.68,817.60 C1540.98,817.60 1544.29,817.60 1547.59,817.60 C1550.90,817.60 1554.20,817.60 1557.51,817.60 C1560.81,817.60 1564.12,817.60 1567.42,817.60 C1570.73,817.60 1574.03,817.60 1577.34,817.60 C1580.64,817.60 1583.95,817.60 1587.25,817.60 C1590.56,817.60 1593.86,817.60 1597.17,817.60 C1600.47,817.60 1603.78,817.60 1607.08,817.60 C1610.39,817.60 1613.69,817.60 1617.00,817.60" fill="none" stroke="#d147d1" stroke-width="1"/>
<path d="M1032.00,817.60 C1035.31,817.60 1038.61,817.60 1041.92,817.60 C1045.22,817.60 1048.53,817.60 1051.83,817.60 C1055.14,817.60 1058.44,817.60 1061.75,817.60 C1065.05,817.60 1068.36,817.60 1071.66,817.60 C1074.97,817.60 1078.27,817.60 1081.58,817.60 C1084.88,817.60 1088.19,817.60 1091.49,817.60 C1094.80,817.60 1098.10,817.60 1101.41,817.60 C1104.71,817.60 1108.02,817.60 1111.32,817.60 C1114.63,817.60 1117.93,817.60 1121.24,817.60 C1124.54,817.60 1127.85,817.60 1131.15,817.60 C1134.46,817.60 1137.76,817.60 1141.07,817.60 C1144.37,817.60 1147.68,817.60 1150.98,817.60 C1154.29,817.60 1157.59,817.60 1160.90,817.60 C1164.20,817.60 1167.51,817.60 1170.81,817.60 C1174.12,817.60 1177.42,817.60 1180.73,817.60 C1184.03,817.60 1187.34,817.60 1190.64,817.60 C1193.95,817.60 1197.25,817.60 1200.56,817.60 C1203.86,817.60 1207.17,817.60 1210.47,817.60 C1213.78,817.60 1217.08,817.60 1220.39,817.60 C1223.69,817.60 1227.00,817.60 1230.31,817.60 C1233.61,817.60 1236.92,817.60 1240.22,817.60 C1243.53,817.60 1246.83,817.60 1250.14,817.60 C1253.44,817.60 1256.75,817.60 1260.05,817.60 C1263.36,817.60 1266.66,817.60 1269.97,817.60 C1273.27,817.60 1276.58,817.60 1279.88,817.60 C1283.19,817.60 1286.49,817.60 1289.80,817.60 C1293.10,817.60 1296.41,817.60 1299.71,817.60 C1303.02,817.60 1306.32,817.60 1309.63,817.60 C1312.93,817.60 1316.24,817.60 1319.54,817.60 C1322.85,817.60 1326.15,817.60 1329.46,817.60 C1332.76,817.60 1336.07,817.60 1339.37,817.60 C1342.68,817.60 1345.98,817.60 1349.29,817.60 C1352.59,817.60 1355.90,817.60 1359.20,817.60 C1362.51,817.60 1365.81,817.60 1369.12,817.60 C1372.42,817.60 1375.73,817.60 1379.03,817.60 C1382.34,817.60 1385.64,817.60 1388.95,817.60 C1392.25,817.60 1395.56,817.60 1398.86,817.60 C1402.17,817.60 1405.47,817.60 1408.78,817.60 C1412.08,817.60 1415.39,817.60 1418.69,817.60 C1422.00,817.60 1425.31,817.60 1428.61,817.60 C1431.92,817.60 1435.22,817.60 1438.53,817.60 C1441.83,817.60 1445.14,817.60 1448.44,817.60 C1451.75,817.60 1455.05,817.60 1458.36,817.60 C1461.66,817.60 1464.97,817.60 1468.27,817.60 C1471.58,817.60 1474.88,817.60 1478.19,817.60 C1481.49,817.60 1484.80,817.60 1488.10,817.60 C1491.41,817.60 1494.71,817.60 1498.02,817.60 C1501.32,817.60 1504.63,817.60 1507.93,817.60 C1511.24,817.60 1514.54,815.70 1517.85,815.70 C1521.15,815.70 1524.46,815.70 1527.76,815.70 C1531.07,815.70 1534.37,815.70 1537.68,815.70 C1540.98,815.70 1544.29,815.70 1547.59,815.70 C1550.90,815.70 1554.20,815.70 1557.51,815.70 C1560.81,815.70 1564.12,815.70 1567.42,815.70 C1570.73,815.70 1574.03,815.70 1577.34,815.70 C1580.64,815.70 1583.95,815.70 1587.25,815.70 C1590.56,815.70 1593.86,815.70 1597.17,815.70 C1600.47,815.70 1603.78,815.70 1607.08,815.70 C1610.39,815.70 1613.69,815.70 1617.00,815.70" fill="none" stroke="#476ad1" stroke-width="1"/>
<path d="M1032.00,814.20 C1035.31,814.20 1038.61,814.20 1041.92,814.20 C1045.22,814.20 1048.53,814.20 1051.83,814.20 C1055.14,814.20 1058.44,814.20 1061.75,814.20 C1065.05,814.20 1068.36,814.20 1071.66,814.20 C1074.97,814.20 1078.27,814.20 1081.58,814.20 C1084.88,814.20 1088.19,814.20 1091.49,814.20 C1094.80,814.20 1098.10,814.20 1101.41,814.20 C1104.71,814.20 1108.02,814.20 1111.32,814.20 C1114.63,814.20 1117.93,814.20 1121.24,814.20 C1124.54,814.20 1127.85,814.20 1131.15,814.20 C1134.46,814.20 1137.76,814.20 1141.07,814.20 C1144.37,814.20 1147.68,814.20 1150.98,814.20 C1154.29,814.20 1157.59,814.20 1160.90,814.20 C1164.20,814.20 1167.51,814.20 1170.81,814.20 C1174.12,814.20 1177.42,814.20 1180.73,814.20 C1184.03,814.20 1187.34,814.20 1190.64,814.20 C1193.95,814.20 1197.25,814.20 1200.56,814.20 C1203.86,814.20 1207.17,814.20 1210.47,814.20 C1213.78,814.20 1217.08,814.20 1220.39,814.20 C1223.69,814.20 1227.00,814.20 1230.31,814.20 C1233.61,814.20 1236.92,814.20 1240.22,814.20 C1243.53,814.20 1246.83,814.20 1250.14,814.20 C1253.44,814.20 1256.75,814.20 1260.05,814.20 C1263.36,814.20 1266.66,814.20 1269.97,814.20 C1273.27,814.20 1276.58,814.20 1279.88,814.20 C1283.19,814.20 1286.49,814.20 1289.80,814.20 C1293.10,814.20 1296.41,814.20 1299.71,814.20 C1303.02,814.20 1306.32,814.20 1309.63,814.20 C1312.93,814.20 1316.24,814.20 1319.54,814.20 C1322.85,814.20 1326.15,814.20 1329.46,814.20 C1332.76,814.20 1336.07,814.20 1339.37,814.20 C1342.68,814.20 1345.98,814.20 1349.29,814.20 C1352.59,814.20 1355.90,814.20 1359.20,814.20 C1362.51,814.20 1365.81,814.20 1369.12,814.20 C1372.42,814.20 1375.73,814.20 1379.03,814.20 C1382.34,814.20 1385.64,814.20 1388.95,814.20 C1392.25,814.20 1395.56,814.20 1398.86,814.20 C1402.17,814.20 1405.47,814.20 1408.78,814.20 C1412.08,814.20 1415.39,814.20 1418.69,814.20 C1422.00,814.20 1425.31,814.20 1428.61,814.20 C1431.92,814.20 1435.22,814.20 1438.53,814.20 C1441.83,814.20 1445.14,814.20 1448.44,814.20 C1451.75,814.20 1455.05,814.20 1458.36,814.20 C1461.66,814.20 1464.97,814.20 1468.27,814.20 C1471.58,814.20 1474.88,814.20 1478.19,814.20 C1481.49,814.20 1484.80,814.20 1488.10,814.20 C1491.41,814.20 1494.71,814.20 1498.02,814.20 C1501.32,814.20 1504.63,814.20 1507.93,814.20 C1511.24,814.20 1514.54,811.70 1517.85,811.70 C1521.15,811.70 1524.46,811.70 1527.76,811.70 C1531.07,811.70 1534.37,811.70 1537.68,811.70 C1540.98,811.70 1544.29,811.70 1547.59,811.70 C1550.90,811.70 1554.20,811.70 1557.51,811.70 C1560.81,811.70 1564.12,811.70 1567.42,811.70 C1570.73,811.70 1574.03,811.70 1577.34,811.70 C1580.64,811.70 1583.95,811.70 1587.25,811.70 C1590.56,811.70 1593.86,811.70 1597.17,811.70 C1600.47,811.70 1603.78,811.70 1607.08,811.70 C1610.39,811.70 1613.69,811.70 1617.00,811.70" fill="none" stroke="#47d1d1" stroke-width="1"/>
<path d="M1032.00,809.80 C1035.31,809.80 1038.61,809.80 1041.92,809.80 C1045.22,809.80 1048.53,809.80 1051.83,809.80 C1055.14,809.80 1058.44,809.80 1061.75,809.80 C1065.05,809.80 1068.36,809.80 1071.66,809.80 C1074.97,809.80 1078.27,809.80 1081.58,809.80 C1084.88,809.80 1088.19,809.80 1091.49,809.80 C1094.80,809.80 1098.10,809.80 1101.41,809.80 C1104.71,809.80 1108.02,809.80 1111.32,809.80 C1114.63,809.80 1117.93,809.80 1121.24,809.80 C1124.54,809.80 1127.85,809.80 1131.15,809.80 C1134.46,809.80 1137.76,809.80 1141.07,809.80 C1144.37,809.80 1147.68,809.80 1150.98,809.80 C1154.29,809.80 1157.59,809.80 1160.90,809.80 C1164.20,809.80 1167.51,809.80 1170.81,809.80 C1174.12,809.80 1177.42,809.80 1180.73,809.80 C1184.03,809.80 1187.34,809.80 1190.64,809.80 C1193.95,809.80 1197.25,809.80 1200.56,809.80 C1203.86,809.80 1207.17,809.80 1210.47,809.80 C1213.78,809.80 1217.08,809.80 1220.39,809.80 C1223.69,809.80 1227.00,809.80 1230.31,809.80 C1233.61,809.80 1236.92,809.80 1240.22,809.80 C1243.53,809.80 1246.83,809.80 1250.14,809.80 C1253.44,809.80 1256.75,809.80 1260.05,809.80 C1263.36,809.80 1266.66,809.80 1269.97,809.80 C1273.27,809.80 1276.58,809.80 1279.88,809.80 C1283.19,809.80 1286.49,809.80 1289.80,809.80 C1293.10,809.80 1296.41,809.80 1299.71,809.80 C1303.02,809.80 1306.32,809.80 1309.63,809.80 C1312.93,809.80 1316.24,809.80 1319.54,809.80 C1322.85,809.80 1326.15,809.80 1329.46,809.80 C1332.76,809.80 1336.07,809.80 1339.37,809.80 C1342.68,809.80 1345.98,809.80 1349.29,809.80 C1352.59,809.80 1355.90,809.80 1359.20,809.80 C1362.51,809.80 1365.81,809.80 1369.12,809.80 C1372.42,809.80 1375.73,809.80 1379.03,809.80 C1382.34,809.80 1385.64,809.80 1388.95,809.80 C1392.25,809.80 1395.56,809.80 1398.86,809.80 C1402.17,809.80 1405.47,809.80 1408.78,809.80 C1412.08,809.80 1415.39,809.80 1418.69,809.80 C1422.00,809.80 1425.31,809.80 1428.61,809.80 C1431.92,809.80 1435.22,809.80 1438.53,809.80 C1441.83,809.80 1445.14,809.80 1448.44,809.80 C1451.75,809.80 1455.05,809.80 1458.36,809.80 C1461.66,809.80 1464.97,809.80 1468.27,809.80 C1471.58,809.80 1474.88,809.80 1478.19,809.80 C1481.49,809.80 1484.80,809.80 1488.10,809.80 C1491.41,809.80 1494.71,809.80 1498.02,809.80 C1501.32,809.80 1504.63,809.80 1507.93,809.80 C1511.24,809.80 1514.54,807.10 1517.85,807.10 C1521.15,807.10 1524.46,807.10 1527.76,807.10 C1531.07,807.10 1534.37,807.10 1537.68,807.10 C1540.98,807.10 1544.29,807.10 1547.59,807.10 C1550.90,807.10 1554.20,807.10 1557.51,807.10 C1560.81,807.10 1564.12,807.10 1567.42,807.10 C1570.73,807.10 1574.03,807.10 1577.34,807.10 C1580.64,807.10 1583.95,807.10 1587.25,807.10 C1590.56,807.10 1593.86,807.10 1597.17,807.10 C1600.47,807.10 1603.78,807.10 1607.08,807.10 C1610.39,807.10 1613.69,807.10 1617.00,807.10" fill="none" stroke="#47d16a" stroke-width="1"/>
<path d="M1032.00,774.90 C1035.31,774.90 1038.61,774.90 1041.92,774.90 C1045.22,774.90 1048.53,774.90 1051.83,774.90 C1055.14,774.90 1058.44,774.90 1061.75,774.90 C1065.05,774.90 1068.36,774.90 1071.66,774.90 C1074.97,774.90 1078.27,774.90 1081.58,774.90 C1084.88,774.90 1088.19,774.90 1091.49,774.90 C1094.80,774.90 1098.10,774.90 1101.41,774.90 C1104.71,774.90 1108.02,774.90 1111.32,774.90 C1114.63,774.90 1117.93,774.90 1121.24,774.90 C1124.54,774.90 1127.85,774.90 1131.15,774.90 C1134.46,774.90 1137.76,774.90 1141.07,774.90 C1144.37,774.90 1147.68,774.90 1150.98,774.90 C1154.29,774.90 1157.59,774.90 1160.90,774.90 C1164.20,774.90 1167.51,774.90 1170.81,774.90 C1174.12,774.90 1177.42,774.90 1180.73,774.90 C1184.03,774.90 1187.34,774.90 1190.64,774.90 C1193.95,774.90 1197.25,774.90 1200.56,774.90 C1203.86,774.90 1207.17,774.90 1210.47,774.90 C1213.78,774.90 1217.08,774.90 1220.39,774.90 C1223.69,774.90 1227.00,774.90 1230.31,774.90 C1233.61,774.90 1236.92,774.90 1240.22,774.90 C1243.53,774.90 1246.83,774.90 1250.14,774.90 C1253.44,774.90 1256.75,774.90 1260.05,774.90 C1263.36,774.90 1266.66,774.90 1269.97,774.90 C1273.27,774.90 1276.58,774.90 1279.88,774.90 C1283.19,774.90 1286.49,774.90 1289.80,774.90 C1293.10,774.90 1296.41,774.90 1299.71,774.90 C1303.02,774.90 1306.32,774.90 1309.63,774.90 C1312.93,774.90 1316.24,774.90 1319.54,774.90 C1322.85,774.90 1326.15,774.90 1329.46,774.90 C1332.76,774.90 1336.07,774.90 1339.37,774.90 C1342.68,774.90 1345.98,774.90 1349.29,774.90 C1352.59,774.90 1355.90,774.90 1359.20,774.90 C1362.51,774.90 1365.81,774.90 1369.12,774.90 C1372.42,774.90 1375.73,774.90 1379.03,774.90 C1382.34,774.90 1385.64,774.90 1388.95,774.90 C1392.25,774.90 1395.56,774.90 1398.86,774.90 C1402.17,774.90 1405.47,774.90 1408.78,774.90 C1412.08,774.90 1415.39,774.90 1418.69,774.90 C1422.00,774.90 1425.31,774.90 1428.61,774.90 C1431.92,774.90 1435.22,774.90 1438.53,774.90 C1441.83,774.90 1445.14,774.90 1448.44,774.90 C1451.75,774.90 1455.05,774.90 1458.36,774.90 C1461.66,774.90 1464.97,774.90 1468.27,774.90 C1471.58,774.90 1474.88,774.90 1478.19,774.90 C1481.49,774.90 1484.80,774.90 1488.10,774.90 C1491.41,774.90 1494.71,774.90 1498.02,774.90 C1501.32,774.90 1504.63,774.90 1507.93,774.90 C1511.24,774.90 1514.54,771.40 1517.85,771.40 C1521.15,771.40 1524.46,771.40 1527.76,771.40 C1531.07,771.40 1534.37,771.40 1537.68,771.40 C1540.98,771.40 1544.29,771.40 1547.59,771.40 C1550.90,771.40 1554.20,771.40 1557.51,771.40 C1560.81,771.40 1564.12,771.40 1567.42,771.40 C1570.73,771.40 1574.03,771.40 1577.34,771.40 C1580.64,771.40 1583.95,771.40 1587.25,771.40 C1590.56,771.40 1593.86,771.40 1597.17,771.40 C1600.47,771.40 1603.78,771.40 1607.08,771.40 C1610.39,771.40 1613.69,771.40 1617.00,771.40" fill="none" stroke="#8cd147" stroke-width="1"/>
<path d="M1032.00,726.60 C1035.31,726.60 1038.61,726.60 1041.92,726.60 C1045.22,726.60 1048.53,726.60 1051.83,726.60 C1055.14,726.60 1058.44,726.60 1061.75,726.60 C1065.05,726.60 1068.36,726.60 1071.66,726.60 C1074.97,726.60 1078.27,726.60 1081.58,726.60 C1084.88,726.60 1088.19,726.60 1091.49,726.60 C1094.80,726.60 1098.10,726.60 1101.41,726.60 C1104.71,726.60 1108.02,726.60 1111.32,726.60 C1114.63,726.60 1117.93,726.60 1121.24,726.60 C1124.54,726.60 1127.85,726.60 1131.15,726.60 C1134.46,726.60 1137.76,726.60 1141.07,726.60 C1144.37,726.60 1147.68,726.60 1150.98,726.60 C1154.29,726.60 1157.59,726.60 1160.90,726.60 C1164.20,726.60 1167.51,726.60 1170.81,726.60 C1174.12,726.60 1177.42,726.60 1180.73,726.60 C1184.03,726.60 1187.34,726.60 1190.64,726.60 C1193.95,726.60 1197.25,726.60 1200.56,726.60 C1203.86,726.60 1207.17,726.60 1210.47,726.60 C1213.78,726.60 1217.08,726.60 1220.39,726.60 C1223.69,726.60 1227.00,726.60 1230.31,726.60 C1233.61,726.60 1236.92,726.60 1240.22,726.60 C1243.53,726.60 1246.83,726.60 1250.14,726.60 C1253.44,726.60 1256.75,726.60 1260.05,726.60 C1263.36,726.60 1266.66,726.60 1269.97,726.60 C1273.27,726.60 1276.58,726.60 1279.88,726.60 C1283.19,726.60 1286.49,726.60 1289.80,726.60 C1293.10,726.60 1296.41,726.60 1299.71,726.60 C1303.02,726.60 1306.32,726.60 1309.63,726.60 C1312.93,726.60 1316.24,726.60 1319.54,726.60 C1322.85,726.60 1326.15,726.60 1329.46,726.60 C1332.76,726.60 1336.07,726.60 1339.37,726.60 C1342.68,726.60 1345.98,726.60 1349.29,726.60 C1352.59,726.60 1355.90,726.60 1359.20,726.60 C1362.51,726.60 1365.81,726.60 1369.12,726.60 C1372.42,726.60 1375.73,726.60 1379.03,726.60 C1382.34,726.60 1385.64,726.60 1388.95,726.60 C1392.25,726.60 1395.56,726.60 1398.86,726.60 C1402.17,726.60 1405.47,726.60 1408.78,726.60 C1412.08,726.60 1415.39,726.60 1418.69,726.60 C1422.00,726.60 1425.31,726.60 1428.61,726.60 C1431.92,726.60 1435.22,726.60 1438.53,726.60 C1441.83,726.60 1445.14,726.60 1448.44,726.60 C1451.75,726.60 1455.05,726.60 1458.36,726.60 C1461.66,726.60 1464.97,726.60 1468.27,726.60 C1471.58,726.60 1474.88,726.60 1478.19,726.60 C1481.49,726.60 1484.80,726.60 1488.10,726.60 C1491.41,726.60 1494.71,726.60 1498.02,726.60 C1501.32,726.60 1504.63,726.60 1507.93,726.60 C1511.24,726.60 1514.54,723.90 1517.85,723.90 C1521.15,723.90 1524.46,723.90 1527.76,723.90 C1531.07,723.90 1534.37,723.90 1537.68,723.90 C1540.98,723.90 1544.29,723.90 1547.59,723.90 C1550.90,723.90 1554.20,723.90 1557.51,723.90 C1560.81,723.90 1564.12,723.90 1567.42,723.90 C1570.73,723.90 1574.03,723.90 1577.34,723.90 C1580.64,723.90 1583.95,723.90 1587.25,723.90 C1590.56,723.90 1593.86,723.90 1597.17,723.90 C1600.47,723.90 1603.78,723.90 1607.08,723.90 C1610.39,723.90 1613.69,723.90 1617.00,723.90" fill="none" stroke="#d1ac47" stroke-width="1"/>
<path d="M1032.00,674.30 C1035.31,674.30 1038.61,674.30 1041.92,674.30 C1045.22,674.30 1048.53,674.30 1051.83,674.30 C1055.14,674.30 1058.44,674.30 1061.75,674.30 C1065.05,674.30 1068.36,674.30 1071.66,674.30 C1074.97,674.30 1078.27,674.30 1081.58,674.30 C1084.88,674.30 1088.19,674.30 1091.49,674.30 C1094.80,674.30 1098.10,674.30 1101.41,674.30 C1104.71,674.30 1108.02,674.30 1111.32,674.30 C1114.63,674.30 1117.93,674.30 1121.24,674.30 C1124.54,674.30 1127.85,674.30 1131.15,674.30 C1134.46,674.30 1137.76,674.30 1141.07,674.30 C1144.37,674.30 1147.68,674.30 1150.98,674.30 C1154.29,674.30 1157.59,674.30 1160.90,674.30 C1164.20,674.30 1167.51,674.30 1170.81,674.30 C1174.12,674.30 1177.42,674.30 1180.73,674.30 C1184.03,674.30 1187.34,674.30 1190.64,674.30 C1193.95,674.30 1197.25,674.30 1200.56,674.30 C1203.86,674.30 1207.17,674.30 1210.47,674.30 C1213.78,674.30 1217.08,674.30 1220.39,674.30 C1223.69,674.30 1227.00,674.30 1230.31,674.30 C1233.61,674.30 1236.92,674.30 1240.22,674.30 C1243.53,674.30 1246.83,674.30 1250.14,674.30 C1253.44,674.30 1256.75,674.30 1260.05,674.30 C1263.36,674.30 1266.66,674.30 1269.97,674.30 C1273.27,674.30 1276.58,674.30 1279.88,674.30 C1283.19,674.30 1286.49,674.30 1289.80,674.30 C1293.10,674.30 1296.41,674.30 1299.71,674.30 C1303.02,674.30 1306.32,674.30 1309.63,674.30 C1312.93,674.30 1316.24,674.30 1319.54,674.30 C1322.85,674.30 1326.15,674.30 1329.46,674.30 C1332.76,674.30 1336.07,674.30 1339.37,674.30 C1342.68,674.30 1345.98,674.30 1349.29,674.30 C1352.59,674.30 1355.90,674.30 1359.20,674.30 C1362.51,674.30 1365.81,674.30 1369.12,674.30 C1372.42,674.30 1375.73,674.30 1379.03,674.30 C1382.34,674.30 1385.64,674.30 1388.95,674.30 C1392.25,674.30 1395.56,674.30 1398.86,674.30 C1402.17,674.30 1405.47,674.30 1408.78,674.30 C1412.08,674.30 1415.39,674.30 1418.69,674.30 C1422.00,674.30 1425.31,674.30 1428.61,674.30 C1431.92,674.30 1435.22,674.30 1438.53,674.30 C1441.83,674.30 1445.14,674.30 1448.44,674.30 C1451.75,674.30 1455.05,674.30 1458.36,674.30 C1461.66,674.30 1464.97,674.30 1468.27,674.30 C1471.58,674.30 1474.88,674.30 1478.19,674.30 C1481.49,674.30 1484.80,674.30 1488.10,674.30 C1491.41,674.30 1494.71,674.30 1498.02,674.30 C1501.32,674.30 1504.63,674.30 1507.93,674.30 C1511.24,674.30 1514.54,671.20 1517.85,671.20 C1521.15,671.20 1524.46,671.20 1527.76,671.20 C1531.07,671.20 1534.37,671.20 1537.68,671.20 C1540.98,671.20 1544.29,671.20 1547.59,671.20 C1550.90,671.20 1554.20,671.20 1557.51,671.20 C1560.81,671.20 1564.12,671.20 1567.42,671.20 C1570.73,671.20 1574.03,671.20 1577.34,671.20 C1580.64,671.20 1583.95,671.20 1587.25,671.20 C1590.56,671.20 1593.86,671.20 1597.17,671.20 C1600.47,671.20 1603.78,671.20 1607.08,671.20 C1610.39,671.20 1613.69,671.20 1617.00,671.20" fill="none" stroke="#d14747" stroke-width="1"/>
<g stroke="#6b6e73" stroke-width="1"><line x1="1026.8" y1="819.0" x2="1026.8" y2="825.0"/><line x1="1076.3" y1="819.0" x2="1076.3" y2="825.0"/><line x1="1125.8" y1="819.0" x2="1125.8" y2="825.0"/><line x1="1175.4" y1="819.0" x2="1175.4" y2="825.0"/><line x1="1224.9" y1="819.0" x2="1224.9" y2="825.0"/><line x1="1274.4" y1="819.0" x2="1274.4" y2="825.0"/><line x1="1323.9" y1="819.0" x2="1323.9" y2="825.0"/><line x1="1373.4" y1="819.0" x2="1373.4" y2="825.0"/><line x1="1423.0" y1="819.0" x2="1423.0" y2="825.0"/><line x1="1472.5" y1="819.0" x2="1472.5" y2="825.0"/><line x1="1522.0" y1="819.0" x2="1522.0" y2="825.0"/><line x1="1571.5" y1="819.0" x2="1571.5" y2="825.0"/></g>
<g class="xl"><text x="1026.8" y="841.5">20:45</text><text x="1076.3" y="841.5">20:50</text><text x="1125.8" y="841.5">20:55</text><text x="1175.4" y="841.5">21:00</text><text x="1224.9" y="841.5">21:05</text><text x="1274.4" y="841.5">21:10</text><text x="1323.9" y="841.5">21:15</text><text x="1373.4" y="841.5">21:20</text><text x="1423.0" y="841.5">21:25</text><text x="1472.5" y="841.5">21:30</text><text x="1522.0" y="841.5">21:35</text><text x="1571.5" y="841.5">21:40</text></g>
<g class="yl"><text x="1019.5" y="656.5">800 MB</text><text x="1019.5" y="698.5">600 MB</text><text x="1019.5" y="740.0">400 MB</text><text x="1019.5" y="781.5">200 MB</text><text x="1019.5" y="822.5">0 MB</text></g>
<line x1="1438.5" y1="652" x2="1438.5" y2="818.6" stroke="#a7aaae" stroke-opacity="0.15" stroke-width="1"/>
<circle cx="1438.5" cy="674.2" r="4" fill="#d14747"/>
<circle cx="1438.5" cy="726.5" r="4" fill="#d1ac47"/>
<circle cx="1438.5" cy="774.5" r="4" fill="#8cd147"/>
<circle cx="1438.5" cy="809.5" r="4" fill="#47d16a"/>
<circle cx="1438.5" cy="814.0" r="4" fill="#47d1d1"/>
<circle cx="1438.5" cy="817.5" r="4" fill="#476ad1"/>
<circle cx="1438.5" cy="818.5" r="4" fill="#d147d1"/>
</svg>

<!-- TOOLTIP -->
<div class="abs" style="left:1208px;top:654px;width:220px;height:154px;background:#17181a;border:1px solid #2a2b2e;border-radius:8px;box-shadow:0 4px 12px rgba(0,0,0,.35)"></div>
<div class="tt" style="left:1208px;top:654px;width:220px;height:154px">
  <div class="abs" style="left:10px;top:8px;font-weight:bold">1月20日 21:26</div>
  <div class="i" style="top:28px;background:#d14747"></div><div class="n" style="top:28px">qinglong</div><div class="v" style="top:28px">252.22 MB</div>
  <div class="i" style="top:46px;background:#d1ac47"></div><div class="n" style="top:46px">umami</div><div class="v" style="top:46px">230.78 MB</div>
  <div class="i" style="top:64px;background:#8cd147"></div><div class="n" style="top:64px">mysql</div><div class="v" style="top:64px">170.79 MB</div>
  <div class="i" style="top:82px;background:#47d16a"></div><div class="n" style="top:82px">beszel</div><div class="v" style="top:82px">22.22 MB</div>
  <div class="i" style="top:100px;background:#47d1d1"></div><div class="n" style="top:100px">sun-panel</div><div class="v" style="top:100px">18.16 MB</div>
  <div class="i" style="top:118px;background:#476ad1"></div><div class="n" style="top:118px">beszel-agent</div><div class="v" style="top:118px">3.45 MB</div>
  <div class="i" style="top:136px;background:#d147d1"></div><div class="n" style="top:136px">dpanel-plugin-explorer</div><div class="v" style="top:136px">0.21 MB</div>
</div>

</body></html>
